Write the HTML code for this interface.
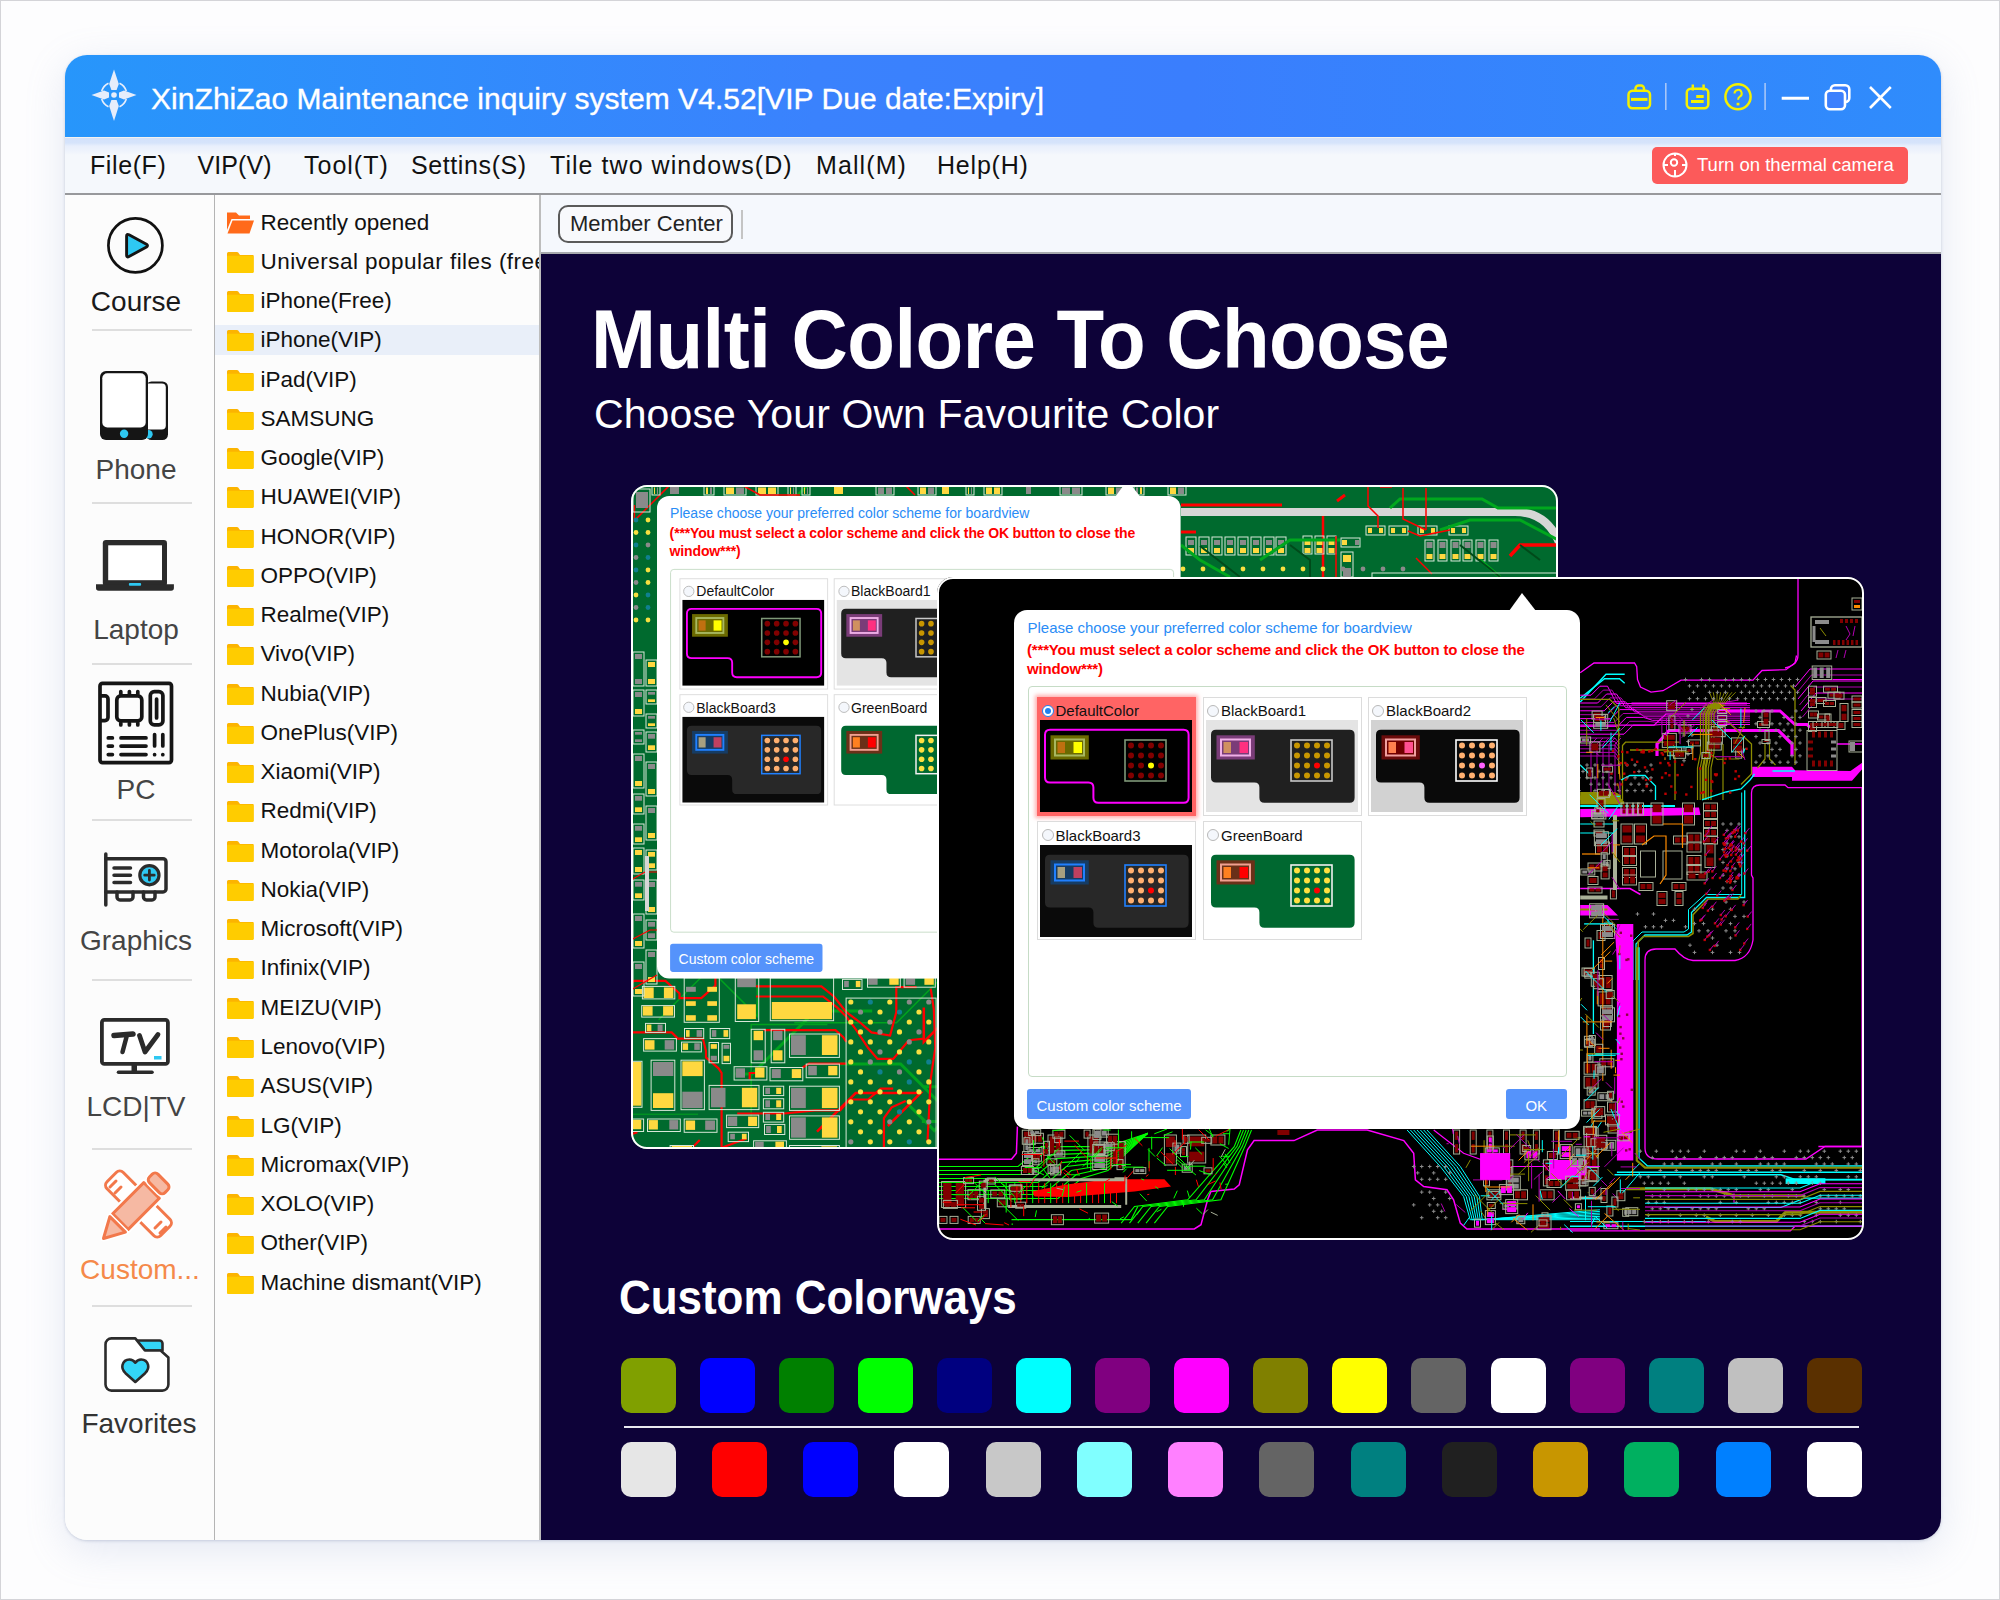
<!DOCTYPE html><html><head><meta charset="utf-8"><style>
*{margin:0;padding:0;box-sizing:border-box}
html,body{width:2000px;height:1600px;overflow:hidden;background:#fff;font-family:"Liberation Sans",sans-serif}
.a{position:absolute}
#frame{position:absolute;left:0;top:0;width:2000px;height:1600px;border:1px solid #d4d4d8;background:#fdfdfe}
#win{position:absolute;left:65px;top:55px;width:1876px;height:1485px;border-radius:22px;overflow:hidden;background:#fafafa;box-shadow:0 1px 3px rgba(120,135,170,0.35),0 10px 40px rgba(130,150,200,0.2)}
#in{position:absolute;left:-65px;top:-55px;width:2000px;height:1600px}
#title{left:65px;top:55px;width:1876px;height:82px;background:linear-gradient(90deg,#2796fb 0%,#3a82fd 40%,#3a7efd 60%,#2f8cfc 100%)}
.tt{left:151px;top:82px;letter-spacing:0.05px;-webkit-text-stroke:0.35px #fff;color:#fff;font-size:30px;white-space:nowrap;line-height:34px}
#menu{left:65px;top:137px;width:1876px;height:58px;background:linear-gradient(180deg,#f4f2f0 0px,#f4f2f0 1px,#d3e2fb 1.5px,#d6e4fb 6px,#e8effc 9px,#eef3fc 14px,#f5f8fc 18px,#f5f8fc 100%);border-bottom:2px solid #98999c}
.mi{top:150px;font-size:25px;line-height:30px;color:#111;white-space:nowrap}
#side{left:65px;top:195px;width:150px;height:1345px;background:#fcfcfc;border-right:1px solid #b4b4b4}
#tree{left:215px;top:195px;width:326px;height:1345px;background:#fcfcfc;border-right:2px solid #bdbdbd;overflow:hidden}
#tb{left:541px;top:195px;width:1400px;height:59px;background:#f5f8fd;border-bottom:2px solid #a8aaae}
#dark{left:541px;top:254px;width:1400px;height:1286px;background:#0d0238;overflow:hidden}
.lab{font-size:28px;line-height:30px;white-space:nowrap;text-align:center;width:148px;left:62px;color:#444}
.div{left:92px;width:100px;height:2px;background:#dedede}
.ti{left:262px;font-size:22.5px;line-height:26px;color:#111;white-space:nowrap}
.fd{left:227px;width:27px;height:21px}
.sw{width:55px;height:55px;border-radius:10px}
</style></head><body><div id="frame"></div>
<div id="win"><div id="in">
<div class="a" id="title"></div>
<svg class="a" style="left:87.5px;top:68.75px" width="52" height="52" viewBox="-26 -26 52 52">
<g fill="#e6edfb">
<path d="M0 -25.5 L4.8 -11 L2.6 -5 H-2.6 L-4.8 -11 Z"/>
<path d="M0 26 L4.8 11 L2.6 5 H-2.6 L-4.8 11 Z"/>
<path d="M-22.5 0 L-10 -4.5 L-5 -2.4 V2.4 L-10 4.5 Z"/>
<path d="M22.5 0 L10 -4.5 L5 -2.4 V2.4 L10 4.5 Z"/>
<circle cx="0" cy="0" r="2.8"/>
</g>
<g fill="none" stroke="#e6edfb" stroke-width="1.7">
<path d="M-12.3 -4 A13 13 0 0 1 -5.5 -11.8"/>
<path d="M5.5 -11.8 A13 13 0 0 1 12.3 -4"/>
<path d="M12.3 4 A13 13 0 0 1 5.5 11.8"/>
<path d="M-5.5 11.8 A13 13 0 0 1 -12.3 4"/>
</g></svg>
<div class="a tt">XinZhiZao Maintenance inquiry system V4.52[VIP Due date:Expiry]</div>
<svg class="a" style="left:1615px;top:75px" width="290" height="45" viewBox="1615 75 290 45">
<g fill="none" stroke="#f4f000" stroke-width="2.5" stroke-linejoin="round">
<rect x="1628.5" y="90.7" width="21.5" height="17.6" rx="4"/>
<path d="M1635.5 90.5 V88.5 a3 3 0 0 1 3 -3 H1641 a3 3 0 0 1 3 3 V90.5"/>
<rect x="1686.8" y="88.8" width="21.5" height="19.5" rx="4"/>
<path d="M1692.8 84.5 V90.5 M1703.6 84.5 V90.5"/>
<circle cx="1738" cy="96.75" r="12.6"/>
<path d="M1734.5 93.5 a3.6 3.6 0 1 1 5 3.3 c-1.2 0.6 -1.4 1.4 -1.4 3" stroke-width="2"/>
</g>
<rect x="1631" y="97.9" width="16.5" height="3" fill="#f4f000"/>
<rect x="1696.2" y="95" width="7.5" height="3" fill="#f4f000"/>
<rect x="1691" y="100" width="12.7" height="3" fill="#f4f000"/>
<rect x="1736.6" y="102.8" width="2.8" height="2.6" fill="#f4f000"/>
<rect x="1665" y="83" width="1.6" height="27" fill="#a6c6f8"/>
<rect x="1764.3" y="83" width="1.6" height="27" fill="#a6c6f8"/>
<g stroke="#fff" stroke-width="2.6">
<path d="M1781.7 98.3 H1809" stroke-width="3"/>
<rect x="1830.9" y="85.3" width="18.4" height="16.7" rx="4" fill="#3a7efc"/>
<rect x="1825.8" y="90.8" width="19.2" height="18.4" rx="4" fill="#3d80fd"/>
<path d="M1870 87 L1890.8 108 M1890.8 87 L1870 108"/>
</g>
</svg>
<div class="a" id="menu"></div>
<div class="a mi" style="left:90px;letter-spacing:0.6px">File(F)</div>
<div class="a mi" style="left:197.5px;letter-spacing:0.1px">VIP(V)</div>
<div class="a mi" style="left:304px;letter-spacing:1px">Tool(T)</div>
<div class="a mi" style="left:411px;letter-spacing:0.6px">Settins(S)</div>
<div class="a mi" style="left:550px;letter-spacing:1.05px">Tile two windows(D)</div>
<div class="a mi" style="left:816px;letter-spacing:1.1px">Mall(M)</div>
<div class="a mi" style="left:937px;letter-spacing:0.8px">Help(H)</div>
<div class="a" style="left:1652px;top:147px;width:256px;height:37px;background:#fc5a5a;border-radius:5px"></div>
<svg class="a" style="left:1660px;top:150px" width="30" height="30" viewBox="0 0 30 30"><g fill="none" stroke="#fff" stroke-width="2">
<circle cx="15" cy="15" r="11.5"/><circle cx="14" cy="12.5" r="3.2"/><path d="M3.5 15 H8 M22 15 H26.5 M15 20 V26.5 M15 3.5 V6"/></g></svg>
<div class="a" style="left:1697px;top:154px;font-size:18.5px;line-height:22px;color:#fff;white-space:nowrap">Turn on thermal camera</div>
<div class="a" id="side"></div>
<svg class="a" style="left:90px;top:205px" width="90" height="85" viewBox="90 205 90 85">
<circle cx="135.4" cy="245.4" r="27" fill="none" stroke="#111" stroke-width="2.7"/>
<path d="M126.6 236 Q126.6 233.5 129 234.8 L146.5 244.2 Q148.5 245.6 146.5 247 L129 256.5 Q126.6 257.8 126.6 255.2 Z" fill="#2ec8f2" stroke="#141414" stroke-width="2.9" stroke-linejoin="round"/></svg>
<div class="a lab" style="top:287px;color:#1a1a1a">Course</div>
<div class="a div" style="top:329px"></div>
<svg class="a" style="left:90px;top:360px" width="90" height="90" viewBox="90 360 90 90">
<rect x="146" y="381.4" width="22" height="58.6" rx="5.5" fill="#151515"/>
<rect x="140" y="383.6" width="25.8" height="46" rx="4" fill="#fff"/>
<circle cx="148.5" cy="434.2" r="4.2" fill="#2ec8f2"/>
<rect x="100" y="371" width="48" height="69" rx="6" fill="#151515"/>
<rect x="102.3" y="373.3" width="43.4" height="54.2" rx="5" fill="#fff"/>
<circle cx="124.1" cy="433.7" r="4.2" fill="#2ec8f2"/></svg>
<div class="a lab" style="top:455px">Phone</div>
<div class="a div" style="top:502px"></div>
<svg class="a" style="left:90px;top:530px" width="90" height="70" viewBox="90 530 90 70">
<rect x="102.8" y="540.1" width="64.2" height="46" rx="3.2" fill="#2b2b2b"/>
<path d="M96 584.2 H173.9 V588 a2.8 2.8 0 0 1 -2.8 2.8 H98.8 a2.8 2.8 0 0 1 -2.8 -2.8 Z" fill="#2b2b2b"/>
<rect x="108.2" y="545.3" width="53.8" height="34.9" fill="#fff"/>
<rect x="128.9" y="583.1" width="12.2" height="2.7" rx="1" fill="#2ec8f2"/></svg>
<div class="a lab" style="top:615px">Laptop</div>
<div class="a div" style="top:663px"></div>
<svg class="a" style="left:96px;top:679px" width="80" height="88" viewBox="0 0 80 88">
<g fill="none" stroke="#151515" stroke-width="3.7" stroke-linejoin="round">
<rect x="4" y="4.4" width="71.5" height="79.2" rx="2.5"/>
<rect x="20.8" y="16.9" width="25" height="25" rx="4"/>
<rect x="54.3" y="12.6" width="12.6" height="33.3" rx="4"/>
<path d="M4 16.9 H9 a3 3 0 0 1 3 3 V38.6 a3 3 0 0 1 -3 3 H4"/>
</g>
<g stroke="#151515" stroke-width="3.7" stroke-linecap="round">
<path d="M60.6 20 V39"/>
<path d="M24.8 12.5 V15 M33.4 12.5 V15 M41.8 12.5 V15 M24.8 44 V46 M33.4 44 V46 M41.8 44 V46"/>
<path d="M12.3 58.9 H16.4 M25 58.9 H50 M12.3 67.1 H16.4 M25 67.1 H50 M12.3 75.6 H16.4 M25 75.6 H50"/>
<path d="M58.6 55.5 V67 M66.8 55.5 V67 M58.6 75.6 V75.7 M66.8 75.6 V75.7"/>
</g></svg>
<div class="a lab" style="top:775px">PC</div>
<div class="a div" style="top:819px"></div>
<svg class="a" style="left:95px;top:840px" width="85" height="75" viewBox="95 840 85 75">
<g fill="none" stroke="#2b2b2b" stroke-width="3.5" stroke-linecap="round" stroke-linejoin="round">
<path d="M105.8 854 V905"/>
<path d="M105.8 858.7 H163 a3 3 0 0 1 3 3 V889 a3 3 0 0 1 -3 3 H105.8"/>
<path d="M117 892 V897 a3 3 0 0 0 3 3 H130 a3 3 0 0 0 3 -3 V892 M143.5 892 V897 a3 3 0 0 0 3 3 H152 a3 3 0 0 0 3 -3 V892"/>
<path d="M114 868.1 H130.5 M114 875.3 H130.5 M114 882.5 H130.5"/>
</g>
<circle cx="149.4" cy="875.2" r="9.6" fill="#2ec8f2" stroke="#2b2b2b" stroke-width="3.2"/>
<path d="M149.4 870.5 V880 M144.7 875.2 H154.2" stroke="#2b2b2b" stroke-width="2.8" stroke-linecap="round"/></svg>
<div class="a lab" style="top:926px">Graphics</div>
<div class="a div" style="top:979px"></div>
<svg class="a" style="left:90px;top:1005px" width="90" height="80" viewBox="90 1005 90 80">
<rect x="101.9" y="1019.9" width="66" height="44" rx="2.5" fill="#fff" stroke="#2b2b2b" stroke-width="3.8"/>
<path d="M133 1065 V1071 M135.5 1065 V1071" stroke="#2b2b2b" stroke-width="3"/>
<path d="M118.5 1072.3 H152" stroke="#2b2b2b" stroke-width="3.6" stroke-linecap="round"/>
<path d="M114 1035.5 L133 1034" stroke="#2b2b2b" stroke-width="5.5" stroke-linecap="round"/>
<path d="M126.5 1037 L122.5 1052" stroke="#2b2b2b" stroke-width="4.5" stroke-linecap="round"/>
<path d="M139.5 1035.5 L145 1052 L158 1034.5" fill="none" stroke="#2b2b2b" stroke-width="4.8" stroke-linecap="round" stroke-linejoin="round"/>
<rect x="154" y="1056" width="7.5" height="3.5" fill="#2ec8f2"/></svg>
<div class="a lab" style="top:1092px">LCD|TV</div>
<div class="a div" style="top:1148px"></div>
<svg class="a" style="left:100px;top:1166px" width="78" height="78" viewBox="0 0 78 78">
<g stroke="#f2784b" stroke-width="3" stroke-linejoin="round" stroke-linecap="round">
<rect x="-38" y="-11.5" width="76" height="23" rx="5" fill="#fff" transform="translate(38.5 38) rotate(45)"/>
<path d="M10 21 L16 15 M15 27 L21 21 M55 62 L61 56 M60 67 L66 61" fill="none"/>
<g transform="translate(36 40) rotate(-45)">
<rect x="-22" y="-11" width="44" height="22" fill="#f6b9a3" stroke="#fff" stroke-width="7"/>
<rect x="-22" y="-11" width="44" height="22" fill="#f6b9a3"/>
<path d="M-26 -11 L-46 0 L-26 11 Z" fill="#f6b9a3" stroke="#fff" stroke-width="6"/>
<path d="M-26 -11 L-46 0 L-26 11 Z" fill="#f6b9a3"/>
<rect x="26" y="-11" width="12" height="22" rx="4" fill="#f6b9a3" stroke="#fff" stroke-width="6"/>
<rect x="26" y="-11" width="12" height="22" rx="4" fill="#f6b9a3"/>
</g></g></svg>
<div class="a lab" style="top:1255px;left:66px;color:#f5894a">Custom...</div>
<div class="a div" style="top:1305px"></div>
<svg class="a" style="left:95px;top:1325px" width="85" height="75" viewBox="95 1325 85 75">
<g stroke="#2b2b2b" stroke-width="2.6" stroke-linejoin="round">
<path d="M136.5 1340.5 H159.5 a3 3 0 0 1 3 3 V1350.5 H145 Z" fill="#33d6f8"/>
<path d="M111.5 1338.4 H135.3 L144.9 1350.5 H160.6 L168.4 1357.5 V1384.6 a6 6 0 0 1 -6 6 H111.5 a6 6 0 0 1 -6 -6 V1344.4 a6 6 0 0 1 6 -6 Z" fill="#fff"/>
<path d="M135.3 1382 L125.5 1373.2 Q121.5 1369 122.5 1365 Q124 1359.5 129.5 1359.5 Q133 1359.5 135.3 1362.7 Q137.6 1359.5 141.1 1359.5 Q146.6 1359.5 148.1 1365 Q149.1 1369 145.1 1373.2 Z" fill="#33d6f8"/>
</g></svg>
<div class="a lab" style="top:1409px;left:65px;color:#333">Favorites</div>
<div class="a" id="tree"></div>
<div class="a" style="left:215px;top:325px;width:324px;height:30px;background:#e9eff9"></div>
<div class="a" style="left:214px;top:194px;width:325px;height:1346px;overflow:hidden">
<svg class="a" style="left:12px;top:17.0px" width="30" height="24" viewBox="0 0 30 24"><path d="M1 1.5 H10 L13 4.5 H24 V8 H5.5 L1 19 Z" fill="#ff6a1a"/><path d="M6.5 9.5 H28 L23.5 22.5 H1.5 Z" fill="#ff6a1a"/></svg>
<div class="a ti" style="left:46.5px;top:15.5px">Recently opened</div>
<svg class="a" style="left:13px;top:56.8px" width="28" height="22" viewBox="0 0 28 22"><path d="M0 2.5 a1.5 1.5 0 0 1 1.5 -1.5 H10 a1.5 1.5 0 0 1 1.2 0.6 L13 4 H26.5 V21 H1 a1 1 0 0 1 -1 -1 Z" fill="#fcb400"/><rect x="0" y="4.7" width="26.7" height="17.3" rx="1" fill="#ffcc00"/></svg>
<div class="a ti" style="left:46.5px;top:54.8px;letter-spacing:0.45px">Universal popular files (free)</div>
<svg class="a" style="left:13px;top:96.0px" width="28" height="22" viewBox="0 0 28 22"><path d="M0 2.5 a1.5 1.5 0 0 1 1.5 -1.5 H10 a1.5 1.5 0 0 1 1.2 0.6 L13 4 H26.5 V21 H1 a1 1 0 0 1 -1 -1 Z" fill="#fcb400"/><rect x="0" y="4.7" width="26.7" height="17.3" rx="1" fill="#ffcc00"/></svg>
<div class="a ti" style="left:46.5px;top:94.0px">iPhone(Free)</div>
<svg class="a" style="left:13px;top:135.3px" width="28" height="22" viewBox="0 0 28 22"><path d="M0 2.5 a1.5 1.5 0 0 1 1.5 -1.5 H10 a1.5 1.5 0 0 1 1.2 0.6 L13 4 H26.5 V21 H1 a1 1 0 0 1 -1 -1 Z" fill="#fcb400"/><rect x="0" y="4.7" width="26.7" height="17.3" rx="1" fill="#ffcc00"/></svg>
<div class="a ti" style="left:46.5px;top:133.3px">iPhone(VIP)</div>
<svg class="a" style="left:13px;top:174.5px" width="28" height="22" viewBox="0 0 28 22"><path d="M0 2.5 a1.5 1.5 0 0 1 1.5 -1.5 H10 a1.5 1.5 0 0 1 1.2 0.6 L13 4 H26.5 V21 H1 a1 1 0 0 1 -1 -1 Z" fill="#fcb400"/><rect x="0" y="4.7" width="26.7" height="17.3" rx="1" fill="#ffcc00"/></svg>
<div class="a ti" style="left:46.5px;top:172.5px">iPad(VIP)</div>
<svg class="a" style="left:13px;top:213.8px" width="28" height="22" viewBox="0 0 28 22"><path d="M0 2.5 a1.5 1.5 0 0 1 1.5 -1.5 H10 a1.5 1.5 0 0 1 1.2 0.6 L13 4 H26.5 V21 H1 a1 1 0 0 1 -1 -1 Z" fill="#fcb400"/><rect x="0" y="4.7" width="26.7" height="17.3" rx="1" fill="#ffcc00"/></svg>
<div class="a ti" style="left:46.5px;top:211.8px">SAMSUNG</div>
<svg class="a" style="left:13px;top:253.1px" width="28" height="22" viewBox="0 0 28 22"><path d="M0 2.5 a1.5 1.5 0 0 1 1.5 -1.5 H10 a1.5 1.5 0 0 1 1.2 0.6 L13 4 H26.5 V21 H1 a1 1 0 0 1 -1 -1 Z" fill="#fcb400"/><rect x="0" y="4.7" width="26.7" height="17.3" rx="1" fill="#ffcc00"/></svg>
<div class="a ti" style="left:46.5px;top:251.1px">Google(VIP)</div>
<svg class="a" style="left:13px;top:292.3px" width="28" height="22" viewBox="0 0 28 22"><path d="M0 2.5 a1.5 1.5 0 0 1 1.5 -1.5 H10 a1.5 1.5 0 0 1 1.2 0.6 L13 4 H26.5 V21 H1 a1 1 0 0 1 -1 -1 Z" fill="#fcb400"/><rect x="0" y="4.7" width="26.7" height="17.3" rx="1" fill="#ffcc00"/></svg>
<div class="a ti" style="left:46.5px;top:290.3px">HUAWEI(VIP)</div>
<svg class="a" style="left:13px;top:331.6px" width="28" height="22" viewBox="0 0 28 22"><path d="M0 2.5 a1.5 1.5 0 0 1 1.5 -1.5 H10 a1.5 1.5 0 0 1 1.2 0.6 L13 4 H26.5 V21 H1 a1 1 0 0 1 -1 -1 Z" fill="#fcb400"/><rect x="0" y="4.7" width="26.7" height="17.3" rx="1" fill="#ffcc00"/></svg>
<div class="a ti" style="left:46.5px;top:329.6px">HONOR(VIP)</div>
<svg class="a" style="left:13px;top:370.8px" width="28" height="22" viewBox="0 0 28 22"><path d="M0 2.5 a1.5 1.5 0 0 1 1.5 -1.5 H10 a1.5 1.5 0 0 1 1.2 0.6 L13 4 H26.5 V21 H1 a1 1 0 0 1 -1 -1 Z" fill="#fcb400"/><rect x="0" y="4.7" width="26.7" height="17.3" rx="1" fill="#ffcc00"/></svg>
<div class="a ti" style="left:46.5px;top:368.8px">OPPO(VIP)</div>
<svg class="a" style="left:13px;top:410.1px" width="28" height="22" viewBox="0 0 28 22"><path d="M0 2.5 a1.5 1.5 0 0 1 1.5 -1.5 H10 a1.5 1.5 0 0 1 1.2 0.6 L13 4 H26.5 V21 H1 a1 1 0 0 1 -1 -1 Z" fill="#fcb400"/><rect x="0" y="4.7" width="26.7" height="17.3" rx="1" fill="#ffcc00"/></svg>
<div class="a ti" style="left:46.5px;top:408.1px">Realme(VIP)</div>
<svg class="a" style="left:13px;top:449.4px" width="28" height="22" viewBox="0 0 28 22"><path d="M0 2.5 a1.5 1.5 0 0 1 1.5 -1.5 H10 a1.5 1.5 0 0 1 1.2 0.6 L13 4 H26.5 V21 H1 a1 1 0 0 1 -1 -1 Z" fill="#fcb400"/><rect x="0" y="4.7" width="26.7" height="17.3" rx="1" fill="#ffcc00"/></svg>
<div class="a ti" style="left:46.5px;top:447.4px">Vivo(VIP)</div>
<svg class="a" style="left:13px;top:488.6px" width="28" height="22" viewBox="0 0 28 22"><path d="M0 2.5 a1.5 1.5 0 0 1 1.5 -1.5 H10 a1.5 1.5 0 0 1 1.2 0.6 L13 4 H26.5 V21 H1 a1 1 0 0 1 -1 -1 Z" fill="#fcb400"/><rect x="0" y="4.7" width="26.7" height="17.3" rx="1" fill="#ffcc00"/></svg>
<div class="a ti" style="left:46.5px;top:486.6px">Nubia(VIP)</div>
<svg class="a" style="left:13px;top:527.9px" width="28" height="22" viewBox="0 0 28 22"><path d="M0 2.5 a1.5 1.5 0 0 1 1.5 -1.5 H10 a1.5 1.5 0 0 1 1.2 0.6 L13 4 H26.5 V21 H1 a1 1 0 0 1 -1 -1 Z" fill="#fcb400"/><rect x="0" y="4.7" width="26.7" height="17.3" rx="1" fill="#ffcc00"/></svg>
<div class="a ti" style="left:46.5px;top:525.9px">OnePlus(VIP)</div>
<svg class="a" style="left:13px;top:567.1px" width="28" height="22" viewBox="0 0 28 22"><path d="M0 2.5 a1.5 1.5 0 0 1 1.5 -1.5 H10 a1.5 1.5 0 0 1 1.2 0.6 L13 4 H26.5 V21 H1 a1 1 0 0 1 -1 -1 Z" fill="#fcb400"/><rect x="0" y="4.7" width="26.7" height="17.3" rx="1" fill="#ffcc00"/></svg>
<div class="a ti" style="left:46.5px;top:565.1px">Xiaomi(VIP)</div>
<svg class="a" style="left:13px;top:606.4px" width="28" height="22" viewBox="0 0 28 22"><path d="M0 2.5 a1.5 1.5 0 0 1 1.5 -1.5 H10 a1.5 1.5 0 0 1 1.2 0.6 L13 4 H26.5 V21 H1 a1 1 0 0 1 -1 -1 Z" fill="#fcb400"/><rect x="0" y="4.7" width="26.7" height="17.3" rx="1" fill="#ffcc00"/></svg>
<div class="a ti" style="left:46.5px;top:604.4px">Redmi(VIP)</div>
<svg class="a" style="left:13px;top:645.7px" width="28" height="22" viewBox="0 0 28 22"><path d="M0 2.5 a1.5 1.5 0 0 1 1.5 -1.5 H10 a1.5 1.5 0 0 1 1.2 0.6 L13 4 H26.5 V21 H1 a1 1 0 0 1 -1 -1 Z" fill="#fcb400"/><rect x="0" y="4.7" width="26.7" height="17.3" rx="1" fill="#ffcc00"/></svg>
<div class="a ti" style="left:46.5px;top:643.7px">Motorola(VIP)</div>
<svg class="a" style="left:13px;top:684.9px" width="28" height="22" viewBox="0 0 28 22"><path d="M0 2.5 a1.5 1.5 0 0 1 1.5 -1.5 H10 a1.5 1.5 0 0 1 1.2 0.6 L13 4 H26.5 V21 H1 a1 1 0 0 1 -1 -1 Z" fill="#fcb400"/><rect x="0" y="4.7" width="26.7" height="17.3" rx="1" fill="#ffcc00"/></svg>
<div class="a ti" style="left:46.5px;top:682.9px">Nokia(VIP)</div>
<svg class="a" style="left:13px;top:724.2px" width="28" height="22" viewBox="0 0 28 22"><path d="M0 2.5 a1.5 1.5 0 0 1 1.5 -1.5 H10 a1.5 1.5 0 0 1 1.2 0.6 L13 4 H26.5 V21 H1 a1 1 0 0 1 -1 -1 Z" fill="#fcb400"/><rect x="0" y="4.7" width="26.7" height="17.3" rx="1" fill="#ffcc00"/></svg>
<div class="a ti" style="left:46.5px;top:722.2px">Microsoft(VIP)</div>
<svg class="a" style="left:13px;top:763.4px" width="28" height="22" viewBox="0 0 28 22"><path d="M0 2.5 a1.5 1.5 0 0 1 1.5 -1.5 H10 a1.5 1.5 0 0 1 1.2 0.6 L13 4 H26.5 V21 H1 a1 1 0 0 1 -1 -1 Z" fill="#fcb400"/><rect x="0" y="4.7" width="26.7" height="17.3" rx="1" fill="#ffcc00"/></svg>
<div class="a ti" style="left:46.5px;top:761.4px">Infinix(VIP)</div>
<svg class="a" style="left:13px;top:802.7px" width="28" height="22" viewBox="0 0 28 22"><path d="M0 2.5 a1.5 1.5 0 0 1 1.5 -1.5 H10 a1.5 1.5 0 0 1 1.2 0.6 L13 4 H26.5 V21 H1 a1 1 0 0 1 -1 -1 Z" fill="#fcb400"/><rect x="0" y="4.7" width="26.7" height="17.3" rx="1" fill="#ffcc00"/></svg>
<div class="a ti" style="left:46.5px;top:800.7px">MEIZU(VIP)</div>
<svg class="a" style="left:13px;top:842.0px" width="28" height="22" viewBox="0 0 28 22"><path d="M0 2.5 a1.5 1.5 0 0 1 1.5 -1.5 H10 a1.5 1.5 0 0 1 1.2 0.6 L13 4 H26.5 V21 H1 a1 1 0 0 1 -1 -1 Z" fill="#fcb400"/><rect x="0" y="4.7" width="26.7" height="17.3" rx="1" fill="#ffcc00"/></svg>
<div class="a ti" style="left:46.5px;top:840.0px">Lenovo(VIP)</div>
<svg class="a" style="left:13px;top:881.2px" width="28" height="22" viewBox="0 0 28 22"><path d="M0 2.5 a1.5 1.5 0 0 1 1.5 -1.5 H10 a1.5 1.5 0 0 1 1.2 0.6 L13 4 H26.5 V21 H1 a1 1 0 0 1 -1 -1 Z" fill="#fcb400"/><rect x="0" y="4.7" width="26.7" height="17.3" rx="1" fill="#ffcc00"/></svg>
<div class="a ti" style="left:46.5px;top:879.2px">ASUS(VIP)</div>
<svg class="a" style="left:13px;top:920.5px" width="28" height="22" viewBox="0 0 28 22"><path d="M0 2.5 a1.5 1.5 0 0 1 1.5 -1.5 H10 a1.5 1.5 0 0 1 1.2 0.6 L13 4 H26.5 V21 H1 a1 1 0 0 1 -1 -1 Z" fill="#fcb400"/><rect x="0" y="4.7" width="26.7" height="17.3" rx="1" fill="#ffcc00"/></svg>
<div class="a ti" style="left:46.5px;top:918.5px">LG(VIP)</div>
<svg class="a" style="left:13px;top:959.7px" width="28" height="22" viewBox="0 0 28 22"><path d="M0 2.5 a1.5 1.5 0 0 1 1.5 -1.5 H10 a1.5 1.5 0 0 1 1.2 0.6 L13 4 H26.5 V21 H1 a1 1 0 0 1 -1 -1 Z" fill="#fcb400"/><rect x="0" y="4.7" width="26.7" height="17.3" rx="1" fill="#ffcc00"/></svg>
<div class="a ti" style="left:46.5px;top:957.7px">Micromax(VIP)</div>
<svg class="a" style="left:13px;top:999.0px" width="28" height="22" viewBox="0 0 28 22"><path d="M0 2.5 a1.5 1.5 0 0 1 1.5 -1.5 H10 a1.5 1.5 0 0 1 1.2 0.6 L13 4 H26.5 V21 H1 a1 1 0 0 1 -1 -1 Z" fill="#fcb400"/><rect x="0" y="4.7" width="26.7" height="17.3" rx="1" fill="#ffcc00"/></svg>
<div class="a ti" style="left:46.5px;top:997.0px">XOLO(VIP)</div>
<svg class="a" style="left:13px;top:1038.3px" width="28" height="22" viewBox="0 0 28 22"><path d="M0 2.5 a1.5 1.5 0 0 1 1.5 -1.5 H10 a1.5 1.5 0 0 1 1.2 0.6 L13 4 H26.5 V21 H1 a1 1 0 0 1 -1 -1 Z" fill="#fcb400"/><rect x="0" y="4.7" width="26.7" height="17.3" rx="1" fill="#ffcc00"/></svg>
<div class="a ti" style="left:46.5px;top:1036.3px">Other(VIP)</div>
<svg class="a" style="left:13px;top:1077.5px" width="28" height="22" viewBox="0 0 28 22"><path d="M0 2.5 a1.5 1.5 0 0 1 1.5 -1.5 H10 a1.5 1.5 0 0 1 1.2 0.6 L13 4 H26.5 V21 H1 a1 1 0 0 1 -1 -1 Z" fill="#fcb400"/><rect x="0" y="4.7" width="26.7" height="17.3" rx="1" fill="#ffcc00"/></svg>
<div class="a ti" style="left:46.5px;top:1075.5px">Machine dismant(VIP)</div>
</div>
<div class="a" id="tb"></div>
<div class="a" style="left:558px;top:205px;width:175px;height:38px;border:2px solid #5a5a5a;border-radius:10px;background:#f8f9fc"></div>
<div class="a" style="left:570px;top:211px;font-size:22px;line-height:26px;color:#222;white-space:nowrap">Member Center</div>
<div class="a" style="left:741px;top:210px;width:2px;height:29px;background:#c4c4c4"></div>
<div class="a" id="dark"></div>
<div class="a" style="left:591px;top:290.5px;font-size:78px;line-height:90px;font-weight:700;color:#fff;letter-spacing:-0.52px;transform:scaleY(1.075);transform-origin:0 0;white-space:nowrap">Multi Colore To Choose</div>
<div class="a" style="left:594px;top:390px;font-size:41px;letter-spacing:0.1px;line-height:48px;color:#fff;white-space:nowrap">Choose Your Own Favourite Color</div>
<svg class="a" style="left:631px;top:485px" width="927" height="664" viewBox="631 485 927 664"><defs><clipPath id="cb"><rect x="631" y="485" width="927" height="664" rx="16"/></clipPath></defs><g clip-path="url(#cb)"><rect x="631" y="485" width="927" height="664" fill="#006a2e"/><polyline points="851.6,846.4 925.7,846.4 953.9,818.2 910.5,861.6" fill="none" stroke="#00a21e" stroke-width="1"/><polyline points="1435.7,832.4 1424.6,832.4 1411.6,819.4 1337.2,745" fill="none" stroke="#00a21e" stroke-width="3"/><polyline points="1043.2,1106.2 1060,1123.1 1019.5,1082.5 1069.6,1032.3" fill="none" stroke="#00a21e" stroke-width="1.5"/><polyline points="1263.2,1101.8 1342.6,1101.8 1420.1,1101.8 1420.1,1022.7" fill="none" stroke="#00a21e" stroke-width="1.5"/><polyline points="746.4,805 667.1,884.3 667.1,844.4 667.1,897.5" fill="none" stroke="#00a21e" stroke-width="1.5"/><polyline points="1297,704.8 1342.4,659.4 1342.4,671.6 1372.8,671.6" fill="none" stroke="#00a21e" stroke-width="1.5"/><polyline points="921.9,1121.5 958.3,1121.5 900.6,1063.9 840.5,1063.9" fill="none" stroke="#00a21e" stroke-width="3"/><polyline points="911.9,710 991,710 971.7,690.7 897.5,690.7" fill="none" stroke="#00a21e" stroke-width="1"/><polyline points="1177.4,1119 1177.4,1091.4 1228.8,1039.9 1297.9,970.9" fill="none" stroke="#00a21e" stroke-width="1"/><polyline points="1531.5,939 1531.5,913.4 1531.5,970.9 1531.5,1047.3" fill="none" stroke="#00a21e" stroke-width="1.5"/><polyline points="1381.7,1122.9 1381.7,1067.4 1407.4,1093.1 1384.6,1093.1" fill="none" stroke="#00a21e" stroke-width="1.5"/><polyline points="1177.4,764.7 1111.9,764.7 1151.3,725.3 1151.3,657.1" fill="none" stroke="#00a21e" stroke-width="3"/><polyline points="1511.8,1100.8 1511.8,1058.8 1477.9,1058.8 1496.3,1058.8" fill="none" stroke="#00a21e" stroke-width="3"/><polyline points="1105.9,616.8 1156.3,667.2 1183,640.4 1165.1,640.4" fill="none" stroke="#00a21e" stroke-width="1"/><polyline points="957.2,616 885,616 885,605.5 885,578.1" fill="none" stroke="#00a21e" stroke-width="1"/><polyline points="1069.4,1000.6 1069.4,1064.9 1069.4,1108.7 1053.3,1092.6" fill="none" stroke="#00a21e" stroke-width="1"/><polyline points="956.6,914.6 925.4,883.3 925.4,823.1 925.4,810.1" fill="none" stroke="#00a21e" stroke-width="3"/><polyline points="1233.8,844.4 1167.7,778.4 1123,778.4 1165.2,778.4" fill="none" stroke="#00a21e" stroke-width="1"/><polyline points="1311.2,859.4 1311.2,799.2 1311.2,836.4 1294.2,836.4" fill="none" stroke="#00a21e" stroke-width="1.5"/><polyline points="798.3,536.4 798.3,494.6 834,458.8 834,432.4" fill="none" stroke="#00a21e" stroke-width="3"/><polyline points="1527.5,760.7 1464.6,697.8 1537.4,770.6 1611.5,696.5" fill="none" stroke="#00a21e" stroke-width="1"/><polyline points="757.3,984.4 757.3,1016.4 709.7,968.7 658.7,1019.7" fill="none" stroke="#00a21e" stroke-width="1.5"/><polyline points="1075.5,739.1 1075.5,712.4 1075.5,771.3 1126.1,821.9" fill="none" stroke="#00a21e" stroke-width="3"/><polyline points="698.1,1114.2 626.4,1114.2 566.1,1114.2 566.1,1178.5" fill="none" stroke="#00a21e" stroke-width="1"/><polyline points="1207.5,933.3 1207.5,961.1 1230.3,984 1298.7,915.6" fill="none" stroke="#00a21e" stroke-width="3"/><polyline points="735.3,1074.1 752.1,1074.1 815.1,1011.1 872.2,1011.1" fill="none" stroke="#00a21e" stroke-width="3"/><polyline points="957.5,961.8 896.5,1022.8 854.7,1022.8 794.3,1022.8" fill="none" stroke="#00a21e" stroke-width="1.5"/><polyline points="1078.2,1004.4 1063.4,989.6 1092.3,1018.5 1063.3,1018.5" fill="none" stroke="#00a21e" stroke-width="1.5"/><polyline points="1046.5,1022.3 1046.5,1091.6 1046.5,1108.5 982,1108.5" fill="none" stroke="#00a21e" stroke-width="3"/><polyline points="1017.2,978.6 998.2,978.6 951.3,978.6 1016,978.6" fill="none" stroke="#00a21e" stroke-width="1.5"/><polyline points="923.9,1086.7 978.2,1086.7 934.4,1130.6 908,1104.2" fill="none" stroke="#00a21e" stroke-width="3"/><polyline points="827.4,1024.6 751.2,1024.6 751.2,1090.1 751.2,1116.5" fill="none" stroke="#00a21e" stroke-width="1.5"/><polyline points="1130.5,1102.4 1159.9,1131.8 1159.9,1183.5 1145.1,1198.3" fill="none" stroke="#ff0000" stroke-width="1"/><polyline points="1294.7,976.2 1294.7,1006.8 1294.7,1072.7 1294.7,1108.9" fill="none" stroke="#ff0000" stroke-width="1.5"/><polyline points="923.8,1007.5 923.8,1042 976.1,989.7 1015.9,989.7" fill="none" stroke="#ff0000" stroke-width="2.5"/><polyline points="1464.8,962.9 1496.8,994.9 1533.6,1031.8 1533.6,1077.5" fill="none" stroke="#ff0000" stroke-width="1"/><polyline points="1376.5,656.8 1408.7,624.6 1408.7,666.6 1408.7,689.2" fill="none" stroke="#ff0000" stroke-width="2.5"/><polyline points="1005.3,596.7 1016.9,596.7 1063.4,550.2 1102.9,550.2" fill="none" stroke="#ff0000" stroke-width="1"/><polyline points="1004.7,696.1 1016.7,696.1 1041,696.1 1074.8,696.1" fill="none" stroke="#ff0000" stroke-width="1"/><polyline points="854.9,743.4 876.4,764.8 923.7,812.1 859,876.9" fill="none" stroke="#ff0000" stroke-width="1"/><polyline points="1379.5,678.1 1448.4,609.2 1505.7,666.6 1466.4,705.9" fill="none" stroke="#ff0000" stroke-width="1.5"/><polyline points="658.9,708.7 728.5,778.3 744.1,762.7 675.9,830.8" fill="none" stroke="#ff0000" stroke-width="2.5"/><polyline points="634.4,505.1 634.4,520.6 674.6,480.4 661.3,493.6" fill="none" stroke="#ff0000" stroke-width="1.5"/><polyline points="817,1131.6 855.7,1093 920.7,1093 887.8,1126" fill="none" stroke="#ff0000" stroke-width="2.5"/><polyline points="628,984 634.2,980.9 665.4,980.9 679.5,993.4 679.5,998.1 701.3,998.1 715.4,985.6 715.4,977.8" fill="none" stroke="#ff0000" stroke-width="2.2"/><polyline points="628,1032.4 640.5,1032.4 671.7,1032.4 677.9,1038.6 702.9,1038.6 706,1051.1 706,1057.4 718.5,1068.3 721.6,1073 721.6,1147.8" fill="none" stroke="#ff0000" stroke-width="2.2"/><polyline points="755.9,986.4 821.4,986.4 833.9,996.5 846.4,1012.1 858.9,1021.5 871.4,1032.4 890.1,1035.5 896.3,1012.1 896.3,987.2 916.6,987.2" fill="none" stroke="#ff0000" stroke-width="2.2"/><polyline points="755.9,996.5 823,996.5 837,1007.4 846.4,1016.8 855.8,1029.3 868.2,1048 877.6,1058.9 893.2,1058.9 908.8,1040.2 924.4,1038.6" fill="none" stroke="#ff0000" stroke-width="2.2"/><polyline points="763.7,1030.1 835.5,1030.1 843.3,1037.1 846.4,1041.8" fill="none" stroke="#ff0000" stroke-width="2.2"/><polyline points="802.7,1067.5 809,1063.6 846.4,1063.6" fill="none" stroke="#ff0000" stroke-width="2.2"/><polyline points="749.7,1079.2 749.7,1073 762.2,1073" fill="none" stroke="#ff0000" stroke-width="2.2"/><polyline points="883.9,1147.8 883.9,1118.2 891.7,1107.3 905.7,1101" fill="none" stroke="#ff0000" stroke-width="2.2"/><polyline points="628,1135.4 637.4,1132.2" fill="none" stroke="#ff0000" stroke-width="2.2"/><polyline points="693.5,1146.3 699.8,1140" fill="none" stroke="#ff0000" stroke-width="2.2"/><polyline points="721.6,1147.8 746.6,1138.5" fill="none" stroke="#ff0000" stroke-width="2.2"/><polyline points="737.2,1113.5 784,1113.5 815.2,1110.4 840.2,1110.4 849.5,1099.5 868.2,1099.5 880.7,1088.6 893.2,1088.6" fill="none" stroke="#ff0000" stroke-width="2.2"/><polyline points="930.7,988.7 933.8,1009 935.3,1048 930.7,1079.2 927.5,1141.6" fill="none" stroke="#ff0000" stroke-width="2.2"/><rect x="642.4" y="986.4" width="32.4" height="12.5" fill="none" stroke="#d8e8d8" stroke-width="1"/><rect x="643.6" y="987.5" width="10.1" height="10.6" fill="#ffd840"/><rect x="663.9" y="987.5" width="9.4" height="10.6" fill="#ffd840"/><rect x="641.7" y="1005.6" width="32.8" height="11.5" fill="none" stroke="#d8e8d8" stroke-width="1"/><rect x="642.8" y="1006.2" width="9.8" height="9.4" fill="#ffd840"/><rect x="663.1" y="1006.2" width="10.1" height="9.4" fill="#ffd840"/><rect x="684.2" y="977.8" width="35.1" height="44.5" fill="none" stroke="#d8e8d8" stroke-width="1"/><rect x="686" y="986.8" width="9.8" height="5" fill="#8a8a8a"/><rect x="707.3" y="986.8" width="9.7" height="5" fill="#ffd840"/><rect x="686" y="1001.2" width="9.8" height="4.7" fill="#ffd840"/><rect x="707.3" y="1001.2" width="9.7" height="4.7" fill="#ffd840"/><rect x="686" y="1015.2" width="9.8" height="5.5" fill="#ffd840"/><rect x="707.3" y="1015.2" width="9.7" height="5.5" fill="#ffd840"/><rect x="735.3" y="977.8" width="23.4" height="43.7" fill="none" stroke="#d8e8d8" stroke-width="1"/><rect x="737.2" y="977.8" width="18.7" height="9.4" fill="#8a8a8a"/><rect x="737.2" y="1004.3" width="18.7" height="14.8" fill="#ffd840"/><rect x="770.3" y="977.8" width="63.3" height="42.9" fill="none" stroke="#d8e8d8" stroke-width="1"/><rect x="771.8" y="1002" width="60.2" height="17.2" fill="#ffd840"/><rect x="842.5" y="979.4" width="19.5" height="10.1" fill="none" stroke="#d8e8d8" stroke-width="1"/><rect x="844.1" y="980.9" width="4.7" height="6.2" fill="#8a8a8a"/><rect x="855.8" y="980.9" width="4.7" height="6.2" fill="#ffd840"/><rect x="867.5" y="977.8" width="32.8" height="9.4" fill="none" stroke="#d8e8d8" stroke-width="1"/><rect x="868.2" y="977.8" width="9.4" height="7" fill="#8a8a8a"/><rect x="889.3" y="977.8" width="9.4" height="7" fill="#ffd840"/><rect x="904.1" y="977.8" width="31.2" height="9.4" fill="none" stroke="#d8e8d8" stroke-width="1"/><rect x="905.7" y="977.8" width="9.4" height="7" fill="#8a8a8a"/><rect x="924.4" y="977.8" width="9.4" height="7" fill="#ffd840"/><rect x="645.5" y="1023.4" width="20" height="9" fill="none" stroke="#d8e8d8" stroke-width="1"/><rect x="646.7" y="1024.6" width="4.7" height="6.6" fill="#ffd840"/><rect x="657.6" y="1024.6" width="5" height="6.6" fill="#8a8a8a"/><rect x="643.6" y="1038.6" width="32.8" height="12.5" fill="none" stroke="#d8e8d8" stroke-width="1"/><rect x="644.8" y="1040.2" width="9.7" height="9.4" fill="#ffd840"/><rect x="664.7" y="1040.2" width="9.4" height="9.4" fill="#8a8a8a"/><rect x="684.5" y="1028.5" width="19.2" height="10.1" fill="none" stroke="#d8e8d8" stroke-width="1"/><rect x="686" y="1030.1" width="3.6" height="6.7" fill="#ffd840"/><rect x="696.6" y="1030.1" width="5.5" height="6.7" fill="#8a8a8a"/><rect x="710.2" y="1028.5" width="19.5" height="10.1" fill="none" stroke="#d8e8d8" stroke-width="1"/><rect x="711.9" y="1030.1" width="4.4" height="6.7" fill="#8a8a8a"/><rect x="723.5" y="1030.1" width="4.7" height="6.7" fill="#ffd840"/><rect x="681.5" y="1042.1" width="19.8" height="9.8" fill="none" stroke="#d8e8d8" stroke-width="1"/><rect x="682.6" y="1043.3" width="5.5" height="6.6" fill="#ffd840"/><rect x="694.3" y="1043.3" width="5.5" height="6.6" fill="#8a8a8a"/><rect x="709.1" y="1042.5" width="9.4" height="20.3" fill="none" stroke="#d8e8d8" stroke-width="1"/><rect x="710.7" y="1044.1" width="6.2" height="4.7" fill="#ffd840"/><rect x="710.7" y="1055.8" width="6.2" height="4.7" fill="#8a8a8a"/><rect x="722.1" y="1043.3" width="8.4" height="20.3" fill="none" stroke="#d8e8d8" stroke-width="1"/><rect x="723.5" y="1044.9" width="5.9" height="3.9" fill="#8a8a8a"/><rect x="723.5" y="1055.8" width="5.9" height="5.5" fill="#ffd840"/><rect x="751.2" y="1029.3" width="14" height="33.5" fill="none" stroke="#d8e8d8" stroke-width="1"/><rect x="753.6" y="1030.8" width="9.4" height="9.4" fill="#ffd840"/><rect x="753.6" y="1050.3" width="9.4" height="10.1" fill="#8a8a8a"/><rect x="771.2" y="1029.3" width="13.6" height="33.5" fill="none" stroke="#d8e8d8" stroke-width="1"/><rect x="773.1" y="1030.8" width="9.4" height="9.4" fill="#8a8a8a"/><rect x="773.1" y="1050.3" width="9.4" height="10.1" fill="#ffd840"/><rect x="789.5" y="1034" width="49.9" height="23.4" fill="none" stroke="#d8e8d8" stroke-width="1"/><rect x="791" y="1035.2" width="14.8" height="19.8" fill="#8a8a8a"/><rect x="821.9" y="1035.2" width="15.6" height="19.8" fill="#ffd840"/><rect x="631.1" y="1061.3" width="10.9" height="46" fill="none" stroke="#d8e8d8" stroke-width="1"/><rect x="631.9" y="1062" width="9.4" height="43.7" fill="#ffd840"/><rect x="651.1" y="1060.2" width="23.7" height="50.2" fill="none" stroke="#d8e8d8" stroke-width="1"/><rect x="653" y="1062" width="20.3" height="14" fill="#8a8a8a"/><rect x="653" y="1093.2" width="20.3" height="14.8" fill="#ffd840"/><rect x="681" y="1060.2" width="23.4" height="49.5" fill="none" stroke="#d8e8d8" stroke-width="1"/><rect x="682.3" y="1061.3" width="20.3" height="14.8" fill="#ffd840"/><rect x="682.3" y="1091.7" width="20.3" height="16.4" fill="#8a8a8a"/><rect x="734.1" y="1066.7" width="32.8" height="13.3" fill="none" stroke="#d8e8d8" stroke-width="1"/><rect x="735.6" y="1068.3" width="9.4" height="9.4" fill="#8a8a8a"/><rect x="755.1" y="1067.5" width="9.4" height="10.1" fill="#ffd840"/><rect x="770" y="1067.5" width="32.8" height="13.3" fill="none" stroke="#d8e8d8" stroke-width="1"/><rect x="771.8" y="1069.1" width="9" height="8.9" fill="#8a8a8a"/><rect x="791.8" y="1069.1" width="9.4" height="8.9" fill="#ffd840"/><rect x="806.2" y="1064.1" width="33.2" height="13.6" fill="none" stroke="#d8e8d8" stroke-width="1"/><rect x="808.2" y="1065.9" width="8.6" height="9.4" fill="#8a8a8a"/><rect x="828.2" y="1065.9" width="9.2" height="9.4" fill="#ffd840"/><rect x="709.1" y="1085.4" width="49.9" height="24.2" fill="none" stroke="#d8e8d8" stroke-width="1"/><rect x="711" y="1087.8" width="14.5" height="19.5" fill="#8a8a8a"/><rect x="741.9" y="1087.8" width="15.3" height="19.5" fill="#ffd840"/><rect x="763.4" y="1086.2" width="20.3" height="9.4" fill="none" stroke="#d8e8d8" stroke-width="1"/><rect x="765.3" y="1087.8" width="4.7" height="6.2" fill="#8a8a8a"/><rect x="776.2" y="1087.8" width="5" height="6.2" fill="#ffd840"/><rect x="763.4" y="1098.7" width="20.3" height="10.1" fill="none" stroke="#d8e8d8" stroke-width="1"/><rect x="765.3" y="1100.3" width="4.7" height="7" fill="#8a8a8a"/><rect x="776.2" y="1100.3" width="5" height="7" fill="#ffd840"/><rect x="789.5" y="1086.2" width="49.9" height="24.2" fill="none" stroke="#d8e8d8" stroke-width="1"/><rect x="791" y="1087.8" width="14.8" height="20.3" fill="#8a8a8a"/><rect x="821.9" y="1087.8" width="15.6" height="20.3" fill="#ffd840"/><rect x="631.1" y="1119" width="12.5" height="12.5" fill="none" stroke="#d8e8d8" stroke-width="1"/><rect x="632.7" y="1119.8" width="8.6" height="9.4" fill="#ffd840"/><rect x="647.5" y="1119" width="32.8" height="12.5" fill="none" stroke="#d8e8d8" stroke-width="1"/><rect x="648.7" y="1120.1" width="9.2" height="9.4" fill="#ffd840"/><rect x="669.3" y="1120.1" width="8.9" height="9.4" fill="#8a8a8a"/><rect x="684.2" y="1119" width="32.8" height="13.3" fill="none" stroke="#d8e8d8" stroke-width="1"/><rect x="685.7" y="1120.5" width="9.4" height="9.4" fill="#ffd840"/><rect x="705.2" y="1120.5" width="9.8" height="9.4" fill="#8a8a8a"/><rect x="726.6" y="1115.1" width="32.1" height="12.5" fill="none" stroke="#d8e8d8" stroke-width="1"/><rect x="727.8" y="1116.6" width="9.4" height="9.4" fill="#8a8a8a"/><rect x="748.1" y="1116.6" width="9" height="9.4" fill="#ffd840"/><rect x="763.4" y="1112.3" width="20.3" height="9.8" fill="none" stroke="#d8e8d8" stroke-width="1"/><rect x="765.3" y="1113.8" width="4.7" height="6.2" fill="#8a8a8a"/><rect x="776.2" y="1113.8" width="5" height="6.2" fill="#ffd840"/><rect x="764.5" y="1124.4" width="20.3" height="10.1" fill="none" stroke="#d8e8d8" stroke-width="1"/><rect x="766.1" y="1126" width="4.7" height="7" fill="#8a8a8a"/><rect x="777" y="1126" width="4.7" height="7" fill="#ffd840"/><rect x="728.2" y="1132.2" width="20.3" height="9.4" fill="none" stroke="#d8e8d8" stroke-width="1"/><rect x="730.2" y="1133.8" width="4.7" height="5.5" fill="#8a8a8a"/><rect x="741.9" y="1133.8" width="4.7" height="5.5" fill="#ffd840"/><rect x="789.5" y="1115.9" width="49.9" height="23.4" fill="none" stroke="#d8e8d8" stroke-width="1"/><rect x="791" y="1117.4" width="14.8" height="20.3" fill="#8a8a8a"/><rect x="821.9" y="1117.4" width="15.6" height="20.3" fill="#ffd840"/><rect x="753.6" y="1140.8" width="32.8" height="7" fill="none" stroke="#d8e8d8" stroke-width="1"/><rect x="755.1" y="1141.6" width="8.6" height="6.2" fill="#8a8a8a"/><rect x="775.4" y="1141.6" width="8.6" height="6.2" fill="#ffd840"/><rect x="670.1" y="1145.5" width="23.4" height="2.3" fill="none" stroke="#d8e8d8" stroke-width="1"/><rect x="671.7" y="1146" width="20.3" height="1.9" fill="#ffd840"/><rect x="789.5" y="1145.5" width="49.9" height="2.3" fill="none" stroke="#d8e8d8" stroke-width="1"/><rect x="821.4" y="1146.3" width="15.6" height="1.6" fill="#ffd840"/><rect x="846.1" y="998.1" width="90" height="149.8" fill="none" stroke="#d8e8d8" stroke-width="1"/><circle cx="850.8" cy="1002" r="2.6" fill="#f8e040"/><circle cx="870.3" cy="1002" r="2.6" fill="#108090"/><circle cx="889.8" cy="1002" r="2.6" fill="#f8e040"/><circle cx="909.3" cy="1002" r="2.6" fill="#8a8a8a"/><circle cx="928.8" cy="1002" r="2.6" fill="#8a8a8a"/><circle cx="860.5" cy="1012" r="2.6" fill="#8a8a8a"/><circle cx="880" cy="1012" r="2.6" fill="#f8e040"/><circle cx="899.5" cy="1012" r="2.6" fill="#108090"/><circle cx="919" cy="1012" r="2.6" fill="#f8e040"/><circle cx="850.8" cy="1022" r="2.6" fill="#f8e040"/><circle cx="870.3" cy="1022" r="2.6" fill="#f8e040"/><circle cx="889.8" cy="1022" r="2.6" fill="#8a8a8a"/><circle cx="909.3" cy="1022" r="2.6" fill="#f8e040"/><circle cx="928.8" cy="1022" r="2.6" fill="#f8e040"/><circle cx="860.5" cy="1031.9" r="2.6" fill="#f8e040"/><circle cx="880" cy="1031.9" r="2.6" fill="#8a8a8a"/><circle cx="899.5" cy="1031.9" r="2.6" fill="#f8e040"/><circle cx="919" cy="1031.9" r="2.6" fill="#8a8a8a"/><circle cx="850.8" cy="1041.9" r="2.6" fill="#f8e040"/><circle cx="870.3" cy="1041.9" r="2.6" fill="#f8e040"/><circle cx="889.8" cy="1041.9" r="2.6" fill="#f8e040"/><circle cx="909.3" cy="1041.9" r="2.6" fill="#8a8a8a"/><circle cx="928.8" cy="1041.9" r="2.6" fill="#f8e040"/><circle cx="860.5" cy="1051.9" r="2.6" fill="#f8e040"/><circle cx="880" cy="1051.9" r="2.6" fill="#8a8a8a"/><circle cx="899.5" cy="1051.9" r="2.6" fill="#f8e040"/><circle cx="919" cy="1051.9" r="2.6" fill="#f8e040"/><circle cx="850.8" cy="1061.9" r="2.6" fill="#f8e040"/><circle cx="870.3" cy="1061.9" r="2.6" fill="#8a8a8a"/><circle cx="889.8" cy="1061.9" r="2.6" fill="#f8e040"/><circle cx="909.3" cy="1061.9" r="2.6" fill="#108090"/><circle cx="928.8" cy="1061.9" r="2.6" fill="#108090"/><circle cx="860.5" cy="1071.9" r="2.6" fill="#f8e040"/><circle cx="880" cy="1071.9" r="2.6" fill="#108090"/><circle cx="899.5" cy="1071.9" r="2.6" fill="#8a8a8a"/><circle cx="919" cy="1071.9" r="2.6" fill="#f8e040"/><circle cx="850.8" cy="1081.9" r="2.6" fill="#f8e040"/><circle cx="870.3" cy="1081.9" r="2.6" fill="#f8e040"/><circle cx="889.8" cy="1081.9" r="2.6" fill="#f8e040"/><circle cx="909.3" cy="1081.9" r="2.6" fill="#108090"/><circle cx="928.8" cy="1081.9" r="2.6" fill="#f8e040"/><circle cx="860.5" cy="1091.8" r="2.6" fill="#f8e040"/><circle cx="880" cy="1091.8" r="2.6" fill="#f8e040"/><circle cx="899.5" cy="1091.8" r="2.6" fill="#f8e040"/><circle cx="919" cy="1091.8" r="2.6" fill="#f8e040"/><circle cx="850.8" cy="1101.8" r="2.6" fill="#f8e040"/><circle cx="870.3" cy="1101.8" r="2.6" fill="#f8e040"/><circle cx="889.8" cy="1101.8" r="2.6" fill="#f8e040"/><circle cx="909.3" cy="1101.8" r="2.6" fill="#f8e040"/><circle cx="928.8" cy="1101.8" r="2.6" fill="#f8e040"/><circle cx="860.5" cy="1111.8" r="2.6" fill="#f8e040"/><circle cx="880" cy="1111.8" r="2.6" fill="#f8e040"/><circle cx="899.5" cy="1111.8" r="2.6" fill="#108090"/><circle cx="919" cy="1111.8" r="2.6" fill="#f8e040"/><circle cx="850.8" cy="1121.8" r="2.6" fill="#f8e040"/><circle cx="870.3" cy="1121.8" r="2.6" fill="#f8e040"/><circle cx="889.8" cy="1121.8" r="2.6" fill="#8a8a8a"/><circle cx="909.3" cy="1121.8" r="2.6" fill="#f8e040"/><circle cx="928.8" cy="1121.8" r="2.6" fill="#8a8a8a"/><circle cx="860.5" cy="1131.8" r="2.6" fill="#f8e040"/><circle cx="880" cy="1131.8" r="2.6" fill="#f8e040"/><circle cx="899.5" cy="1131.8" r="2.6" fill="#f8e040"/><circle cx="919" cy="1131.8" r="2.6" fill="#f8e040"/><circle cx="850.8" cy="1141.8" r="2.6" fill="#8a8a8a"/><circle cx="870.3" cy="1141.8" r="2.6" fill="#f8e040"/><circle cx="889.8" cy="1141.8" r="2.6" fill="#f8e040"/><circle cx="909.3" cy="1141.8" r="2.6" fill="#108090"/><circle cx="928.8" cy="1141.8" r="2.6" fill="#f8e040"/><circle cx="636" cy="520" r="2.4" fill="#108090"/><circle cx="648" cy="520" r="2.4" fill="#f8e040"/><circle cx="636" cy="532.5" r="2.4" fill="#f8e040"/><circle cx="648" cy="532.5" r="2.4" fill="#f8e040"/><circle cx="636" cy="545" r="2.4" fill="#108090"/><circle cx="648" cy="545" r="2.4" fill="#8a8a8a"/><circle cx="636" cy="557.5" r="2.4" fill="#8a8a8a"/><circle cx="648" cy="557.5" r="2.4" fill="#108090"/><circle cx="636" cy="570" r="2.4" fill="#108090"/><circle cx="648" cy="570" r="2.4" fill="#f8e040"/><circle cx="636" cy="582.5" r="2.4" fill="#8a8a8a"/><circle cx="648" cy="582.5" r="2.4" fill="#f8e040"/><circle cx="636" cy="595" r="2.4" fill="#f8e040"/><circle cx="648" cy="595" r="2.4" fill="#108090"/><circle cx="636" cy="607.5" r="2.4" fill="#8a8a8a"/><circle cx="648" cy="607.5" r="2.4" fill="#108090"/><circle cx="636" cy="620" r="2.4" fill="#f8e040"/><circle cx="648" cy="620" r="2.4" fill="#f8e040"/><rect x="633" y="652" width="11" height="34" fill="none" stroke="#d8e8d8" stroke-width="1"/><rect x="635" y="654" width="7" height="5" fill="#8a8a8a"/><rect x="635" y="679" width="7" height="5" fill="#8a8a8a"/><rect x="633" y="690" width="11" height="26" fill="none" stroke="#d8e8d8" stroke-width="1"/><rect x="635" y="692" width="7" height="5" fill="#8a8a8a"/><rect x="635" y="709" width="7" height="5" fill="#ffd840"/><rect x="633" y="730" width="11" height="14" fill="none" stroke="#d8e8d8" stroke-width="1"/><rect x="635" y="732" width="7" height="2.7" fill="#8a8a8a"/><rect x="635" y="739.3" width="7" height="2.7" fill="#8a8a8a"/><rect x="633" y="754" width="11" height="34" fill="none" stroke="#d8e8d8" stroke-width="1"/><rect x="635" y="756" width="7" height="5" fill="#8a8a8a"/><rect x="635" y="781" width="7" height="5" fill="#ffd840"/><rect x="633" y="794" width="11" height="20" fill="none" stroke="#d8e8d8" stroke-width="1"/><rect x="635" y="796" width="7" height="4.7" fill="#8a8a8a"/><rect x="635" y="807.3" width="7" height="4.7" fill="#ffd840"/><rect x="633" y="824" width="11" height="20" fill="none" stroke="#d8e8d8" stroke-width="1"/><rect x="635" y="826" width="7" height="4.7" fill="#8a8a8a"/><rect x="635" y="837.3" width="7" height="4.7" fill="#ffd840"/><rect x="633" y="848" width="11" height="26" fill="none" stroke="#d8e8d8" stroke-width="1"/><rect x="635" y="850" width="7" height="5" fill="#ffd840"/><rect x="635" y="867" width="7" height="5" fill="#ffd840"/><rect x="633" y="880" width="11" height="20" fill="none" stroke="#d8e8d8" stroke-width="1"/><rect x="635" y="882" width="7" height="4.7" fill="#8a8a8a"/><rect x="635" y="893.3" width="7" height="4.7" fill="#ffd840"/><rect x="633" y="914" width="11" height="34" fill="none" stroke="#d8e8d8" stroke-width="1"/><rect x="635" y="916" width="7" height="5" fill="#8a8a8a"/><rect x="635" y="941" width="7" height="5" fill="#ffd840"/><rect x="633" y="962" width="11" height="34" fill="none" stroke="#d8e8d8" stroke-width="1"/><rect x="635" y="964" width="7" height="5" fill="#8a8a8a"/><rect x="635" y="989" width="7" height="5" fill="#ffd840"/><rect x="646" y="660" width="11" height="26" fill="none" stroke="#d8e8d8" stroke-width="1"/><rect x="648" y="662" width="7" height="5" fill="#ffd840"/><rect x="648" y="679" width="7" height="5" fill="#ffd840"/><rect x="646" y="690" width="11" height="14" fill="none" stroke="#d8e8d8" stroke-width="1"/><rect x="648" y="692" width="7" height="2.7" fill="#8a8a8a"/><rect x="648" y="699.3" width="7" height="2.7" fill="#ffd840"/><rect x="646" y="714" width="11" height="14" fill="none" stroke="#d8e8d8" stroke-width="1"/><rect x="648" y="716" width="7" height="2.7" fill="#8a8a8a"/><rect x="648" y="723.3" width="7" height="2.7" fill="#ffd840"/><rect x="646" y="732" width="11" height="20" fill="none" stroke="#d8e8d8" stroke-width="1"/><rect x="648" y="734" width="7" height="4.7" fill="#8a8a8a"/><rect x="648" y="745.3" width="7" height="4.7" fill="#ffd840"/><rect x="646" y="762" width="11" height="34" fill="none" stroke="#d8e8d8" stroke-width="1"/><rect x="648" y="764" width="7" height="5" fill="#8a8a8a"/><rect x="648" y="789" width="7" height="5" fill="#ffd840"/><rect x="646" y="806" width="11" height="34" fill="none" stroke="#d8e8d8" stroke-width="1"/><rect x="648" y="808" width="7" height="5" fill="#8a8a8a"/><rect x="648" y="833" width="7" height="5" fill="#ffd840"/><rect x="646" y="850" width="11" height="20" fill="none" stroke="#d8e8d8" stroke-width="1"/><rect x="648" y="852" width="7" height="4.7" fill="#ffd840"/><rect x="648" y="863.3" width="7" height="4.7" fill="#ffd840"/><rect x="646" y="880" width="11" height="34" fill="none" stroke="#d8e8d8" stroke-width="1"/><rect x="648" y="882" width="7" height="5" fill="#8a8a8a"/><rect x="648" y="907" width="7" height="5" fill="#ffd840"/><rect x="646" y="920" width="11" height="20" fill="none" stroke="#d8e8d8" stroke-width="1"/><rect x="648" y="922" width="7" height="4.7" fill="#8a8a8a"/><rect x="648" y="933.3" width="7" height="4.7" fill="#8a8a8a"/><rect x="646" y="950" width="11" height="34" fill="none" stroke="#d8e8d8" stroke-width="1"/><rect x="648" y="952" width="7" height="5" fill="#8a8a8a"/><rect x="648" y="977" width="7" height="5" fill="#ffd840"/><polyline points="631,880 645,872 657,872" fill="none" stroke="#ff0000" stroke-width="1.2"/><polyline points="631,940 650,930 657,930" fill="none" stroke="#ff0000" stroke-width="1.2"/><polyline points="631,990 657,975" fill="none" stroke="#ff0000" stroke-width="1.2"/><rect x="645" y="856" width="4" height="55" fill="#d6d6d6"/><rect x="633" y="489" width="17" height="23" fill="none" stroke="#d8e8d8" stroke-width="1"/><rect x="636" y="492" width="12" height="16" fill="#8a8a8a"/><path d="M1181 512 H1515 Q1548 512 1560 545" fill="none" stroke="#d6d6d6" stroke-width="8"/><polyline points="1181,505 1282,505" fill="none" stroke="#ff0000" stroke-width="3"/><polyline points="1337,501 1345,495" fill="none" stroke="#ff0000" stroke-width="3"/><polyline points="1510,556 1520,545 1560,545" fill="none" stroke="#ff0000" stroke-width="3.5"/><polyline points="1323,516 1323,577" fill="none" stroke="#ff0000" stroke-width="2.5"/><polyline points="1181,532 1196,532" fill="none" stroke="#ff0000" stroke-width="3"/><rect x="1186" y="537" width="10" height="18" fill="none" stroke="#d8e8d8" stroke-width="1"/><rect x="1188" y="540" width="6" height="5" fill="#8a8a8a"/><rect x="1188" y="548" width="6" height="5" fill="#ffd840"/><rect x="1199" y="537" width="10" height="18" fill="none" stroke="#d8e8d8" stroke-width="1"/><rect x="1201" y="540" width="6" height="5" fill="#8a8a8a"/><rect x="1201" y="548" width="6" height="5" fill="#ffd840"/><rect x="1212" y="537" width="10" height="18" fill="none" stroke="#d8e8d8" stroke-width="1"/><rect x="1214" y="540" width="6" height="5" fill="#8a8a8a"/><rect x="1214" y="548" width="6" height="5" fill="#ffd840"/><rect x="1225" y="537" width="10" height="18" fill="none" stroke="#d8e8d8" stroke-width="1"/><rect x="1227" y="540" width="6" height="5" fill="#8a8a8a"/><rect x="1227" y="548" width="6" height="5" fill="#ffd840"/><rect x="1238" y="537" width="10" height="18" fill="none" stroke="#d8e8d8" stroke-width="1"/><rect x="1240" y="540" width="6" height="5" fill="#8a8a8a"/><rect x="1240" y="548" width="6" height="5" fill="#ffd840"/><rect x="1251" y="537" width="10" height="18" fill="none" stroke="#d8e8d8" stroke-width="1"/><rect x="1253" y="540" width="6" height="5" fill="#8a8a8a"/><rect x="1253" y="548" width="6" height="5" fill="#ffd840"/><rect x="1264" y="537" width="10" height="18" fill="none" stroke="#d8e8d8" stroke-width="1"/><rect x="1266" y="540" width="6" height="5" fill="#8a8a8a"/><rect x="1266" y="548" width="6" height="5" fill="#ffd840"/><rect x="1276" y="537" width="10" height="18" fill="none" stroke="#d8e8d8" stroke-width="1"/><rect x="1278" y="540" width="6" height="5" fill="#8a8a8a"/><rect x="1278" y="548" width="6" height="5" fill="#ffd840"/><rect x="1303" y="536" width="9" height="18" fill="none" stroke="#d8e8d8" stroke-width="1"/><rect x="1304.5" y="539" width="6" height="6" fill="#ffd840"/><rect x="1304.5" y="548" width="6" height="5" fill="#ffd840"/><rect x="1315" y="536" width="9" height="18" fill="none" stroke="#d8e8d8" stroke-width="1"/><rect x="1316.5" y="539" width="6" height="6" fill="#ffd840"/><rect x="1316.5" y="548" width="6" height="5" fill="#ffd840"/><rect x="1327" y="536" width="9" height="18" fill="none" stroke="#d8e8d8" stroke-width="1"/><rect x="1328.5" y="539" width="6" height="6" fill="#ffd840"/><rect x="1328.5" y="548" width="6" height="5" fill="#ffd840"/><rect x="1341" y="538" width="19" height="9" fill="none" stroke="#d8e8d8" stroke-width="1"/><rect x="1342" y="540" width="5" height="5" fill="#ffd840"/><rect x="1355" y="540" width="4" height="5" fill="#8a8a8a"/><rect x="1341" y="552" width="12" height="25" fill="none" stroke="#d8e8d8" stroke-width="1"/><rect x="1343" y="555" width="8" height="7" fill="#ffd840"/><rect x="1343" y="568" width="8" height="9" fill="#8a8a8a"/><rect x="1366" y="526" width="19" height="9" fill="none" stroke="#d8e8d8" stroke-width="1"/><rect x="1368" y="528" width="4" height="5" fill="#ffd840"/><rect x="1379" y="528" width="4" height="5" fill="#ffd840"/><rect x="1389" y="526" width="19" height="9" fill="none" stroke="#d8e8d8" stroke-width="1"/><rect x="1391" y="528" width="4" height="5" fill="#ffd840"/><rect x="1402" y="528" width="4" height="5" fill="#ffd840"/><rect x="1418" y="526" width="19" height="9" fill="none" stroke="#d8e8d8" stroke-width="1"/><rect x="1420" y="528" width="4" height="5" fill="#ffd840"/><rect x="1431" y="528" width="4" height="5" fill="#ffd840"/><rect x="1449" y="526" width="19" height="9" fill="none" stroke="#d8e8d8" stroke-width="1"/><rect x="1451" y="528" width="4" height="5" fill="#ffd840"/><rect x="1462" y="528" width="4" height="5" fill="#ffd840"/><rect x="1425" y="540" width="9" height="21" fill="none" stroke="#d8e8d8" stroke-width="1"/><rect x="1426.5" y="542" width="6" height="6" fill="#8a8a8a"/><rect x="1426.5" y="554" width="6" height="5" fill="#ffd840"/><rect x="1438" y="540" width="9" height="21" fill="none" stroke="#d8e8d8" stroke-width="1"/><rect x="1439.5" y="542" width="6" height="6" fill="#8a8a8a"/><rect x="1439.5" y="554" width="6" height="5" fill="#ffd840"/><rect x="1451" y="540" width="9" height="21" fill="none" stroke="#d8e8d8" stroke-width="1"/><rect x="1452.5" y="542" width="6" height="6" fill="#8a8a8a"/><rect x="1452.5" y="554" width="6" height="5" fill="#ffd840"/><rect x="1463" y="540" width="9" height="21" fill="none" stroke="#d8e8d8" stroke-width="1"/><rect x="1464.5" y="542" width="6" height="6" fill="#8a8a8a"/><rect x="1464.5" y="554" width="6" height="5" fill="#ffd840"/><rect x="1476" y="540" width="9" height="21" fill="none" stroke="#d8e8d8" stroke-width="1"/><rect x="1477.5" y="542" width="6" height="6" fill="#8a8a8a"/><rect x="1477.5" y="554" width="6" height="5" fill="#ffd840"/><rect x="1489" y="540" width="9" height="21" fill="none" stroke="#d8e8d8" stroke-width="1"/><rect x="1490.5" y="542" width="6" height="6" fill="#8a8a8a"/><rect x="1490.5" y="554" width="6" height="5" fill="#ffd840"/><polyline points="1390,508 1400,499 1482,499 1498,508 1558,508" fill="none" stroke="#00a81e" stroke-width="3"/><polyline points="1440,530 1470,520 1520,520 1558,540" fill="none" stroke="#00a81e" stroke-width="3"/><polyline points="1260,560 1290,540 1340,540" fill="none" stroke="#00a81e" stroke-width="3"/><polyline points="1181,545 1200,560 1230,577" fill="none" stroke="#00a81e" stroke-width="3"/><polyline points="1480,560 1500,577" fill="none" stroke="#00a81e" stroke-width="3"/><polyline points="1368,486 1368,506 1378,516 1378,528" fill="none" stroke="#ff0000" stroke-width="1.5"/><polyline points="1403,488 1403,519 1426,530" fill="none" stroke="#ff0000" stroke-width="1.5"/><polyline points="1426,488 1426,530" fill="none" stroke="#ff0000" stroke-width="1.5"/><polyline points="1380,487 1392,487" fill="none" stroke="#ff0000" stroke-width="1.5"/><polyline points="1416,558 1432,574" fill="none" stroke="#ff0000" stroke-width="1.5"/><polyline points="1408,531 1420,536 1450,530" fill="none" stroke="#ff0000" stroke-width="1.5"/><polyline points="1336,536 1336,577" fill="none" stroke="#ff0000" stroke-width="1.5"/><polyline points="1290,545 1310,560 1310,577" fill="none" stroke="#004a1a" stroke-width="2"/><polyline points="1200,546 1240,577" fill="none" stroke="#004a1a" stroke-width="2"/><polyline points="1460,545 1500,577" fill="none" stroke="#004a1a" stroke-width="2"/><polyline points="1520,545 1540,560" fill="none" stroke="#004a1a" stroke-width="2"/><rect x="1372" y="573" width="186" height="10" fill="none" stroke="#d8e8d8" stroke-width="1"/><rect x="652" y="486" width="8" height="9" fill="none" stroke="#d8e8d8" stroke-width="1"/><rect x="654" y="487.5" width="1" height="6.5" fill="#ffd840"/><rect x="657" y="487.5" width="1" height="6.5" fill="#8a8a8a"/><rect x="670" y="486" width="9.0" height="8" fill="#8a8a8a"/><rect x="704" y="486" width="10" height="9" fill="none" stroke="#d8e8d8" stroke-width="1"/><rect x="706" y="487.5" width="2" height="6.5" fill="#ffd840"/><rect x="710" y="487.5" width="2" height="6.5" fill="#8a8a8a"/><rect x="724" y="486" width="22" height="9" fill="none" stroke="#d8e8d8" stroke-width="1"/><rect x="726" y="487.5" width="8" height="6.5" fill="#ffd840"/><rect x="736" y="487.5" width="8" height="6.5" fill="#8a8a8a"/><rect x="756" y="486" width="22" height="9" fill="none" stroke="#d8e8d8" stroke-width="1"/><rect x="758" y="487.5" width="8" height="6.5" fill="#ffd840"/><rect x="768" y="487.5" width="8" height="6.5" fill="#ffd840"/><rect x="788" y="486" width="8" height="9" fill="none" stroke="#d8e8d8" stroke-width="1"/><rect x="790" y="487.5" width="1" height="6.5" fill="#ffd840"/><rect x="793" y="487.5" width="1" height="6.5" fill="#8a8a8a"/><rect x="802" y="486" width="8" height="9" fill="none" stroke="#d8e8d8" stroke-width="1"/><rect x="804" y="487.5" width="1" height="6.5" fill="#ffd840"/><rect x="807" y="487.5" width="1" height="6.5" fill="#8a8a8a"/><rect x="834" y="486" width="9.0" height="8" fill="#ffd840"/><rect x="876" y="486" width="18" height="9" fill="none" stroke="#d8e8d8" stroke-width="1"/><rect x="878" y="487.5" width="6" height="6.5" fill="#8a8a8a"/><rect x="886" y="487.5" width="6" height="6.5" fill="#8a8a8a"/><rect x="918" y="486" width="18" height="9" fill="none" stroke="#d8e8d8" stroke-width="1"/><rect x="920" y="487.5" width="6" height="6.5" fill="#ffd840"/><rect x="928" y="487.5" width="6" height="6.5" fill="#8a8a8a"/><rect x="942" y="486" width="7.0" height="8" fill="#ffd840"/><rect x="966" y="486" width="8" height="9" fill="none" stroke="#d8e8d8" stroke-width="1"/><rect x="968" y="487.5" width="1" height="6.5" fill="#ffd840"/><rect x="971" y="487.5" width="1" height="6.5" fill="#8a8a8a"/><rect x="984" y="486" width="18" height="9" fill="none" stroke="#d8e8d8" stroke-width="1"/><rect x="986" y="487.5" width="6" height="6.5" fill="#ffd840"/><rect x="994" y="487.5" width="6" height="6.5" fill="#ffd840"/><rect x="1026" y="486" width="5.0" height="8" fill="#8a8a8a"/><rect x="1060" y="486" width="22" height="9" fill="none" stroke="#d8e8d8" stroke-width="1"/><rect x="1062" y="487.5" width="8" height="6.5" fill="#8a8a8a"/><rect x="1072" y="487.5" width="8" height="6.5" fill="#8a8a8a"/><rect x="1106" y="486" width="18" height="9" fill="none" stroke="#d8e8d8" stroke-width="1"/><rect x="1108" y="487.5" width="6" height="6.5" fill="#ffd840"/><rect x="1116" y="487.5" width="6" height="6.5" fill="#8a8a8a"/><rect x="1134" y="486" width="10" height="9" fill="none" stroke="#d8e8d8" stroke-width="1"/><rect x="1136" y="487.5" width="2" height="6.5" fill="#8a8a8a"/><rect x="1140" y="487.5" width="2" height="6.5" fill="#ffd840"/><rect x="1168" y="486" width="18" height="9" fill="none" stroke="#d8e8d8" stroke-width="1"/><rect x="1170" y="487.5" width="6" height="6.5" fill="#ffd840"/><rect x="1178" y="487.5" width="6" height="6.5" fill="#8a8a8a"/><polyline points="742,485 760,495 800,495" fill="none" stroke="#ff0000" stroke-width="1.5"/><polyline points="905,485 915,495" fill="none" stroke="#ff0000" stroke-width="1.5"/><circle cx="1183" cy="569" r="2.4" fill="#f8e040"/><circle cx="1203" cy="569" r="2.4" fill="#f8e040"/><circle cx="1223" cy="569" r="2.4" fill="#f8e040"/><circle cx="1243" cy="569" r="2.4" fill="#f8e040"/><circle cx="1263" cy="569" r="2.4" fill="#f8e040"/><circle cx="1283" cy="569" r="2.4" fill="#f8e040"/><circle cx="1303" cy="569" r="2.4" fill="#f8e040"/><circle cx="1323" cy="569" r="2.4" fill="#f8e040"/><circle cx="1343" cy="569" r="2.4" fill="#8a8a8a"/><circle cx="1363" cy="569" r="2.4" fill="#8a8a8a"/><circle cx="1383" cy="569" r="2.4" fill="#8a8a8a"/><circle cx="1403" cy="569" r="2.4" fill="#8a8a8a"/></g><rect x="632" y="486" width="925" height="662" rx="15" fill="none" stroke="#fff" stroke-width="2"/></svg>
<div class="a" style="left:631px;top:485px;width:927px;height:664px;overflow:hidden;border-radius:16px"><div class="a" style="left:26px;top:10.600000000000023px;width:560px;height:516px;transform:scale(0.935);transform-origin:0 0"><div class="a" style="left:0;top:0;width:560px;height:516px;background:#fff;border-radius:13px"></div><svg class="a" style="left:490px;top:-17px" width="28" height="19" viewBox="0 0 28 19"><path d="M0 18 L13 0 L27 18 Z" fill="#fff"/></svg><div class="a" style="left:14px;top:8.5px;font-size:15px;line-height:18px;color:#2a8cf6;white-space:nowrap">Please choose your preferred color scheme for boardview</div><div class="a" style="left:13.5px;top:30.5px;font-size:15px;line-height:18px;color:#ff0000;font-weight:700;letter-spacing:-0.17px;white-space:nowrap">(***You must select a color scheme and click the OK button to close the</div><div class="a" style="left:13.5px;top:49.5px;font-size:15px;line-height:18px;color:#ff0000;font-weight:700;letter-spacing:-0.17px;white-space:nowrap">window***)</div><div class="a" style="left:14px;top:78px;width:539px;height:389px;border:1px solid #c6dcc6;border-radius:4px"></div><div class="a" style="left:23.5px;top:87.80000000000001px;width:159px;height:119px;background:#fff;border:1px solid #dcdcdc"></div><div class="a" style="left:28.0px;top:95.80000000000001px;width:12px;height:12px;border-radius:50%;background:#f4f7fc;border:1px solid #b8b8b8"></div><div class="a" style="left:42.0px;top:93.30000000000001px;font-size:15px;line-height:18px;color:#111;white-space:nowrap">DefaultColor</div><svg class="a" style="left:26.5px;top:111.30000000000001px" width="152" height="92" viewBox="0 0 152 92"><rect width="152" height="92" fill="#000"/><path d="M10 9.7 H143.6 Q148.6 9.7 148.6 14.7 V77.8 Q148.6 82.8 143.6 82.8 H58.4 Q53.4 82.8 53.4 77.8 V67.4 Q53.4 62.4 48.4 62.4 H10 Q5 62.4 5 57.4 V14.7 Q5 9.7 10 9.7 Z" fill="none" stroke="#ff00ff" stroke-width="2"/><rect x="10.5" y="15.3" width="38.3" height="24.2" fill="#6b6a00"/><rect x="15" y="19.5" width="29" height="16" fill="#6b6a00" stroke="#a8b860" stroke-width="2"/><rect x="17.5" y="22" width="7.5" height="11" fill="#c07010"/><rect x="33.5" y="22" width="8.5" height="11" fill="#ffff00"/><rect x="85" y="20" width="41" height="41" fill="none" stroke="#7f9878" stroke-width="1.6"/><circle cx="91" cy="25.5" r="3" fill="#800000"/><circle cx="101" cy="25.5" r="3" fill="#800000"/><circle cx="111" cy="25.5" r="3" fill="#800000"/><circle cx="121" cy="25.5" r="3" fill="#800000"/><circle cx="91" cy="35.5" r="3" fill="#800000"/><circle cx="101" cy="35.5" r="3" fill="#800000"/><circle cx="111" cy="35.5" r="3" fill="#800000"/><circle cx="121" cy="35.5" r="3" fill="#800000"/><circle cx="91" cy="45.5" r="3" fill="#800000"/><circle cx="101" cy="45.5" r="3" fill="#800000"/><circle cx="111" cy="45.5" r="3" fill="#ffff00"/><circle cx="121" cy="45.5" r="3" fill="#800000"/><circle cx="91" cy="55.5" r="3" fill="#800000"/><circle cx="101" cy="55.5" r="3" fill="#800000"/><circle cx="111" cy="55.5" r="3" fill="#800000"/><circle cx="121" cy="55.5" r="3" fill="#800000"/></svg><div class="a" style="left:189px;top:87.80000000000001px;width:159px;height:119px;background:#fff;border:1px solid #dcdcdc"></div><div class="a" style="left:193.5px;top:95.80000000000001px;width:12px;height:12px;border-radius:50%;background:#f4f7fc;border:1px solid #b8b8b8"></div><div class="a" style="left:207.5px;top:93.30000000000001px;font-size:15px;line-height:18px;color:#111;white-space:nowrap">BlackBoard1</div><svg class="a" style="left:192px;top:111.30000000000001px" width="152" height="92" viewBox="0 0 152 92"><rect width="152" height="92" fill="#e4e4e4"/><path d="M10 9.7 H143.6 Q148.6 9.7 148.6 14.7 V77.8 Q148.6 82.8 143.6 82.8 H58.4 Q53.4 82.8 53.4 77.8 V67.4 Q53.4 62.4 48.4 62.4 H10 Q5 62.4 5 57.4 V14.7 Q5 9.7 10 9.7 Z" fill="#202020"/><rect x="10.5" y="15.3" width="38.3" height="24.2" fill="#7a3c78"/><rect x="15" y="19.5" width="29" height="16" fill="#7a3c78" stroke="#f0b0e8" stroke-width="2"/><rect x="17.5" y="22" width="7.5" height="11" fill="#d09060"/><rect x="33.5" y="22" width="8.5" height="11" fill="#ff3080"/><rect x="85" y="20" width="41" height="41" fill="none" stroke="#c8c8c8" stroke-width="1.6"/><circle cx="91" cy="25.5" r="3" fill="#c89600"/><circle cx="101" cy="25.5" r="3" fill="#c89600"/><circle cx="111" cy="25.5" r="3" fill="#c89600"/><circle cx="121" cy="25.5" r="3" fill="#c89600"/><circle cx="91" cy="35.5" r="3" fill="#c89600"/><circle cx="101" cy="35.5" r="3" fill="#c89600"/><circle cx="111" cy="35.5" r="3" fill="#c89600"/><circle cx="121" cy="35.5" r="3" fill="#c89600"/><circle cx="91" cy="45.5" r="3" fill="#c89600"/><circle cx="101" cy="45.5" r="3" fill="#c89600"/><circle cx="111" cy="45.5" r="3" fill="#ff0000"/><circle cx="121" cy="45.5" r="3" fill="#c89600"/><circle cx="91" cy="55.5" r="3" fill="#c89600"/><circle cx="101" cy="55.5" r="3" fill="#c89600"/><circle cx="111" cy="55.5" r="3" fill="#c89600"/><circle cx="121" cy="55.5" r="3" fill="#c89600"/></svg><div class="a" style="left:23.5px;top:212.4px;width:159px;height:119px;background:#fff;border:1px solid #dcdcdc"></div><div class="a" style="left:28.0px;top:220.4px;width:12px;height:12px;border-radius:50%;background:#f4f7fc;border:1px solid #b8b8b8"></div><div class="a" style="left:42.0px;top:217.9px;font-size:15px;line-height:18px;color:#111;white-space:nowrap">BlackBoard3</div><svg class="a" style="left:26.5px;top:235.9px" width="152" height="92" viewBox="0 0 152 92"><rect width="152" height="92" fill="#0a0a0a"/><path d="M10 9.7 H143.6 Q148.6 9.7 148.6 14.7 V77.8 Q148.6 82.8 143.6 82.8 H58.4 Q53.4 82.8 53.4 77.8 V67.4 Q53.4 62.4 48.4 62.4 H10 Q5 62.4 5 57.4 V14.7 Q5 9.7 10 9.7 Z" fill="#282828"/><rect x="10.5" y="15.3" width="38.3" height="24.2" fill="#163c64"/><rect x="15" y="19.5" width="29" height="16" fill="#163c64" stroke="#2080ff" stroke-width="2"/><rect x="17.5" y="22" width="7.5" height="11" fill="#a8a080"/><rect x="33.5" y="22" width="8.5" height="11" fill="#c04060"/><rect x="85" y="20" width="41" height="41" fill="none" stroke="#2080ff" stroke-width="1.6"/><circle cx="91" cy="25.5" r="3" fill="#ffb070"/><circle cx="101" cy="25.5" r="3" fill="#ffb070"/><circle cx="111" cy="25.5" r="3" fill="#ffb070"/><circle cx="121" cy="25.5" r="3" fill="#ffb070"/><circle cx="91" cy="35.5" r="3" fill="#ffb070"/><circle cx="101" cy="35.5" r="3" fill="#ffb070"/><circle cx="111" cy="35.5" r="3" fill="#ffb070"/><circle cx="121" cy="35.5" r="3" fill="#ffb070"/><circle cx="91" cy="45.5" r="3" fill="#ffb070"/><circle cx="101" cy="45.5" r="3" fill="#ffb070"/><circle cx="111" cy="45.5" r="3" fill="#ff0000"/><circle cx="121" cy="45.5" r="3" fill="#ffb070"/><circle cx="91" cy="55.5" r="3" fill="#ffb070"/><circle cx="101" cy="55.5" r="3" fill="#ffb070"/><circle cx="111" cy="55.5" r="3" fill="#ffb070"/><circle cx="121" cy="55.5" r="3" fill="#ffb070"/></svg><div class="a" style="left:189px;top:212.4px;width:159px;height:119px;background:#fff;border:1px solid #dcdcdc"></div><div class="a" style="left:193.5px;top:220.4px;width:12px;height:12px;border-radius:50%;background:#f4f7fc;border:1px solid #b8b8b8"></div><div class="a" style="left:207.5px;top:217.9px;font-size:15px;line-height:18px;color:#111;white-space:nowrap">GreenBoard</div><svg class="a" style="left:192px;top:235.9px" width="152" height="92" viewBox="0 0 152 92"><rect width="152" height="92" fill="#ffffff"/><path d="M10 9.7 H143.6 Q148.6 9.7 148.6 14.7 V77.8 Q148.6 82.8 143.6 82.8 H58.4 Q53.4 82.8 53.4 77.8 V67.4 Q53.4 62.4 48.4 62.4 H10 Q5 62.4 5 57.4 V14.7 Q5 9.7 10 9.7 Z" fill="#006830"/><rect x="10.5" y="15.3" width="38.3" height="24.2" fill="#6a3018"/><rect x="15" y="19.5" width="29" height="16" fill="#6a3018" stroke="#f0a090" stroke-width="2"/><rect x="17.5" y="22" width="7.5" height="11" fill="#ff8020"/><rect x="33.5" y="22" width="8.5" height="11" fill="#ff0000"/><rect x="85" y="20" width="41" height="41" fill="none" stroke="#f0f0f0" stroke-width="1.6"/><circle cx="91" cy="25.5" r="3" fill="#ffe040"/><circle cx="101" cy="25.5" r="3" fill="#ffe040"/><circle cx="111" cy="25.5" r="3" fill="#ffe040"/><circle cx="121" cy="25.5" r="3" fill="#ffe040"/><circle cx="91" cy="35.5" r="3" fill="#ffe040"/><circle cx="101" cy="35.5" r="3" fill="#ffe040"/><circle cx="111" cy="35.5" r="3" fill="#ffe040"/><circle cx="121" cy="35.5" r="3" fill="#ffe040"/><circle cx="91" cy="45.5" r="3" fill="#ffe040"/><circle cx="101" cy="45.5" r="3" fill="#ffe040"/><circle cx="111" cy="45.5" r="3" fill="#ff0000"/><circle cx="121" cy="45.5" r="3" fill="#ffe040"/><circle cx="91" cy="55.5" r="3" fill="#ffe040"/><circle cx="101" cy="55.5" r="3" fill="#ffe040"/><circle cx="111" cy="55.5" r="3" fill="#ffe040"/><circle cx="121" cy="55.5" r="3" fill="#ffe040"/></svg><div class="a" style="left:13.5px;top:478.6px;width:163.5px;height:30px;background:#5593fb;border-radius:3px"></div><div class="a" style="left:23px;top:487px;font-size:15px;line-height:18px;color:#fff;white-space:nowrap">Custom color scheme</div></div></div>
<svg class="a" style="left:937px;top:577px" width="927" height="663" viewBox="937 577 927 663"><defs><clipPath id="cf"><rect x="937" y="577" width="927" height="663" rx="16"/></clipPath></defs><g clip-path="url(#cf)"><rect x="937" y="577" width="927" height="663" fill="#000"/><polyline points="1580.2,672.7 1594,663 1634.5,663 1636.7,666.7 1637.5,679.5 1640.5,687 1651,692.2 1663,690.7 1681,680.2 1753,680.2 1762,670.5 1786,669.7 1795,663 1796.5,655.5" fill="none" stroke="#ff00ff" stroke-width="1.3"/><path d="M1798 577 V655 Q1798 665 1785 668" fill="none" stroke="#ff00ff" stroke-width="1.3"/><polyline points="1580.2,702 1606,674.2 1624.7,674.2" fill="none" stroke="#00ffff" stroke-width="1.4"/><polyline points="1580.2,698.2 1604.5,678.7 1619.5,678.7 1624.7,683.2" fill="none" stroke="#00ffff" stroke-width="1.4"/><polyline points="1580.2,695.2 1591,695.2 1600,686.2 1607.5,686.2 1616.5,703.5 1750,703.5" fill="none" stroke="#ff00ff" stroke-width="1"/><polyline points="1580.2,699.1 1594.3,699.1 1603.3,690.1 1612,690.1 1621,705.6 1750,705.6" fill="none" stroke="#b000b0" stroke-width="1"/><polyline points="1580.2,703 1597.6,703 1606.6,694 1616.5,694 1625.5,707.7 1750,707.7" fill="none" stroke="#ff00ff" stroke-width="1"/><polyline points="1580.2,706.9 1600.9,706.9 1609.9,697.9 1621,697.9 1630,709.8 1750,709.8" fill="none" stroke="#b000b0" stroke-width="1"/><polyline points="1580.2,710.8 1604.2,710.8 1613.2,701.8 1625.5,701.8 1634.5,711.9 1750,711.9" fill="none" stroke="#ff00ff" stroke-width="1"/><polyline points="1580.2,714.7 1607.5,714.7 1616.5,705.7 1630,705.7 1639,714 1750,714" fill="none" stroke="#b000b0" stroke-width="1"/><polyline points="1580.2,718.6 1610.8,718.6 1619.8,709.6 1634.5,709.6 1643.5,716.1 1750,716.1" fill="none" stroke="#ff00ff" stroke-width="1"/><polyline points="1580.2,722.5 1614.1,722.5 1623.1,713.5 1639,713.5 1648,718.2 1750,718.2" fill="none" stroke="#b000b0" stroke-width="1"/><polyline points="1580.2,726.4 1617.4,726.4 1626.4,717.4 1643.5,717.4 1652.5,720.3 1750,720.3" fill="none" stroke="#ff00ff" stroke-width="1"/><polyline points="1580.2,730.3 1620.7,730.3 1629.7,721.3 1648,721.3 1657,722.4 1750,722.4" fill="none" stroke="#b000b0" stroke-width="1"/><polyline points="1580.2,734.2 1624,734.2 1633,725.2 1652.5,725.2 1661.5,724.5 1750,724.5" fill="none" stroke="#ff00ff" stroke-width="1"/><polyline points="1580.2,738 1615,738 1619.5,744" fill="none" stroke="#b000b0" stroke-width="1"/><polyline points="1580.2,741.6 1615,741.6 1619.5,747.6" fill="none" stroke="#b000b0" stroke-width="1"/><polyline points="1580.2,745.2 1615,745.2 1619.5,751.2" fill="none" stroke="#b000b0" stroke-width="1"/><polyline points="1580.2,748.8 1615,748.8 1619.5,754.8" fill="none" stroke="#b000b0" stroke-width="1"/><polyline points="1580.2,752.4 1615,752.4 1619.5,758.4" fill="none" stroke="#b000b0" stroke-width="1"/><polyline points="1580.2,756 1615,756 1619.5,762" fill="none" stroke="#b000b0" stroke-width="1"/><polyline points="1591,799.9 1591,744 1597,738" fill="none" stroke="#b000b0" stroke-width="1"/><polyline points="1597,799.9 1597,744 1603,738" fill="none" stroke="#b000b0" stroke-width="1"/><polyline points="1603,799.9 1603,744 1609,738" fill="none" stroke="#b000b0" stroke-width="1"/><polyline points="1609,799.9 1609,744 1615,738" fill="none" stroke="#b000b0" stroke-width="1"/><polyline points="1615,799.9 1615,744 1621,738" fill="none" stroke="#b000b0" stroke-width="1"/><polyline points="1657,756 1657,744 1669,730.5 1778.5,730.5 1792,744 1792,756" fill="none" stroke="#ff00ff" stroke-width="3.2"/><polyline points="1718.5,711 1780,711 1795,724.5 1807,724.5 1810,727.5" fill="none" stroke="#ff00ff" stroke-width="3"/><polyline points="1631.5,703.5 1747,703.5" fill="none" stroke="#ff00ff" stroke-width="2.2"/><polyline points="1580.2,725.2 1654,725.2 1666,714 1714,714" fill="none" stroke="#ff00ff" stroke-width="1.2"/><polygon points="1752.2,766.8 1792,766.8 1795,770.2 1850.5,771 1863.2,762 1863.2,768 1852,780.7 1792,780.7 1792,777 1752.2,777" fill="#ff00ff"/><polygon points="1580.2,792 1615,792 1621,795 1621,799.9 1580.2,799.9" fill="#8c8c00"/><polyline points="1580.2,699.3 1609.7,699.3 1618.7,708 1618.7,774" fill="none" stroke="#8c8c00" stroke-width="1.3"/><polyline points="1622.5,799.9 1622.5,745.5 1625.5,742.2 1679.5,742.2" fill="none" stroke="#8c8c00" stroke-width="1.3"/><polyline points="1630,750 1667.5,750 1675,757.5 1675,799.9" fill="none" stroke="#8c8c00" stroke-width="1.3"/><polyline points="1697.5,799.9 1697.5,768 1700.5,753 1700.5,714 1706.5,703.5" fill="none" stroke="#8c8c00" stroke-width="1.2"/><polyline points="1700.2,799.9 1700.2,768 1703.2,753 1703.2,714 1709.2,703.5" fill="none" stroke="#8c8c00" stroke-width="1.2"/><polyline points="1702.9,799.9 1702.9,768 1705.9,753 1705.9,714 1711.9,703.5" fill="none" stroke="#8c8c00" stroke-width="2.2"/><polyline points="1705.6,799.9 1705.6,768 1708.6,753 1708.6,714 1714.6,703.5" fill="none" stroke="#8c8c00" stroke-width="2.2"/><polyline points="1708.3,799.9 1708.3,768 1711.3,753 1711.3,714 1717.3,703.5" fill="none" stroke="#8c8c00" stroke-width="1.2"/><polyline points="1711,799.9 1711,768 1714,753 1714,714 1720,703.5" fill="none" stroke="#8c8c00" stroke-width="1.2"/><polygon points="1705,708 1714,702.7 1726,705 1718.5,709.5" fill="#8c8c00"/><polyline points="1714,703.5 1709.5,692.2" fill="none" stroke="#8c8c00" stroke-width="0.9"/><polyline points="1715.5,703.5 1713.2,692.2" fill="none" stroke="#8c8c00" stroke-width="0.9"/><polyline points="1717,703.5 1717,692.2" fill="none" stroke="#8c8c00" stroke-width="0.9"/><polyline points="1718.5,703.5 1720.7,692.2" fill="none" stroke="#8c8c00" stroke-width="0.9"/><polyline points="1720,703.5 1724.5,692.2" fill="none" stroke="#8c8c00" stroke-width="0.9"/><polyline points="1721.5,703.5 1728.2,692.2" fill="none" stroke="#8c8c00" stroke-width="0.9"/><polyline points="1723,703.5 1732,692.2" fill="none" stroke="#8c8c00" stroke-width="0.9"/><polyline points="1724.5,703.5 1735.7,692.2" fill="none" stroke="#8c8c00" stroke-width="0.9"/><polyline points="1726,720 1751.5,744 1751.5,774 1741,784.5" fill="none" stroke="#8c8c00" stroke-width="1.3"/><polyline points="1795,765 1795,690 1790.5,685.5" fill="none" stroke="#8c8c00" stroke-width="1.3"/><polyline points="1723,744 1723,799.9" fill="none" stroke="#8c8c00" stroke-width="1.2"/><polyline points="1765,744 1765,759 1757.5,768" fill="none" stroke="#8c8c00" stroke-width="1.2"/><polyline points="1769.5,744 1769.5,759 1775.5,765" fill="none" stroke="#8c8c00" stroke-width="1.2"/><polyline points="1795,687 1810,669 1862.5,669" fill="none" stroke="#ff00ff" stroke-width="1"/><polyline points="1796.5,693 1811.5,675 1862.5,675" fill="none" stroke="#b000b0" stroke-width="1"/><polyline points="1798,699 1813,681 1862.5,681" fill="none" stroke="#ff00ff" stroke-width="1"/><polyline points="1799.5,705 1814.5,687 1862.5,687" fill="none" stroke="#b000b0" stroke-width="1"/><polyline points="1801,711 1816,693 1862.5,693" fill="none" stroke="#ff00ff" stroke-width="1"/><polyline points="1802.5,717 1817.5,699 1862.5,699" fill="none" stroke="#b000b0" stroke-width="1"/><polyline points="1862.5,744 1837,744" fill="none" stroke="#ff00ff" stroke-width="1.5"/><polyline points="1862.5,679.5 1832.5,679.5" fill="none" stroke="#ff00ff" stroke-width="1.2"/><polyline points="1580.2,765 1591,775.5" fill="none" stroke="#00ffff" stroke-width="1.2"/><polyline points="1621,780 1630,775.5 1645,775.5 1655.5,786 1655.5,799.9" fill="none" stroke="#00ffff" stroke-width="1.3"/><polyline points="1702,799.9 1726,792 1741,789 1750,780 1754.5,774" fill="none" stroke="#00ffff" stroke-width="1.3"/><polyline points="1772.5,771 1795,771" fill="none" stroke="#00ffff" stroke-width="1.5"/><path d="M1683.7 679.5h3.6M1685.5 677.7v3.6" stroke="#8c8c8c" stroke-width="1"/><path d="M1699.7 679.5h3.6M1701.5 677.7v3.6" stroke="#8c8c8c" stroke-width="1"/><path d="M1707.7 679.5h3.6M1709.5 677.7v3.6" stroke="#8c8c8c" stroke-width="1"/><path d="M1723.7 679.5h3.6M1725.5 677.7v3.6" stroke="#8c8c8c" stroke-width="1"/><path d="M1731.7 679.5h3.6M1733.5 677.7v3.6" stroke="#8c8c8c" stroke-width="1"/><path d="M1739.7 679.5h3.6M1741.5 677.7v3.6" stroke="#8c8c8c" stroke-width="1"/><path d="M1747.7 679.5h3.6M1749.5 677.7v3.6" stroke="#8c8c8c" stroke-width="1"/><path d="M1755.7 679.5h3.6M1757.5 677.7v3.6" stroke="#8c8c8c" stroke-width="1"/><path d="M1763.7 679.5h3.6M1765.5 677.7v3.6" stroke="#8c8c8c" stroke-width="1"/><path d="M1771.7 679.5h3.6M1773.5 677.7v3.6" stroke="#8c8c8c" stroke-width="1"/><path d="M1779.7 679.5h3.6M1781.5 677.7v3.6" stroke="#8c8c8c" stroke-width="1"/><path d="M1787.7 679.5h3.6M1789.5 677.7v3.6" stroke="#8c8c8c" stroke-width="1"/><path d="M1795.7 679.5h3.6M1797.5 677.7v3.6" stroke="#8c8c8c" stroke-width="1"/><path d="M1687.7 685.9h3.6M1689.5 684.1v3.6" stroke="#8c8c8c" stroke-width="1"/><path d="M1695.7 685.9h3.6M1697.5 684.1v3.6" stroke="#8c8c8c" stroke-width="1"/><path d="M1703.7 685.9h3.6M1705.5 684.1v3.6" stroke="#8c8c8c" stroke-width="1"/><path d="M1711.7 685.9h3.6M1713.5 684.1v3.6" stroke="#8c8c8c" stroke-width="1"/><path d="M1719.7 685.9h3.6M1721.5 684.1v3.6" stroke="#8c8c8c" stroke-width="1"/><path d="M1727.7 685.9h3.6M1729.5 684.1v3.6" stroke="#8c8c8c" stroke-width="1"/><path d="M1735.7 685.9h3.6M1737.5 684.1v3.6" stroke="#8c8c8c" stroke-width="1"/><path d="M1743.7 685.9h3.6M1745.5 684.1v3.6" stroke="#8c8c8c" stroke-width="1"/><path d="M1751.7 685.9h3.6M1753.5 684.1v3.6" stroke="#8c8c8c" stroke-width="1"/><path d="M1759.7 685.9h3.6M1761.5 684.1v3.6" stroke="#8c8c8c" stroke-width="1"/><path d="M1767.7 685.9h3.6M1769.5 684.1v3.6" stroke="#8c8c8c" stroke-width="1"/><path d="M1775.7 685.9h3.6M1777.5 684.1v3.6" stroke="#8c8c8c" stroke-width="1"/><path d="M1783.7 685.9h3.6M1785.5 684.1v3.6" stroke="#8c8c8c" stroke-width="1"/><path d="M1791.7 685.9h3.6M1793.5 684.1v3.6" stroke="#8c8c8c" stroke-width="1"/><path d="M1691.7 692.3h3.6M1693.5 690.5v3.6" stroke="#8c8c8c" stroke-width="1"/><path d="M1707.7 692.3h3.6M1709.5 690.5v3.6" stroke="#8c8c8c" stroke-width="1"/><path d="M1715.7 692.3h3.6M1717.5 690.5v3.6" stroke="#8c8c8c" stroke-width="1"/><path d="M1723.7 692.3h3.6M1725.5 690.5v3.6" stroke="#8c8c8c" stroke-width="1"/><path d="M1739.7 692.3h3.6M1741.5 690.5v3.6" stroke="#8c8c8c" stroke-width="1"/><path d="M1747.7 692.3h3.6M1749.5 690.5v3.6" stroke="#8c8c8c" stroke-width="1"/><path d="M1755.7 692.3h3.6M1757.5 690.5v3.6" stroke="#8c8c8c" stroke-width="1"/><path d="M1763.7 692.3h3.6M1765.5 690.5v3.6" stroke="#8c8c8c" stroke-width="1"/><path d="M1771.7 692.3h3.6M1773.5 690.5v3.6" stroke="#8c8c8c" stroke-width="1"/><path d="M1779.7 692.3h3.6M1781.5 690.5v3.6" stroke="#8c8c8c" stroke-width="1"/><path d="M1787.7 692.3h3.6M1789.5 690.5v3.6" stroke="#8c8c8c" stroke-width="1"/><path d="M1795.7 692.3h3.6M1797.5 690.5v3.6" stroke="#8c8c8c" stroke-width="1"/><path d="M1687.7 698.7h3.6M1689.5 696.9v3.6" stroke="#8c8c8c" stroke-width="1"/><path d="M1695.7 698.7h3.6M1697.5 696.9v3.6" stroke="#8c8c8c" stroke-width="1"/><path d="M1703.7 698.7h3.6M1705.5 696.9v3.6" stroke="#8c8c8c" stroke-width="1"/><path d="M1711.7 698.7h3.6M1713.5 696.9v3.6" stroke="#8c8c8c" stroke-width="1"/><path d="M1719.7 698.7h3.6M1721.5 696.9v3.6" stroke="#8c8c8c" stroke-width="1"/><path d="M1727.7 698.7h3.6M1729.5 696.9v3.6" stroke="#8c8c8c" stroke-width="1"/><path d="M1735.7 698.7h3.6M1737.5 696.9v3.6" stroke="#8c8c8c" stroke-width="1"/><path d="M1743.7 698.7h3.6M1745.5 696.9v3.6" stroke="#8c8c8c" stroke-width="1"/><path d="M1751.7 698.7h3.6M1753.5 696.9v3.6" stroke="#8c8c8c" stroke-width="1"/><path d="M1759.7 698.7h3.6M1761.5 696.9v3.6" stroke="#8c8c8c" stroke-width="1"/><path d="M1767.7 698.7h3.6M1769.5 696.9v3.6" stroke="#8c8c8c" stroke-width="1"/><path d="M1775.7 698.7h3.6M1777.5 696.9v3.6" stroke="#8c8c8c" stroke-width="1"/><path d="M1783.7 698.7h3.6M1785.5 696.9v3.6" stroke="#8c8c8c" stroke-width="1"/><path d="M1791.7 698.7h3.6M1793.5 696.9v3.6" stroke="#8c8c8c" stroke-width="1"/><path d="M1754.2 711h3.6M1756 709.2v3.6" stroke="#8c8c8c" stroke-width="1"/><path d="M1762.2 711h3.6M1764 709.2v3.6" stroke="#8c8c8c" stroke-width="1"/><path d="M1770.2 711h3.6M1772 709.2v3.6" stroke="#8c8c8c" stroke-width="1"/><path d="M1794.2 711h3.6M1796 709.2v3.6" stroke="#8c8c8c" stroke-width="1"/><path d="M1758.2 717.4h3.6M1760 715.6v3.6" stroke="#8c8c8c" stroke-width="1"/><path d="M1782.2 717.4h3.6M1784 715.6v3.6" stroke="#8c8c8c" stroke-width="1"/><path d="M1790.2 717.4h3.6M1792 715.6v3.6" stroke="#8c8c8c" stroke-width="1"/><path d="M1798.2 717.4h3.6M1800 715.6v3.6" stroke="#8c8c8c" stroke-width="1"/><path d="M1754.2 723.8h3.6M1756 722v3.6" stroke="#8c8c8c" stroke-width="1"/><path d="M1762.2 723.8h3.6M1764 722v3.6" stroke="#8c8c8c" stroke-width="1"/><path d="M1770.2 723.8h3.6M1772 722v3.6" stroke="#8c8c8c" stroke-width="1"/><path d="M1778.2 723.8h3.6M1780 722v3.6" stroke="#8c8c8c" stroke-width="1"/><path d="M1786.2 723.8h3.6M1788 722v3.6" stroke="#8c8c8c" stroke-width="1"/><path d="M1794.2 723.8h3.6M1796 722v3.6" stroke="#8c8c8c" stroke-width="1"/><path d="M1758.2 730.2h3.6M1760 728.4v3.6" stroke="#8c8c8c" stroke-width="1"/><path d="M1766.2 730.2h3.6M1768 728.4v3.6" stroke="#8c8c8c" stroke-width="1"/><path d="M1774.2 730.2h3.6M1776 728.4v3.6" stroke="#8c8c8c" stroke-width="1"/><path d="M1782.2 730.2h3.6M1784 728.4v3.6" stroke="#8c8c8c" stroke-width="1"/><path d="M1790.2 730.2h3.6M1792 728.4v3.6" stroke="#8c8c8c" stroke-width="1"/><path d="M1798.2 730.2h3.6M1800 728.4v3.6" stroke="#8c8c8c" stroke-width="1"/><path d="M1754.2 736.6h3.6M1756 734.8v3.6" stroke="#8c8c8c" stroke-width="1"/><path d="M1778.2 736.6h3.6M1780 734.8v3.6" stroke="#8c8c8c" stroke-width="1"/><path d="M1786.2 736.6h3.6M1788 734.8v3.6" stroke="#8c8c8c" stroke-width="1"/><path d="M1794.2 736.6h3.6M1796 734.8v3.6" stroke="#8c8c8c" stroke-width="1"/><path d="M1758.2 743h3.6M1760 741.2v3.6" stroke="#8c8c8c" stroke-width="1"/><path d="M1766.2 743h3.6M1768 741.2v3.6" stroke="#8c8c8c" stroke-width="1"/><path d="M1774.2 743h3.6M1776 741.2v3.6" stroke="#8c8c8c" stroke-width="1"/><path d="M1790.2 743h3.6M1792 741.2v3.6" stroke="#8c8c8c" stroke-width="1"/><path d="M1798.2 743h3.6M1800 741.2v3.6" stroke="#8c8c8c" stroke-width="1"/><path d="M1770.2 749.4h3.6M1772 747.6v3.6" stroke="#8c8c8c" stroke-width="1"/><path d="M1778.2 749.4h3.6M1780 747.6v3.6" stroke="#8c8c8c" stroke-width="1"/><path d="M1794.2 749.4h3.6M1796 747.6v3.6" stroke="#8c8c8c" stroke-width="1"/><path d="M1758.2 755.8h3.6M1760 754v3.6" stroke="#8c8c8c" stroke-width="1"/><path d="M1766.2 755.8h3.6M1768 754v3.6" stroke="#8c8c8c" stroke-width="1"/><path d="M1774.2 755.8h3.6M1776 754v3.6" stroke="#8c8c8c" stroke-width="1"/><path d="M1790.2 755.8h3.6M1792 754v3.6" stroke="#8c8c8c" stroke-width="1"/><path d="M1798.2 755.8h3.6M1800 754v3.6" stroke="#8c8c8c" stroke-width="1"/><path d="M1754.2 762.2h3.6M1756 760.4v3.6" stroke="#8c8c8c" stroke-width="1"/><path d="M1762.2 762.2h3.6M1764 760.4v3.6" stroke="#8c8c8c" stroke-width="1"/><path d="M1770.2 762.2h3.6M1772 760.4v3.6" stroke="#8c8c8c" stroke-width="1"/><path d="M1778.2 762.2h3.6M1780 760.4v3.6" stroke="#8c8c8c" stroke-width="1"/><path d="M1786.2 762.2h3.6M1788 760.4v3.6" stroke="#8c8c8c" stroke-width="1"/><path d="M1794.2 762.2h3.6M1796 760.4v3.6" stroke="#8c8c8c" stroke-width="1"/><path d="M1577.2 765h3.6M1579 763.2v3.6" stroke="#8c8c8c" stroke-width="1"/><path d="M1585.2 765h3.6M1587 763.2v3.6" stroke="#8c8c8c" stroke-width="1"/><path d="M1593.2 765h3.6M1595 763.2v3.6" stroke="#8c8c8c" stroke-width="1"/><path d="M1601.2 765h3.6M1603 763.2v3.6" stroke="#8c8c8c" stroke-width="1"/><path d="M1609.2 765h3.6M1611 763.2v3.6" stroke="#8c8c8c" stroke-width="1"/><path d="M1617.2 765h3.6M1619 763.2v3.6" stroke="#8c8c8c" stroke-width="1"/><path d="M1625.2 765h3.6M1627 763.2v3.6" stroke="#8c8c8c" stroke-width="1"/><path d="M1633.2 765h3.6M1635 763.2v3.6" stroke="#8c8c8c" stroke-width="1"/><path d="M1649.2 765h3.6M1651 763.2v3.6" stroke="#8c8c8c" stroke-width="1"/><path d="M1581.2 771.4h3.6M1583 769.6v3.6" stroke="#8c8c8c" stroke-width="1"/><path d="M1589.2 771.4h3.6M1591 769.6v3.6" stroke="#8c8c8c" stroke-width="1"/><path d="M1597.2 771.4h3.6M1599 769.6v3.6" stroke="#8c8c8c" stroke-width="1"/><path d="M1605.2 771.4h3.6M1607 769.6v3.6" stroke="#8c8c8c" stroke-width="1"/><path d="M1637.2 771.4h3.6M1639 769.6v3.6" stroke="#8c8c8c" stroke-width="1"/><path d="M1645.2 771.4h3.6M1647 769.6v3.6" stroke="#8c8c8c" stroke-width="1"/><path d="M1577.2 777.8h3.6M1579 776v3.6" stroke="#8c8c8c" stroke-width="1"/><path d="M1585.2 777.8h3.6M1587 776v3.6" stroke="#8c8c8c" stroke-width="1"/><path d="M1593.2 777.8h3.6M1595 776v3.6" stroke="#8c8c8c" stroke-width="1"/><path d="M1601.2 777.8h3.6M1603 776v3.6" stroke="#8c8c8c" stroke-width="1"/><path d="M1609.2 777.8h3.6M1611 776v3.6" stroke="#8c8c8c" stroke-width="1"/><path d="M1625.2 777.8h3.6M1627 776v3.6" stroke="#8c8c8c" stroke-width="1"/><path d="M1633.2 777.8h3.6M1635 776v3.6" stroke="#8c8c8c" stroke-width="1"/><path d="M1641.2 777.8h3.6M1643 776v3.6" stroke="#8c8c8c" stroke-width="1"/><path d="M1649.2 777.8h3.6M1651 776v3.6" stroke="#8c8c8c" stroke-width="1"/><path d="M1589.2 784.2h3.6M1591 782.4v3.6" stroke="#8c8c8c" stroke-width="1"/><path d="M1597.2 784.2h3.6M1599 782.4v3.6" stroke="#8c8c8c" stroke-width="1"/><path d="M1605.2 784.2h3.6M1607 782.4v3.6" stroke="#8c8c8c" stroke-width="1"/><path d="M1613.2 784.2h3.6M1615 782.4v3.6" stroke="#8c8c8c" stroke-width="1"/><path d="M1629.2 784.2h3.6M1631 782.4v3.6" stroke="#8c8c8c" stroke-width="1"/><path d="M1637.2 784.2h3.6M1639 782.4v3.6" stroke="#8c8c8c" stroke-width="1"/><path d="M1645.2 784.2h3.6M1647 782.4v3.6" stroke="#8c8c8c" stroke-width="1"/><path d="M1577.2 790.6h3.6M1579 788.8v3.6" stroke="#8c8c8c" stroke-width="1"/><path d="M1593.2 790.6h3.6M1595 788.8v3.6" stroke="#8c8c8c" stroke-width="1"/><path d="M1601.2 790.6h3.6M1603 788.8v3.6" stroke="#8c8c8c" stroke-width="1"/><path d="M1617.2 790.6h3.6M1619 788.8v3.6" stroke="#8c8c8c" stroke-width="1"/><path d="M1625.2 790.6h3.6M1627 788.8v3.6" stroke="#8c8c8c" stroke-width="1"/><path d="M1633.2 790.6h3.6M1635 788.8v3.6" stroke="#8c8c8c" stroke-width="1"/><path d="M1641.2 790.6h3.6M1643 788.8v3.6" stroke="#8c8c8c" stroke-width="1"/><path d="M1649.2 790.6h3.6M1651 788.8v3.6" stroke="#8c8c8c" stroke-width="1"/><path d="M1690.2 709.5h3.6M1692 707.7v3.6" stroke="#8c8c8c" stroke-width="1"/><path d="M1686.2 715.9h3.6M1688 714.1v3.6" stroke="#8c8c8c" stroke-width="1"/><path d="M1682.2 722.3h3.6M1684 720.5v3.6" stroke="#8c8c8c" stroke-width="1"/><path d="M1686.2 728.7h3.6M1688 726.9v3.6" stroke="#8c8c8c" stroke-width="1"/><path d="M1682.2 735.1h3.6M1684 733.3v3.6" stroke="#8c8c8c" stroke-width="1"/><path d="M1690.2 735.1h3.6M1692 733.3v3.6" stroke="#8c8c8c" stroke-width="1"/><path d="M1686.2 741.5h3.6M1688 739.7v3.6" stroke="#8c8c8c" stroke-width="1"/><path d="M1682.2 747.9h3.6M1684 746.1v3.6" stroke="#8c8c8c" stroke-width="1"/><path d="M1690.2 747.9h3.6M1692 746.1v3.6" stroke="#8c8c8c" stroke-width="1"/><path d="M1686.2 754.3h3.6M1688 752.5v3.6" stroke="#8c8c8c" stroke-width="1"/><path d="M1682.2 760.7h3.6M1684 758.9v3.6" stroke="#8c8c8c" stroke-width="1"/><rect x="1704.8" y="778.6" width="2.4" height="2.4" fill="#c00000"/><rect x="1674.3" y="791.3" width="2.4" height="2.4" fill="#c00000"/><rect x="1624.4" y="778.4" width="2.4" height="2.4" fill="#c00000"/><rect x="1648.8" y="778.7" width="2.4" height="2.4" fill="#c00000"/><rect x="1710.6" y="754.9" width="2.4" height="2.4" fill="#c00000"/><rect x="1636.1" y="748.5" width="2.4" height="2.4" fill="#c00000"/><rect x="1640.3" y="750.9" width="2.4" height="2.4" fill="#c00000"/><rect x="1664.3" y="792.6" width="2.4" height="2.4" fill="#c00000"/><rect x="1659.2" y="761.8" width="2.4" height="2.4" fill="#c00000"/><rect x="1673.8" y="760.5" width="2.4" height="2.4" fill="#c00000"/><rect x="1711.1" y="780.7" width="2.4" height="2.4" fill="#c00000"/><rect x="1630.8" y="758.5" width="2.4" height="2.4" fill="#c00000"/><rect x="1702.6" y="791" width="2.4" height="2.4" fill="#c00000"/><rect x="1698.9" y="767.3" width="2.4" height="2.4" fill="#c00000"/><rect x="1745.3" y="747.6" width="2.4" height="2.4" fill="#c00000"/><rect x="1616.4" y="783.5" width="2.4" height="2.4" fill="#c00000"/><rect x="1665.6" y="749.4" width="2.4" height="2.4" fill="#c00000"/><rect x="1685.1" y="793.3" width="2.4" height="2.4" fill="#c00000"/><rect x="1681" y="763.6" width="2.4" height="2.4" fill="#c00000"/><rect x="1621" y="750.6" width="2.4" height="2.4" fill="#c00000"/><rect x="1734.5" y="770.1" width="2.4" height="2.4" fill="#c00000"/><rect x="1739.7" y="749.8" width="2.4" height="2.4" fill="#c00000"/><rect x="1642.1" y="749.6" width="2.4" height="2.4" fill="#c00000"/><rect x="1663.8" y="750.1" width="2.4" height="2.4" fill="#c00000"/><rect x="1643.8" y="766.2" width="2.4" height="2.4" fill="#c00000"/><rect x="1650.9" y="749.7" width="2.4" height="2.4" fill="#c00000"/><rect x="1613.1" y="792.5" width="2.4" height="2.4" fill="#c00000"/><rect x="1633.1" y="770.9" width="2.4" height="2.4" fill="#c00000"/><rect x="1664.5" y="772" width="2.4" height="2.4" fill="#c00000"/><rect x="1619.7" y="761.9" width="2.4" height="2.4" fill="#c00000"/><rect x="1623" y="772.5" width="2.4" height="2.4" fill="#c00000"/><rect x="1737.7" y="775.1" width="2.4" height="2.4" fill="#c00000"/><rect x="1728.6" y="757.3" width="2.4" height="2.4" fill="#c00000"/><rect x="1610.3" y="772.4" width="2.4" height="2.4" fill="#c00000"/><rect x="1676.4" y="773.9" width="2.4" height="2.4" fill="#c00000"/><rect x="1660.9" y="776.4" width="2.4" height="2.4" fill="#c00000"/><rect x="1710.1" y="789.7" width="2.4" height="2.4" fill="#c00000"/><rect x="1651.2" y="768.2" width="2.4" height="2.4" fill="#c00000"/><rect x="1724.3" y="757.7" width="2.4" height="2.4" fill="#c00000"/><rect x="1624.1" y="761.8" width="2.4" height="2.4" fill="#c00000"/><rect x="1620.2" y="783.2" width="2.4" height="2.4" fill="#c00000"/><rect x="1723.3" y="761.8" width="2.4" height="2.4" fill="#c00000"/><rect x="1626.1" y="751.1" width="2.4" height="2.4" fill="#c00000"/><rect x="1642.3" y="751.2" width="2.4" height="2.4" fill="#c00000"/><rect x="1668.2" y="774.1" width="2.4" height="2.4" fill="#c00000"/><rect x="1642.4" y="750.2" width="2.4" height="2.4" fill="#c00000"/><rect x="1706.6" y="749.5" width="2.4" height="2.4" fill="#c00000"/><rect x="1636" y="760.6" width="2.4" height="2.4" fill="#c00000"/><rect x="1660.5" y="751.9" width="2.4" height="2.4" fill="#c00000"/><rect x="1667.1" y="761.9" width="2.4" height="2.4" fill="#c00000"/><rect x="1713.9" y="773.2" width="2.4" height="2.4" fill="#c00000"/><rect x="1734.1" y="777.7" width="2.4" height="2.4" fill="#c00000"/><rect x="1714.9" y="774" width="2.4" height="2.4" fill="#c00000"/><rect x="1670.1" y="785.3" width="2.4" height="2.4" fill="#c00000"/><rect x="1700.2" y="791.7" width="2.4" height="2.4" fill="#c00000"/><rect x="1710.4" y="779.9" width="2.4" height="2.4" fill="#c00000"/><rect x="1645.5" y="785.1" width="2.4" height="2.4" fill="#c00000"/><rect x="1661.7" y="753.4" width="2.4" height="2.4" fill="#c00000"/><rect x="1617.1" y="755.2" width="2.4" height="2.4" fill="#c00000"/><rect x="1644.8" y="778.7" width="2.4" height="2.4" fill="#c00000"/><rect x="1648.1" y="750.2" width="2.4" height="2.4" fill="#c00000"/><rect x="1715.5" y="773.2" width="2.4" height="2.4" fill="#c00000"/><rect x="1611.7" y="749.6" width="2.4" height="2.4" fill="#c00000"/><rect x="1626.1" y="763.9" width="2.4" height="2.4" fill="#c00000"/><rect x="1729" y="791.4" width="2.4" height="2.4" fill="#c00000"/><rect x="1694.1" y="758" width="2.4" height="2.4" fill="#c00000"/><rect x="1668.3" y="764.1" width="2.4" height="2.4" fill="#c00000"/><rect x="1654.4" y="747.9" width="2.4" height="2.4" fill="#c00000"/><rect x="1690.2" y="785.7" width="2.4" height="2.4" fill="#c00000"/><rect x="1710.3" y="751.7" width="2.4" height="2.4" fill="#c00000"/><rect x="1812.2" y="666" width="19.5" height="13.5" fill="none" stroke="#a8b098" stroke-width="1"/><rect x="1813.2" y="667.5" width="4" height="10.5" fill="#8c8c8c"/><rect x="1819.7" y="667.5" width="4" height="10.5" fill="#8c8c8c"/><rect x="1826.2" y="667.5" width="4" height="10.5" fill="#8c8c8c"/><rect x="1808.5" y="686.2" width="8" height="10" fill="none" stroke="#a8b098" stroke-width="1"/><rect x="1810" y="687.7" width="5" height="3.5" fill="#800000"/><rect x="1810" y="691.2" width="5" height="3.5" fill="#800000"/><rect x="1823.5" y="686.2" width="14" height="6" fill="none" stroke="#a8b098" stroke-width="1"/><rect x="1825" y="687.7" width="4.9" height="3" fill="#800000"/><rect x="1831.1" y="687.7" width="4.9" height="3" fill="#800000"/><rect x="1828" y="692.2" width="12" height="6" fill="none" stroke="#a8b098" stroke-width="1"/><rect x="1829.5" y="693.7" width="4.2" height="3" fill="#800000"/><rect x="1834.3" y="693.7" width="4.2" height="3" fill="#800000"/><rect x="1834" y="692.2" width="10" height="7" fill="none" stroke="#a8b098" stroke-width="1"/><rect x="1835.5" y="693.7" width="3.5" height="4" fill="#800000"/><rect x="1839" y="693.7" width="3.5" height="4" fill="#800000"/><rect x="1808.5" y="697.5" width="8" height="10" fill="none" stroke="#a8b098" stroke-width="1"/><rect x="1810" y="699" width="5" height="3.5" fill="#800000"/><rect x="1810" y="702.5" width="5" height="3.5" fill="#800000"/><rect x="1816" y="697.5" width="10" height="6" fill="none" stroke="#a8b098" stroke-width="1"/><rect x="1817.5" y="699" width="3.5" height="3" fill="#800000"/><rect x="1821" y="699" width="3.5" height="3" fill="#800000"/><rect x="1823.5" y="700.5" width="12" height="6" fill="none" stroke="#a8b098" stroke-width="1"/><rect x="1825" y="702" width="4.2" height="3" fill="#800000"/><rect x="1829.8" y="702" width="4.2" height="3" fill="#800000"/><rect x="1808.5" y="711" width="10" height="7" fill="none" stroke="#a8b098" stroke-width="1"/><rect x="1810" y="712.5" width="3.5" height="4" fill="#800000"/><rect x="1813.5" y="712.5" width="3.5" height="4" fill="#800000"/><rect x="1817.5" y="714" width="12" height="6" fill="none" stroke="#a8b098" stroke-width="1"/><rect x="1819" y="715.5" width="4.2" height="3" fill="#800000"/><rect x="1823.8" y="715.5" width="4.2" height="3" fill="#800000"/><rect x="1825" y="714" width="6" height="10" fill="none" stroke="#a8b098" stroke-width="1"/><rect x="1826.5" y="715.5" width="3" height="3.5" fill="#800000"/><rect x="1826.5" y="719" width="3" height="3.5" fill="#800000"/><rect x="1840" y="703.5" width="8" height="18" fill="none" stroke="#a8b098" stroke-width="1"/><rect x="1841.5" y="705" width="5" height="6.3" fill="#800000"/><rect x="1841.5" y="713.7" width="5" height="6.3" fill="#800000"/><rect x="1808.5" y="721.5" width="8" height="10" fill="none" stroke="#a8b098" stroke-width="1"/><rect x="1810" y="723" width="5" height="3.5" fill="#800000"/><rect x="1810" y="726.5" width="5" height="3.5" fill="#800000"/><rect x="1813" y="721.5" width="12" height="6" fill="none" stroke="#a8b098" stroke-width="1"/><rect x="1814.5" y="723" width="4.2" height="3" fill="#800000"/><rect x="1819.3" y="723" width="4.2" height="3" fill="#800000"/><rect x="1822" y="721.5" width="12" height="6" fill="none" stroke="#a8b098" stroke-width="1"/><rect x="1823.5" y="723" width="4.2" height="3" fill="#800000"/><rect x="1828.3" y="723" width="4.2" height="3" fill="#800000"/><rect x="1828" y="721.5" width="10" height="6" fill="none" stroke="#a8b098" stroke-width="1"/><rect x="1829.5" y="723" width="3.5" height="3" fill="#800000"/><rect x="1833" y="723" width="3.5" height="3" fill="#800000"/><rect x="1837" y="721.5" width="8" height="8" fill="none" stroke="#a8b098" stroke-width="1"/><rect x="1838.5" y="723" width="5" height="2.8" fill="#800000"/><rect x="1838.5" y="725.2" width="5" height="2.8" fill="#800000"/><rect x="1852" y="696" width="10" height="6" fill="none" stroke="#a8b098" stroke-width="1"/><rect x="1853.5" y="697.5" width="3.5" height="3" fill="#800000"/><rect x="1857" y="697.5" width="3.5" height="3" fill="#800000"/><rect x="1852" y="702" width="10" height="6" fill="none" stroke="#a8b098" stroke-width="1"/><rect x="1853.5" y="703.5" width="3.5" height="3" fill="#800000"/><rect x="1857" y="703.5" width="3.5" height="3" fill="#800000"/><rect x="1852" y="709.5" width="10" height="6" fill="none" stroke="#a8b098" stroke-width="1"/><rect x="1853.5" y="711" width="3.5" height="3" fill="#800000"/><rect x="1857" y="711" width="3.5" height="3" fill="#800000"/><rect x="1852" y="715.5" width="10" height="6" fill="none" stroke="#a8b098" stroke-width="1"/><rect x="1853.5" y="717" width="3.5" height="3" fill="#800000"/><rect x="1857" y="717" width="3.5" height="3" fill="#800000"/><rect x="1852" y="721.5" width="10" height="6" fill="none" stroke="#a8b098" stroke-width="1"/><rect x="1853.5" y="723" width="3.5" height="3" fill="#800000"/><rect x="1857" y="723" width="3.5" height="3" fill="#800000"/><rect x="1807" y="730.5" width="30" height="40" fill="none" stroke="#a8b098" stroke-width="1"/><rect x="1812" y="731.5" width="3" height="6" fill="#800000"/><rect x="1812" y="760.5" width="3" height="6" fill="#800000"/><rect x="1818" y="731.5" width="3" height="6" fill="#800000"/><rect x="1818" y="760.5" width="3" height="6" fill="#800000"/><rect x="1824" y="731.5" width="3" height="6" fill="#800000"/><rect x="1824" y="760.5" width="3" height="6" fill="#800000"/><rect x="1830" y="731.5" width="3" height="6" fill="#800000"/><rect x="1830" y="760.5" width="3" height="6" fill="#800000"/><rect x="1808" y="740.5" width="5" height="3" fill="#800000"/><rect x="1831" y="740.5" width="5" height="3" fill="#8c8c8c"/><rect x="1808" y="747.5" width="5" height="3" fill="#800000"/><rect x="1831" y="747.5" width="5" height="3" fill="#8c8c8c"/><rect x="1808" y="754.5" width="5" height="3" fill="#800000"/><rect x="1831" y="754.5" width="5" height="3" fill="#8c8c8c"/><rect x="1849" y="741" width="14" height="11" fill="none" stroke="#a8b098" stroke-width="1"/><rect x="1850" y="742" width="5" height="9" fill="#8c8c8c"/><rect x="1717.7" y="709.5" width="9" height="4" fill="none" stroke="#a8b098" stroke-width="1"/><rect x="1719.2" y="711" width="3.1" height="1" fill="#800000"/><rect x="1722.1" y="711" width="3.1" height="1" fill="#800000"/><rect x="1717.7" y="715.5" width="9" height="4" fill="none" stroke="#a8b098" stroke-width="1"/><rect x="1719.2" y="717" width="3.1" height="1" fill="#800000"/><rect x="1722.1" y="717" width="3.1" height="1" fill="#800000"/><rect x="1717.7" y="721.5" width="9" height="4" fill="none" stroke="#a8b098" stroke-width="1"/><rect x="1719.2" y="723" width="3.1" height="1" fill="#800000"/><rect x="1722.1" y="723" width="3.1" height="1" fill="#800000"/><rect x="1717.7" y="727.5" width="5" height="9" fill="none" stroke="#a8b098" stroke-width="1"/><rect x="1719.2" y="729" width="2" height="3.1" fill="#800000"/><rect x="1719.2" y="731.8" width="2" height="3.1" fill="#800000"/><rect x="1757.5" y="721.5" width="12" height="6" fill="none" stroke="#a8b098" stroke-width="1"/><rect x="1759" y="723" width="4.2" height="3" fill="#800000"/><rect x="1763.8" y="723" width="4.2" height="3" fill="#800000"/><rect x="1762" y="711" width="8" height="14" fill="none" stroke="#a8b098" stroke-width="1"/><rect x="1763.5" y="712.5" width="5" height="4.9" fill="#800000"/><rect x="1763.5" y="718.6" width="5" height="4.9" fill="#800000"/><rect x="1765" y="730.5" width="4" height="10" fill="none" stroke="#a8b098" stroke-width="1"/><rect x="1766.5" y="732" width="1" height="3.5" fill="#800000"/><rect x="1766.5" y="735.5" width="1" height="3.5" fill="#800000"/><rect x="1762" y="739.5" width="8" height="4" fill="none" stroke="#a8b098" stroke-width="1"/><rect x="1763.5" y="741" width="2.8" height="1" fill="#800000"/><rect x="1765.7" y="741" width="2.8" height="1" fill="#800000"/><path d="M1862 787.7 H1788 L1785 785 H1760 Q1751.5 785 1751.5 793 V875 L1753 878 V940 Q1750 958 1735 960.5 H1693 Q1684 960 1675 949 H1656 Q1645 949 1645 960 V1148 Q1645 1159 1658 1159 H1806 L1825 1146.5 H1862 Z" fill="#000" stroke="#ff00ff" stroke-width="1.3"/><polyline points="1744.7,790.2 1744.7,897.5 1706.5,897.5 1691.5,912.5 1691.5,932 1687,935 1645,935 1636,944 1636,980" fill="none" stroke="#00ffff" stroke-width="1.3"/><polyline points="1741.7,792.5 1741.7,894.5 1705,894.5 1688.5,909.5 1688.5,929 1684,932 1642,932 1633,941 1633,980" fill="none" stroke="#00ffff" stroke-width="1"/><polyline points="1741,895.2 1738,899 1708,899 1693,914.7 1693,933.5 1688.5,936.5 1643.5,936.5 1638.2,941.7 1638.2,980" fill="none" stroke="#8c8c00" stroke-width="1.6"/><polygon points="1580.2,795.5 1618,795.5 1624,801.5 1624,804.5 1580.2,804.5" fill="#8c8c00"/><polygon points="1580.2,809 1699,807.5 1700.5,815 1580.2,817.2" fill="#ff00ff"/><polyline points="1580.2,806 1675,806" fill="none" stroke="#00ffff" stroke-width="2"/><polyline points="1580.2,824 1615,824" fill="none" stroke="#00ffff" stroke-width="1.2"/><polyline points="1580.2,833 1615,833" fill="none" stroke="#00ffff" stroke-width="1.2"/><polygon points="1580.2,905 1607.5,905 1618,915.5 1580.2,915.5" fill="#ff00ff"/><polyline points="1580.2,909.5 1607.5,909.5" fill="none" stroke="#8c8c00" stroke-width="2"/><polygon points="1615,930.5 1630,930.5 1630,980 1618,980" fill="#ff00ff"/><polyline points="1580.2,888.5 1630,888.5 1640.5,894.5" fill="none" stroke="#ff00ff" stroke-width="1.5"/><polyline points="1580.2,897.5 1607.5,897.5" fill="none" stroke="#a8b098" stroke-width="4"/><polyline points="1615,815 1615,890" fill="none" stroke="#a8b098" stroke-width="4"/><polyline points="1600,912.5 1630,942.5 1630,980" fill="none" stroke="#00ffff" stroke-width="1"/><polyline points="1603,912.5 1633,942.5" fill="none" stroke="#8c8c00" stroke-width="1"/><rect x="1621" y="803" width="6" height="12" fill="none" stroke="#a8b098" stroke-width="1"/><rect x="1622.5" y="804.5" width="3" height="4.2" fill="#800000"/><rect x="1622.5" y="809.3" width="3" height="4.2" fill="#800000"/><rect x="1627" y="803" width="6" height="12" fill="none" stroke="#a8b098" stroke-width="1"/><rect x="1628.5" y="804.5" width="3" height="4.2" fill="#800000"/><rect x="1628.5" y="809.3" width="3" height="4.2" fill="#800000"/><rect x="1633" y="803" width="6" height="12" fill="none" stroke="#a8b098" stroke-width="1"/><rect x="1634.5" y="804.5" width="3" height="4.2" fill="#800000"/><rect x="1634.5" y="809.3" width="3" height="4.2" fill="#800000"/><rect x="1637.5" y="803" width="6" height="12" fill="none" stroke="#a8b098" stroke-width="1"/><rect x="1639" y="804.5" width="3" height="4.2" fill="#800000"/><rect x="1639" y="809.3" width="3" height="4.2" fill="#800000"/><rect x="1651" y="803" width="12" height="22" fill="none" stroke="#a8b098" stroke-width="1"/><rect x="1652.5" y="804.5" width="9" height="7.7" fill="#800000"/><rect x="1652.5" y="815.8" width="9" height="7.7" fill="#800000"/><rect x="1682.5" y="803" width="12" height="22" fill="none" stroke="#a8b098" stroke-width="1"/><rect x="1684" y="804.5" width="9" height="7.7" fill="#800000"/><rect x="1684" y="815.8" width="9" height="7.7" fill="#800000"/><rect x="1703.5" y="803" width="14" height="8" fill="none" stroke="#a8b098" stroke-width="1"/><rect x="1705" y="804.5" width="4.9" height="5" fill="#800000"/><rect x="1711.1" y="804.5" width="4.9" height="5" fill="#800000"/><rect x="1703.5" y="810.5" width="14" height="8" fill="none" stroke="#a8b098" stroke-width="1"/><rect x="1705" y="812" width="4.9" height="5" fill="#800000"/><rect x="1711.1" y="812" width="4.9" height="5" fill="#800000"/><rect x="1703.5" y="819.5" width="14" height="8" fill="none" stroke="#a8b098" stroke-width="1"/><rect x="1705" y="821" width="4.9" height="5" fill="#800000"/><rect x="1711.1" y="821" width="4.9" height="5" fill="#800000"/><rect x="1703.5" y="828.5" width="14" height="8" fill="none" stroke="#a8b098" stroke-width="1"/><rect x="1705" y="830" width="4.9" height="5" fill="#800000"/><rect x="1711.1" y="830" width="4.9" height="5" fill="#800000"/><rect x="1703.5" y="836" width="14" height="8" fill="none" stroke="#a8b098" stroke-width="1"/><rect x="1705" y="837.5" width="4.9" height="5" fill="#800000"/><rect x="1711.1" y="837.5" width="4.9" height="5" fill="#800000"/><rect x="1621" y="824" width="12" height="20" fill="none" stroke="#a8b098" stroke-width="1"/><rect x="1622.5" y="825.5" width="9" height="7" fill="#800000"/><rect x="1622.5" y="835.5" width="9" height="7" fill="#800000"/><rect x="1634.5" y="824" width="12" height="20" fill="none" stroke="#a8b098" stroke-width="1"/><rect x="1636" y="825.5" width="9" height="7" fill="#800000"/><rect x="1636" y="835.5" width="9" height="7" fill="#800000"/><rect x="1622.5" y="846.5" width="14" height="10" fill="none" stroke="#a8b098" stroke-width="1"/><rect x="1624" y="848" width="4.9" height="7" fill="#800000"/><rect x="1630.1" y="848" width="4.9" height="7" fill="#800000"/><rect x="1622.5" y="855.5" width="14" height="10" fill="none" stroke="#a8b098" stroke-width="1"/><rect x="1624" y="857" width="4.9" height="7" fill="#800000"/><rect x="1630.1" y="857" width="4.9" height="7" fill="#800000"/><rect x="1622.5" y="867.5" width="14" height="10" fill="none" stroke="#a8b098" stroke-width="1"/><rect x="1624" y="869" width="4.9" height="7" fill="#800000"/><rect x="1630.1" y="869" width="4.9" height="7" fill="#800000"/><rect x="1622.5" y="875" width="14" height="10" fill="none" stroke="#a8b098" stroke-width="1"/><rect x="1624" y="876.5" width="4.9" height="7" fill="#800000"/><rect x="1630.1" y="876.5" width="4.9" height="7" fill="#800000"/><rect x="1673.5" y="836" width="14" height="8" fill="none" stroke="#a8b098" stroke-width="1"/><rect x="1675" y="837.5" width="4.9" height="5" fill="#800000"/><rect x="1681.1" y="837.5" width="4.9" height="5" fill="#800000"/><rect x="1687" y="833" width="14" height="10" fill="none" stroke="#a8b098" stroke-width="1"/><rect x="1688.5" y="834.5" width="4.9" height="7" fill="#800000"/><rect x="1694.6" y="834.5" width="4.9" height="7" fill="#800000"/><rect x="1687" y="842" width="14" height="10" fill="none" stroke="#a8b098" stroke-width="1"/><rect x="1688.5" y="843.5" width="4.9" height="7" fill="#800000"/><rect x="1694.6" y="843.5" width="4.9" height="7" fill="#800000"/><rect x="1687" y="855.5" width="14" height="10" fill="none" stroke="#a8b098" stroke-width="1"/><rect x="1688.5" y="857" width="4.9" height="7" fill="#800000"/><rect x="1694.6" y="857" width="4.9" height="7" fill="#800000"/><rect x="1687" y="864.5" width="14" height="10" fill="none" stroke="#a8b098" stroke-width="1"/><rect x="1688.5" y="866" width="4.9" height="7" fill="#800000"/><rect x="1694.6" y="866" width="4.9" height="7" fill="#800000"/><rect x="1705" y="843.5" width="10" height="24" fill="none" stroke="#a8b098" stroke-width="1"/><rect x="1706.5" y="845" width="7" height="8.4" fill="#800000"/><rect x="1706.5" y="857.6" width="7" height="8.4" fill="#800000"/><rect x="1672" y="882.5" width="14" height="8" fill="none" stroke="#a8b098" stroke-width="1"/><rect x="1673.5" y="884" width="4.9" height="5" fill="#800000"/><rect x="1679.6" y="884" width="4.9" height="5" fill="#800000"/><rect x="1687" y="872" width="20" height="8" fill="none" stroke="#a8b098" stroke-width="1"/><rect x="1688.5" y="873.5" width="7" height="5" fill="#800000"/><rect x="1698.5" y="873.5" width="7" height="5" fill="#800000"/><rect x="1639" y="882.5" width="14" height="8" fill="none" stroke="#a8b098" stroke-width="1"/><rect x="1640.5" y="884" width="4.9" height="5" fill="#800000"/><rect x="1646.6" y="884" width="4.9" height="5" fill="#800000"/><rect x="1657" y="891.5" width="10" height="14" fill="none" stroke="#a8b098" stroke-width="1"/><rect x="1658.5" y="893" width="7" height="4.9" fill="#800000"/><rect x="1658.5" y="899.1" width="7" height="4.9" fill="#800000"/><rect x="1675" y="891.5" width="8" height="14" fill="none" stroke="#a8b098" stroke-width="1"/><rect x="1676.5" y="893" width="5" height="4.9" fill="#800000"/><rect x="1676.5" y="899.1" width="5" height="4.9" fill="#800000"/><rect x="1594" y="821" width="10" height="6" fill="none" stroke="#a8b098" stroke-width="1"/><rect x="1595.5" y="822.5" width="3.5" height="3" fill="#800000"/><rect x="1599" y="822.5" width="3.5" height="3" fill="#800000"/><rect x="1594" y="830" width="10" height="6" fill="none" stroke="#a8b098" stroke-width="1"/><rect x="1595.5" y="831.5" width="3.5" height="3" fill="#800000"/><rect x="1599" y="831.5" width="3.5" height="3" fill="#800000"/><rect x="1595.5" y="842" width="14" height="12" fill="none" stroke="#a8b098" stroke-width="1"/><rect x="1597" y="843.5" width="4.9" height="9" fill="#800000"/><rect x="1603.1" y="843.5" width="4.9" height="9" fill="#800000"/><rect x="1588" y="863" width="14" height="8" fill="none" stroke="#a8b098" stroke-width="1"/><rect x="1589.5" y="864.5" width="4.9" height="5" fill="#800000"/><rect x="1595.6" y="864.5" width="4.9" height="5" fill="#800000"/><rect x="1588" y="876.5" width="10" height="8" fill="none" stroke="#a8b098" stroke-width="1"/><rect x="1589.5" y="878" width="3.5" height="5" fill="#800000"/><rect x="1593" y="878" width="3.5" height="5" fill="#800000"/><rect x="1588" y="887" width="14" height="6" fill="none" stroke="#a8b098" stroke-width="1"/><rect x="1589.5" y="888.5" width="4.9" height="3" fill="#800000"/><rect x="1595.6" y="888.5" width="4.9" height="3" fill="#800000"/><rect x="1604.5" y="923" width="8" height="12" fill="none" stroke="#a8b098" stroke-width="1"/><rect x="1606" y="924.5" width="5" height="4.2" fill="#800000"/><rect x="1606" y="929.3" width="5" height="4.2" fill="#800000"/><rect x="1597" y="930.5" width="8" height="10" fill="none" stroke="#a8b098" stroke-width="1"/><rect x="1598.5" y="932" width="5" height="3.5" fill="#800000"/><rect x="1598.5" y="935.5" width="5" height="3.5" fill="#800000"/><rect x="1585" y="938" width="6" height="10" fill="none" stroke="#a8b098" stroke-width="1"/><rect x="1586.5" y="939.5" width="3" height="3.5" fill="#800000"/><rect x="1586.5" y="943" width="3" height="3.5" fill="#800000"/><rect x="1598.5" y="957.5" width="6" height="12" fill="none" stroke="#a8b098" stroke-width="1"/><rect x="1600" y="959" width="3" height="4.2" fill="#800000"/><rect x="1600" y="963.8" width="3" height="4.2" fill="#800000"/><rect x="1582" y="968" width="12" height="8" fill="none" stroke="#a8b098" stroke-width="1"/><rect x="1583.5" y="969.5" width="4.2" height="5" fill="#800000"/><rect x="1588.3" y="969.5" width="4.2" height="5" fill="#800000"/><rect x="1640.5" y="851" width="15" height="26" fill="none" stroke="#a8b098" stroke-width="1"/><rect x="1663" y="851" width="19" height="28" fill="none" stroke="#a8b098" stroke-width="1"/><polyline points="1663,824 1682.5,824 1682.5,848" fill="none" stroke="#ff8c00" stroke-width="1.2"/><polyline points="1642,845 1654,836 1666,836 1666,875 1660,884" fill="none" stroke="#ff8c00" stroke-width="1.2"/><polyline points="1582,854 1600,854" fill="none" stroke="#ff8c00" stroke-width="1.2"/><path d="M1721.2 824h3.6M1723 822.2v3.6" stroke="#8c8c8c" stroke-width="1"/><path d="M1729.2 824h3.6M1731 822.2v3.6" stroke="#8c8c8c" stroke-width="1"/><path d="M1737.2 824h3.6M1739 822.2v3.6" stroke="#8c8c8c" stroke-width="1"/><path d="M1725.2 830.4h3.6M1727 828.6v3.6" stroke="#8c8c8c" stroke-width="1"/><path d="M1733.2 830.4h3.6M1735 828.6v3.6" stroke="#8c8c8c" stroke-width="1"/><path d="M1729.2 836.8h3.6M1731 835v3.6" stroke="#8c8c8c" stroke-width="1"/><path d="M1737.2 836.8h3.6M1739 835v3.6" stroke="#8c8c8c" stroke-width="1"/><path d="M1725.2 843.2h3.6M1727 841.4v3.6" stroke="#8c8c8c" stroke-width="1"/><path d="M1721.2 849.6h3.6M1723 847.8v3.6" stroke="#8c8c8c" stroke-width="1"/><path d="M1729.2 849.6h3.6M1731 847.8v3.6" stroke="#8c8c8c" stroke-width="1"/><path d="M1737.2 849.6h3.6M1739 847.8v3.6" stroke="#8c8c8c" stroke-width="1"/><path d="M1725.2 856h3.6M1727 854.2v3.6" stroke="#8c8c8c" stroke-width="1"/><path d="M1721.2 862.4h3.6M1723 860.6v3.6" stroke="#8c8c8c" stroke-width="1"/><path d="M1737.2 862.4h3.6M1739 860.6v3.6" stroke="#8c8c8c" stroke-width="1"/><path d="M1725.2 868.8h3.6M1727 867v3.6" stroke="#8c8c8c" stroke-width="1"/><path d="M1733.2 868.8h3.6M1735 867v3.6" stroke="#8c8c8c" stroke-width="1"/><path d="M1721.2 875.2h3.6M1723 873.4v3.6" stroke="#8c8c8c" stroke-width="1"/><path d="M1737.2 875.2h3.6M1739 873.4v3.6" stroke="#8c8c8c" stroke-width="1"/><path d="M1725.2 881.6h3.6M1727 879.8v3.6" stroke="#8c8c8c" stroke-width="1"/><path d="M1733.2 881.6h3.6M1735 879.8v3.6" stroke="#8c8c8c" stroke-width="1"/><path d="M1721.2 888h3.6M1723 886.2v3.6" stroke="#8c8c8c" stroke-width="1"/><path d="M1729.2 888h3.6M1731 886.2v3.6" stroke="#8c8c8c" stroke-width="1"/><path d="M1724.2 902h3.6M1726 900.2v3.6" stroke="#8c8c8c" stroke-width="1"/><path d="M1742.2 902h3.6M1744 900.2v3.6" stroke="#8c8c8c" stroke-width="1"/><path d="M1692.7 909.2h3.6M1694.5 907.4v3.6" stroke="#8c8c8c" stroke-width="1"/><path d="M1710.7 909.2h3.6M1712.5 907.4v3.6" stroke="#8c8c8c" stroke-width="1"/><path d="M1728.7 909.2h3.6M1730.5 907.4v3.6" stroke="#8c8c8c" stroke-width="1"/><path d="M1733.2 916.4h3.6M1735 914.6v3.6" stroke="#8c8c8c" stroke-width="1"/><path d="M1742.2 916.4h3.6M1744 914.6v3.6" stroke="#8c8c8c" stroke-width="1"/><path d="M1692.7 923.6h3.6M1694.5 921.8v3.6" stroke="#8c8c8c" stroke-width="1"/><path d="M1701.7 923.6h3.6M1703.5 921.8v3.6" stroke="#8c8c8c" stroke-width="1"/><path d="M1728.7 923.6h3.6M1730.5 921.8v3.6" stroke="#8c8c8c" stroke-width="1"/><path d="M1697.2 930.8h3.6M1699 929v3.6" stroke="#8c8c8c" stroke-width="1"/><path d="M1706.2 930.8h3.6M1708 929v3.6" stroke="#8c8c8c" stroke-width="1"/><path d="M1724.2 930.8h3.6M1726 929v3.6" stroke="#8c8c8c" stroke-width="1"/><path d="M1733.2 930.8h3.6M1735 929v3.6" stroke="#8c8c8c" stroke-width="1"/><path d="M1710.7 938h3.6M1712.5 936.2v3.6" stroke="#8c8c8c" stroke-width="1"/><path d="M1728.7 938h3.6M1730.5 936.2v3.6" stroke="#8c8c8c" stroke-width="1"/><path d="M1688.2 945.2h3.6M1690 943.4v3.6" stroke="#8c8c8c" stroke-width="1"/><path d="M1715.2 945.2h3.6M1717 943.4v3.6" stroke="#8c8c8c" stroke-width="1"/><path d="M1692.7 952.4h3.6M1694.5 950.6v3.6" stroke="#8c8c8c" stroke-width="1"/><path d="M1710.7 952.4h3.6M1712.5 950.6v3.6" stroke="#8c8c8c" stroke-width="1"/><path d="M1728.7 952.4h3.6M1730.5 950.6v3.6" stroke="#8c8c8c" stroke-width="1"/><path d="M1737.7 952.4h3.6M1739.5 950.6v3.6" stroke="#8c8c8c" stroke-width="1"/><path d="M1635.7 914h3.6M1637.5 912.2v3.6" stroke="#8c8c8c" stroke-width="1"/><path d="M1651.7 914h3.6M1653.5 912.2v3.6" stroke="#8c8c8c" stroke-width="1"/><path d="M1663.7 920.4h3.6M1665.5 918.6v3.6" stroke="#8c8c8c" stroke-width="1"/><path d="M1671.7 920.4h3.6M1673.5 918.6v3.6" stroke="#8c8c8c" stroke-width="1"/><path d="M1643.7 926.8h3.6M1645.5 925v3.6" stroke="#8c8c8c" stroke-width="1"/><path d="M1651.7 926.8h3.6M1653.5 925v3.6" stroke="#8c8c8c" stroke-width="1"/><path d="M1659.7 926.8h3.6M1661.5 925v3.6" stroke="#8c8c8c" stroke-width="1"/><path d="M1683.7 926.8h3.6M1685.5 925v3.6" stroke="#8c8c8c" stroke-width="1"/><polyline points="1728.3,836.1 1731.3,832.1" fill="none" stroke="#b000b0" stroke-width="1"/><rect x="1727.3" y="835.1" width="2.4" height="2.4" fill="#c00000"/><polyline points="1731.6,848.6 1734.6,844.6" fill="none" stroke="#b000b0" stroke-width="1"/><rect x="1730.6" y="847.6" width="2.4" height="2.4" fill="#c00000"/><polyline points="1736.3,878.2 1739.3,874.2" fill="none" stroke="#b000b0" stroke-width="1"/><rect x="1735.3" y="877.2" width="2.4" height="2.4" fill="#c00000"/><polyline points="1729.9,845.3 1732.9,841.3" fill="none" stroke="#b000b0" stroke-width="1"/><rect x="1728.9" y="844.3" width="2.4" height="2.4" fill="#c00000"/><polyline points="1732,866.6 1735,862.6" fill="none" stroke="#b000b0" stroke-width="1"/><rect x="1731" y="865.6" width="2.4" height="2.4" fill="#c00000"/><polyline points="1737.2,860.2 1740.2,856.2" fill="none" stroke="#b000b0" stroke-width="1"/><rect x="1736.2" y="859.2" width="2.4" height="2.4" fill="#c00000"/><polyline points="1728.3,847.7 1731.3,843.7" fill="none" stroke="#b000b0" stroke-width="1"/><rect x="1727.3" y="846.7" width="2.4" height="2.4" fill="#c00000"/><polyline points="1738.3,857.3 1741.3,853.3" fill="none" stroke="#b000b0" stroke-width="1"/><rect x="1737.3" y="856.3" width="2.4" height="2.4" fill="#c00000"/><polyline points="1723.9,852.1 1726.9,848.1" fill="none" stroke="#b000b0" stroke-width="1"/><rect x="1722.9" y="851.1" width="2.4" height="2.4" fill="#c00000"/><polyline points="1727.3,865 1730.3,861" fill="none" stroke="#b000b0" stroke-width="1"/><rect x="1726.3" y="864" width="2.4" height="2.4" fill="#c00000"/><polyline points="1724.3,844.2 1727.3,840.2" fill="none" stroke="#b000b0" stroke-width="1"/><rect x="1723.3" y="843.2" width="2.4" height="2.4" fill="#c00000"/><polyline points="1724.7,855.1 1727.7,851.1" fill="none" stroke="#b000b0" stroke-width="1"/><rect x="1723.7" y="854.1" width="2.4" height="2.4" fill="#c00000"/><polyline points="1740.7,858.4 1743.7,854.4" fill="none" stroke="#b000b0" stroke-width="1"/><rect x="1739.7" y="857.4" width="2.4" height="2.4" fill="#c00000"/><polyline points="1729.9,879 1732.9,875" fill="none" stroke="#b000b0" stroke-width="1"/><rect x="1728.9" y="878" width="2.4" height="2.4" fill="#c00000"/><polyline points="1724.6,848.7 1727.6,844.7" fill="none" stroke="#b000b0" stroke-width="1"/><rect x="1723.6" y="847.7" width="2.4" height="2.4" fill="#c00000"/><polyline points="1737.6,830.3 1740.6,826.3" fill="none" stroke="#b000b0" stroke-width="1"/><rect x="1736.6" y="829.3" width="2.4" height="2.4" fill="#c00000"/><polyline points="1736.8,848.9 1739.8,844.9" fill="none" stroke="#b000b0" stroke-width="1"/><rect x="1735.8" y="847.9" width="2.4" height="2.4" fill="#c00000"/><polyline points="1723.3,843.2 1726.3,839.2" fill="none" stroke="#b000b0" stroke-width="1"/><rect x="1722.3" y="842.2" width="2.4" height="2.4" fill="#c00000"/><polyline points="1731.2,850.1 1734.2,846.1" fill="none" stroke="#b000b0" stroke-width="1"/><rect x="1730.2" y="849.1" width="2.4" height="2.4" fill="#c00000"/><polyline points="1732.3,832.8 1735.3,828.8" fill="none" stroke="#b000b0" stroke-width="1"/><rect x="1731.3" y="831.8" width="2.4" height="2.4" fill="#c00000"/><polyline points="1726.9,881.1 1729.9,877.1" fill="none" stroke="#b000b0" stroke-width="1"/><rect x="1725.9" y="880.1" width="2.4" height="2.4" fill="#c00000"/><polyline points="1731,854.8 1734,850.8" fill="none" stroke="#b000b0" stroke-width="1"/><rect x="1730" y="853.8" width="2.4" height="2.4" fill="#c00000"/><polyline points="1724.5,844.7 1727.5,840.7" fill="none" stroke="#b000b0" stroke-width="1"/><rect x="1723.5" y="843.7" width="2.4" height="2.4" fill="#c00000"/><polyline points="1740.2,866.1 1743.2,862.1" fill="none" stroke="#b000b0" stroke-width="1"/><rect x="1739.2" y="865.1" width="2.4" height="2.4" fill="#c00000"/><polyline points="1732.1,832.8 1735.1,828.8" fill="none" stroke="#b000b0" stroke-width="1"/><rect x="1731.1" y="831.8" width="2.4" height="2.4" fill="#c00000"/><polyline points="1730.1,870.9 1733.1,866.9" fill="none" stroke="#b000b0" stroke-width="1"/><rect x="1729.1" y="869.9" width="2.4" height="2.4" fill="#c00000"/><polyline points="1730.8,861.2 1733.8,857.2" fill="none" stroke="#b000b0" stroke-width="1"/><rect x="1729.8" y="860.2" width="2.4" height="2.4" fill="#c00000"/><polyline points="1739.2,863.9 1742.2,859.9" fill="none" stroke="#b000b0" stroke-width="1"/><rect x="1738.2" y="862.9" width="2.4" height="2.4" fill="#c00000"/><polyline points="1734.4,831.9 1737.4,827.9" fill="none" stroke="#b000b0" stroke-width="1"/><rect x="1733.4" y="830.9" width="2.4" height="2.4" fill="#c00000"/><polyline points="1723.4,870.4 1726.4,866.4" fill="none" stroke="#b000b0" stroke-width="1"/><rect x="1722.4" y="869.4" width="2.4" height="2.4" fill="#c00000"/><polyline points="1730.4,875.9 1733.4,871.9" fill="none" stroke="#b000b0" stroke-width="1"/><rect x="1729.4" y="874.9" width="2.4" height="2.4" fill="#c00000"/><polyline points="1737.9,878 1740.9,874" fill="none" stroke="#b000b0" stroke-width="1"/><rect x="1736.9" y="877" width="2.4" height="2.4" fill="#c00000"/><polyline points="1729.8,882.4 1732.8,878.4" fill="none" stroke="#b000b0" stroke-width="1"/><rect x="1728.8" y="881.4" width="2.4" height="2.4" fill="#c00000"/><polyline points="1736.6,876.8 1739.6,872.8" fill="none" stroke="#b000b0" stroke-width="1"/><rect x="1735.6" y="875.8" width="2.4" height="2.4" fill="#c00000"/><polyline points="1725.7,871 1728.7,867" fill="none" stroke="#b000b0" stroke-width="1"/><rect x="1724.7" y="870" width="2.4" height="2.4" fill="#c00000"/><polyline points="1730.6,881 1733.6,877" fill="none" stroke="#b000b0" stroke-width="1"/><rect x="1729.6" y="880" width="2.4" height="2.4" fill="#c00000"/><polyline points="1740.9,841.4 1743.9,837.4" fill="none" stroke="#b000b0" stroke-width="1"/><rect x="1739.9" y="840.4" width="2.4" height="2.4" fill="#c00000"/><polyline points="1730.6,844.2 1733.6,840.2" fill="none" stroke="#b000b0" stroke-width="1"/><rect x="1729.6" y="843.2" width="2.4" height="2.4" fill="#c00000"/><polyline points="1731.4,845 1734.4,841" fill="none" stroke="#b000b0" stroke-width="1"/><rect x="1730.4" y="844" width="2.4" height="2.4" fill="#c00000"/><polyline points="1735,836.5 1738,832.5" fill="none" stroke="#b000b0" stroke-width="1"/><rect x="1734" y="835.5" width="2.4" height="2.4" fill="#c00000"/><polygon points="1616.9,923.9 1633.3,923.9 1633.3,1160.6 1616.9,1160.6" fill="#ff00ff"/><rect x="1619.2" y="1032.5" width="2.4" height="2.4" fill="#8c0040"/><rect x="1617.9" y="1014.9" width="2.4" height="2.4" fill="#8c0040"/><rect x="1629.5" y="1130.7" width="2.4" height="2.4" fill="#8c0040"/><rect x="1619.6" y="931.6" width="2.4" height="2.4" fill="#8c0040"/><rect x="1628.5" y="1148.1" width="2.4" height="2.4" fill="#8c0040"/><rect x="1625.3" y="958.7" width="2.4" height="2.4" fill="#8c0040"/><rect x="1620.2" y="1138.7" width="2.4" height="2.4" fill="#8c0040"/><rect x="1630" y="934.5" width="2.4" height="2.4" fill="#8c0040"/><rect x="1619.4" y="1025.9" width="2.4" height="2.4" fill="#8c0040"/><rect x="1620.6" y="1100.5" width="2.4" height="2.4" fill="#8c0040"/><rect x="1622.1" y="1105.4" width="2.4" height="2.4" fill="#8c0040"/><rect x="1619" y="1046.4" width="2.4" height="2.4" fill="#8c0040"/><rect x="1630.6" y="1088.6" width="2.4" height="2.4" fill="#8c0040"/><rect x="1618.1" y="952.9" width="2.4" height="2.4" fill="#8c0040"/><rect x="1625.9" y="1013.5" width="2.4" height="2.4" fill="#8c0040"/><rect x="1622" y="1037.1" width="2.4" height="2.4" fill="#8c0040"/><rect x="1625" y="1149.2" width="2.4" height="2.4" fill="#8c0040"/><rect x="1620.2" y="1058" width="2.4" height="2.4" fill="#8c0040"/><rect x="1620.5" y="1052.6" width="2.4" height="2.4" fill="#8c0040"/><rect x="1627.1" y="958.1" width="2.4" height="2.4" fill="#8c0040"/><polyline points="1636.8,947.3 1636.8,1160.6 1645,1167.6 1862.9,1167.6" fill="none" stroke="#8c8c00" stroke-width="2.2"/><polyline points="1639.1,947.3 1639.1,1158.3 1647.3,1165.8 1862.9,1165.8" fill="none" stroke="#00ffff" stroke-width="1.2"/><polyline points="1616.9,1172.3 1862.9,1172.3" fill="none" stroke="#00ffff" stroke-width="1.5"/><polyline points="1614.5,1174.7 1780.9,1174.7 1795,1179.4 1862.9,1179.4" fill="none" stroke="#00ffff" stroke-width="1.5"/><polygon points="1785.6,1178.2 1825.4,1178.2 1825.4,1184 1785.6,1184" fill="#00ffff"/><polyline points="1626.2,1188.7 1710.6,1188.7 1734,1195.8 1804.4,1195.8" fill="none" stroke="#8c8c00" stroke-width="3"/><polyline points="1705.9,1216.8 1715.3,1221.5 1776.2,1221.5 1785.6,1212.2 1862.9,1212.2" fill="none" stroke="#8c8c00" stroke-width="3"/><polyline points="1570,1226.2 1862.9,1226.2" fill="none" stroke="#00ffff" stroke-width="1.5"/><polyline points="1570,1221.5 1705.9,1221.5" fill="none" stroke="#00ffff" stroke-width="1.2"/><polyline points="1663.7,1207.5 1780.9,1207.5 1804.4,1198.1 1862.9,1198.1" fill="none" stroke="#00ffff" stroke-width="1.2"/><polyline points="1570,1230.9 1790.3,1230.9 1795,1226.2 1862.9,1226.2" fill="none" stroke="#ff00ff" stroke-width="1.3"/><polyline points="1818.4,1146.5 1827.8,1146.5 1862.9,1146.5" fill="none" stroke="#ff00ff" stroke-width="1.3"/><polyline points="1734,1193.4 1734,1202.8" fill="none" stroke="#ff00ff" stroke-width="1"/><path d="M1638.5 1151.2h3.6M1640.3 1149.4v3.6" stroke="#8c8c8c" stroke-width="1"/><path d="M1654.5 1151.2h3.6M1656.3 1149.4v3.6" stroke="#8c8c8c" stroke-width="1"/><path d="M1670.5 1151.2h3.6M1672.3 1149.4v3.6" stroke="#8c8c8c" stroke-width="1"/><path d="M1678.5 1151.2h3.6M1680.3 1149.4v3.6" stroke="#8c8c8c" stroke-width="1"/><path d="M1686.5 1151.2h3.6M1688.3 1149.4v3.6" stroke="#8c8c8c" stroke-width="1"/><path d="M1702.5 1151.2h3.6M1704.3 1149.4v3.6" stroke="#8c8c8c" stroke-width="1"/><path d="M1734.5 1151.2h3.6M1736.3 1149.4v3.6" stroke="#8c8c8c" stroke-width="1"/><path d="M1742.5 1151.2h3.6M1744.3 1149.4v3.6" stroke="#8c8c8c" stroke-width="1"/><path d="M1758.5 1151.2h3.6M1760.3 1149.4v3.6" stroke="#8c8c8c" stroke-width="1"/><path d="M1782.5 1151.2h3.6M1784.3 1149.4v3.6" stroke="#8c8c8c" stroke-width="1"/><path d="M1798.5 1151.2h3.6M1800.3 1149.4v3.6" stroke="#8c8c8c" stroke-width="1"/><path d="M1806.5 1151.2h3.6M1808.3 1149.4v3.6" stroke="#8c8c8c" stroke-width="1"/><path d="M1822.5 1151.2h3.6M1824.3 1149.4v3.6" stroke="#8c8c8c" stroke-width="1"/><path d="M1838.5 1151.2h3.6M1840.3 1149.4v3.6" stroke="#8c8c8c" stroke-width="1"/><path d="M1846.5 1151.2h3.6M1848.3 1149.4v3.6" stroke="#8c8c8c" stroke-width="1"/><path d="M1854.5 1151.2h3.6M1856.3 1149.4v3.6" stroke="#8c8c8c" stroke-width="1"/><path d="M1650.5 1157.6h3.6M1652.3 1155.8v3.6" stroke="#8c8c8c" stroke-width="1"/><path d="M1674.5 1157.6h3.6M1676.3 1155.8v3.6" stroke="#8c8c8c" stroke-width="1"/><path d="M1682.5 1157.6h3.6M1684.3 1155.8v3.6" stroke="#8c8c8c" stroke-width="1"/><path d="M1698.5 1157.6h3.6M1700.3 1155.8v3.6" stroke="#8c8c8c" stroke-width="1"/><path d="M1714.5 1157.6h3.6M1716.3 1155.8v3.6" stroke="#8c8c8c" stroke-width="1"/><path d="M1722.5 1157.6h3.6M1724.3 1155.8v3.6" stroke="#8c8c8c" stroke-width="1"/><path d="M1730.5 1157.6h3.6M1732.3 1155.8v3.6" stroke="#8c8c8c" stroke-width="1"/><path d="M1754.5 1157.6h3.6M1756.3 1155.8v3.6" stroke="#8c8c8c" stroke-width="1"/><path d="M1762.5 1157.6h3.6M1764.3 1155.8v3.6" stroke="#8c8c8c" stroke-width="1"/><path d="M1770.5 1157.6h3.6M1772.3 1155.8v3.6" stroke="#8c8c8c" stroke-width="1"/><path d="M1794.5 1157.6h3.6M1796.3 1155.8v3.6" stroke="#8c8c8c" stroke-width="1"/><path d="M1802.5 1157.6h3.6M1804.3 1155.8v3.6" stroke="#8c8c8c" stroke-width="1"/><path d="M1810.5 1157.6h3.6M1812.3 1155.8v3.6" stroke="#8c8c8c" stroke-width="1"/><path d="M1818.5 1157.6h3.6M1820.3 1155.8v3.6" stroke="#8c8c8c" stroke-width="1"/><path d="M1826.5 1157.6h3.6M1828.3 1155.8v3.6" stroke="#8c8c8c" stroke-width="1"/><path d="M1842.5 1157.6h3.6M1844.3 1155.8v3.6" stroke="#8c8c8c" stroke-width="1"/><path d="M1850.5 1157.6h3.6M1852.3 1155.8v3.6" stroke="#8c8c8c" stroke-width="1"/><path d="M1662.5 1164h3.6M1664.3 1162.2v3.6" stroke="#8c8c8c" stroke-width="1"/><path d="M1670.5 1164h3.6M1672.3 1162.2v3.6" stroke="#8c8c8c" stroke-width="1"/><path d="M1678.5 1164h3.6M1680.3 1162.2v3.6" stroke="#8c8c8c" stroke-width="1"/><path d="M1710.5 1164h3.6M1712.3 1162.2v3.6" stroke="#8c8c8c" stroke-width="1"/><path d="M1718.5 1164h3.6M1720.3 1162.2v3.6" stroke="#8c8c8c" stroke-width="1"/><path d="M1734.5 1164h3.6M1736.3 1162.2v3.6" stroke="#8c8c8c" stroke-width="1"/><path d="M1758.5 1164h3.6M1760.3 1162.2v3.6" stroke="#8c8c8c" stroke-width="1"/><path d="M1766.5 1164h3.6M1768.3 1162.2v3.6" stroke="#8c8c8c" stroke-width="1"/><path d="M1774.5 1164h3.6M1776.3 1162.2v3.6" stroke="#8c8c8c" stroke-width="1"/><path d="M1782.5 1164h3.6M1784.3 1162.2v3.6" stroke="#8c8c8c" stroke-width="1"/><path d="M1814.5 1164h3.6M1816.3 1162.2v3.6" stroke="#8c8c8c" stroke-width="1"/><path d="M1822.5 1164h3.6M1824.3 1162.2v3.6" stroke="#8c8c8c" stroke-width="1"/><path d="M1830.5 1164h3.6M1832.3 1162.2v3.6" stroke="#8c8c8c" stroke-width="1"/><path d="M1846.5 1164h3.6M1848.3 1162.2v3.6" stroke="#8c8c8c" stroke-width="1"/><path d="M1854.5 1164h3.6M1856.3 1162.2v3.6" stroke="#8c8c8c" stroke-width="1"/><path d="M1658.5 1170.4h3.6M1660.3 1168.6v3.6" stroke="#8c8c8c" stroke-width="1"/><path d="M1674.5 1170.4h3.6M1676.3 1168.6v3.6" stroke="#8c8c8c" stroke-width="1"/><path d="M1690.5 1170.4h3.6M1692.3 1168.6v3.6" stroke="#8c8c8c" stroke-width="1"/><path d="M1698.5 1170.4h3.6M1700.3 1168.6v3.6" stroke="#8c8c8c" stroke-width="1"/><path d="M1706.5 1170.4h3.6M1708.3 1168.6v3.6" stroke="#8c8c8c" stroke-width="1"/><path d="M1714.5 1170.4h3.6M1716.3 1168.6v3.6" stroke="#8c8c8c" stroke-width="1"/><path d="M1738.5 1170.4h3.6M1740.3 1168.6v3.6" stroke="#8c8c8c" stroke-width="1"/><path d="M1746.5 1170.4h3.6M1748.3 1168.6v3.6" stroke="#8c8c8c" stroke-width="1"/><path d="M1754.5 1170.4h3.6M1756.3 1168.6v3.6" stroke="#8c8c8c" stroke-width="1"/><path d="M1770.5 1170.4h3.6M1772.3 1168.6v3.6" stroke="#8c8c8c" stroke-width="1"/><path d="M1778.5 1170.4h3.6M1780.3 1168.6v3.6" stroke="#8c8c8c" stroke-width="1"/><path d="M1802.5 1170.4h3.6M1804.3 1168.6v3.6" stroke="#8c8c8c" stroke-width="1"/><path d="M1818.5 1170.4h3.6M1820.3 1168.6v3.6" stroke="#8c8c8c" stroke-width="1"/><path d="M1834.5 1170.4h3.6M1836.3 1168.6v3.6" stroke="#8c8c8c" stroke-width="1"/><path d="M1858.5 1170.4h3.6M1860.3 1168.6v3.6" stroke="#8c8c8c" stroke-width="1"/><path d="M1638.5 1176.8h3.6M1640.3 1175v3.6" stroke="#8c8c8c" stroke-width="1"/><path d="M1646.5 1176.8h3.6M1648.3 1175v3.6" stroke="#8c8c8c" stroke-width="1"/><path d="M1662.5 1176.8h3.6M1664.3 1175v3.6" stroke="#8c8c8c" stroke-width="1"/><path d="M1678.5 1176.8h3.6M1680.3 1175v3.6" stroke="#8c8c8c" stroke-width="1"/><path d="M1702.5 1176.8h3.6M1704.3 1175v3.6" stroke="#8c8c8c" stroke-width="1"/><path d="M1710.5 1176.8h3.6M1712.3 1175v3.6" stroke="#8c8c8c" stroke-width="1"/><path d="M1742.5 1176.8h3.6M1744.3 1175v3.6" stroke="#8c8c8c" stroke-width="1"/><path d="M1774.5 1176.8h3.6M1776.3 1175v3.6" stroke="#8c8c8c" stroke-width="1"/><path d="M1782.5 1176.8h3.6M1784.3 1175v3.6" stroke="#8c8c8c" stroke-width="1"/><path d="M1798.5 1176.8h3.6M1800.3 1175v3.6" stroke="#8c8c8c" stroke-width="1"/><path d="M1806.5 1176.8h3.6M1808.3 1175v3.6" stroke="#8c8c8c" stroke-width="1"/><path d="M1814.5 1176.8h3.6M1816.3 1175v3.6" stroke="#8c8c8c" stroke-width="1"/><path d="M1846.5 1176.8h3.6M1848.3 1175v3.6" stroke="#8c8c8c" stroke-width="1"/><path d="M1854.5 1176.8h3.6M1856.3 1175v3.6" stroke="#8c8c8c" stroke-width="1"/><path d="M1642.5 1183.2h3.6M1644.3 1181.4v3.6" stroke="#8c8c8c" stroke-width="1"/><path d="M1650.5 1183.2h3.6M1652.3 1181.4v3.6" stroke="#8c8c8c" stroke-width="1"/><path d="M1658.5 1183.2h3.6M1660.3 1181.4v3.6" stroke="#8c8c8c" stroke-width="1"/><path d="M1666.5 1183.2h3.6M1668.3 1181.4v3.6" stroke="#8c8c8c" stroke-width="1"/><path d="M1682.5 1183.2h3.6M1684.3 1181.4v3.6" stroke="#8c8c8c" stroke-width="1"/><path d="M1754.5 1183.2h3.6M1756.3 1181.4v3.6" stroke="#8c8c8c" stroke-width="1"/><path d="M1762.5 1183.2h3.6M1764.3 1181.4v3.6" stroke="#8c8c8c" stroke-width="1"/><path d="M1770.5 1183.2h3.6M1772.3 1181.4v3.6" stroke="#8c8c8c" stroke-width="1"/><path d="M1778.5 1183.2h3.6M1780.3 1181.4v3.6" stroke="#8c8c8c" stroke-width="1"/><path d="M1786.5 1183.2h3.6M1788.3 1181.4v3.6" stroke="#8c8c8c" stroke-width="1"/><path d="M1794.5 1183.2h3.6M1796.3 1181.4v3.6" stroke="#8c8c8c" stroke-width="1"/><path d="M1810.5 1183.2h3.6M1812.3 1181.4v3.6" stroke="#8c8c8c" stroke-width="1"/><path d="M1818.5 1183.2h3.6M1820.3 1181.4v3.6" stroke="#8c8c8c" stroke-width="1"/><path d="M1662.5 1189.6h3.6M1664.3 1187.8v3.6" stroke="#8c8c8c" stroke-width="1"/><path d="M1686.5 1189.6h3.6M1688.3 1187.8v3.6" stroke="#8c8c8c" stroke-width="1"/><path d="M1694.5 1189.6h3.6M1696.3 1187.8v3.6" stroke="#8c8c8c" stroke-width="1"/><path d="M1702.5 1189.6h3.6M1704.3 1187.8v3.6" stroke="#8c8c8c" stroke-width="1"/><path d="M1710.5 1189.6h3.6M1712.3 1187.8v3.6" stroke="#8c8c8c" stroke-width="1"/><path d="M1718.5 1189.6h3.6M1720.3 1187.8v3.6" stroke="#8c8c8c" stroke-width="1"/><path d="M1726.5 1189.6h3.6M1728.3 1187.8v3.6" stroke="#8c8c8c" stroke-width="1"/><path d="M1734.5 1189.6h3.6M1736.3 1187.8v3.6" stroke="#8c8c8c" stroke-width="1"/><path d="M1758.5 1189.6h3.6M1760.3 1187.8v3.6" stroke="#8c8c8c" stroke-width="1"/><path d="M1766.5 1189.6h3.6M1768.3 1187.8v3.6" stroke="#8c8c8c" stroke-width="1"/><path d="M1790.5 1189.6h3.6M1792.3 1187.8v3.6" stroke="#8c8c8c" stroke-width="1"/><path d="M1822.5 1189.6h3.6M1824.3 1187.8v3.6" stroke="#8c8c8c" stroke-width="1"/><path d="M1838.5 1189.6h3.6M1840.3 1187.8v3.6" stroke="#8c8c8c" stroke-width="1"/><path d="M1846.5 1189.6h3.6M1848.3 1187.8v3.6" stroke="#8c8c8c" stroke-width="1"/><path d="M1650.5 1196h3.6M1652.3 1194.2v3.6" stroke="#8c8c8c" stroke-width="1"/><path d="M1658.5 1196h3.6M1660.3 1194.2v3.6" stroke="#8c8c8c" stroke-width="1"/><path d="M1666.5 1196h3.6M1668.3 1194.2v3.6" stroke="#8c8c8c" stroke-width="1"/><path d="M1682.5 1196h3.6M1684.3 1194.2v3.6" stroke="#8c8c8c" stroke-width="1"/><path d="M1698.5 1196h3.6M1700.3 1194.2v3.6" stroke="#8c8c8c" stroke-width="1"/><path d="M1706.5 1196h3.6M1708.3 1194.2v3.6" stroke="#8c8c8c" stroke-width="1"/><path d="M1714.5 1196h3.6M1716.3 1194.2v3.6" stroke="#8c8c8c" stroke-width="1"/><path d="M1722.5 1196h3.6M1724.3 1194.2v3.6" stroke="#8c8c8c" stroke-width="1"/><path d="M1730.5 1196h3.6M1732.3 1194.2v3.6" stroke="#8c8c8c" stroke-width="1"/><path d="M1738.5 1196h3.6M1740.3 1194.2v3.6" stroke="#8c8c8c" stroke-width="1"/><path d="M1746.5 1196h3.6M1748.3 1194.2v3.6" stroke="#8c8c8c" stroke-width="1"/><path d="M1762.5 1196h3.6M1764.3 1194.2v3.6" stroke="#8c8c8c" stroke-width="1"/><path d="M1770.5 1196h3.6M1772.3 1194.2v3.6" stroke="#8c8c8c" stroke-width="1"/><path d="M1786.5 1196h3.6M1788.3 1194.2v3.6" stroke="#8c8c8c" stroke-width="1"/><path d="M1794.5 1196h3.6M1796.3 1194.2v3.6" stroke="#8c8c8c" stroke-width="1"/><path d="M1802.5 1196h3.6M1804.3 1194.2v3.6" stroke="#8c8c8c" stroke-width="1"/><path d="M1818.5 1196h3.6M1820.3 1194.2v3.6" stroke="#8c8c8c" stroke-width="1"/><path d="M1826.5 1196h3.6M1828.3 1194.2v3.6" stroke="#8c8c8c" stroke-width="1"/><path d="M1834.5 1196h3.6M1836.3 1194.2v3.6" stroke="#8c8c8c" stroke-width="1"/><path d="M1842.5 1196h3.6M1844.3 1194.2v3.6" stroke="#8c8c8c" stroke-width="1"/><path d="M1850.5 1196h3.6M1852.3 1194.2v3.6" stroke="#8c8c8c" stroke-width="1"/><path d="M1858.5 1196h3.6M1860.3 1194.2v3.6" stroke="#8c8c8c" stroke-width="1"/><path d="M1646.5 1202.4h3.6M1648.3 1200.6v3.6" stroke="#8c8c8c" stroke-width="1"/><path d="M1654.5 1202.4h3.6M1656.3 1200.6v3.6" stroke="#8c8c8c" stroke-width="1"/><path d="M1662.5 1202.4h3.6M1664.3 1200.6v3.6" stroke="#8c8c8c" stroke-width="1"/><path d="M1718.5 1202.4h3.6M1720.3 1200.6v3.6" stroke="#8c8c8c" stroke-width="1"/><path d="M1734.5 1202.4h3.6M1736.3 1200.6v3.6" stroke="#8c8c8c" stroke-width="1"/><path d="M1766.5 1202.4h3.6M1768.3 1200.6v3.6" stroke="#8c8c8c" stroke-width="1"/><path d="M1774.5 1202.4h3.6M1776.3 1200.6v3.6" stroke="#8c8c8c" stroke-width="1"/><path d="M1782.5 1202.4h3.6M1784.3 1200.6v3.6" stroke="#8c8c8c" stroke-width="1"/><path d="M1790.5 1202.4h3.6M1792.3 1200.6v3.6" stroke="#8c8c8c" stroke-width="1"/><path d="M1798.5 1202.4h3.6M1800.3 1200.6v3.6" stroke="#8c8c8c" stroke-width="1"/><path d="M1814.5 1202.4h3.6M1816.3 1200.6v3.6" stroke="#8c8c8c" stroke-width="1"/><path d="M1838.5 1202.4h3.6M1840.3 1200.6v3.6" stroke="#8c8c8c" stroke-width="1"/><path d="M1650.5 1208.8h3.6M1652.3 1207v3.6" stroke="#8c8c8c" stroke-width="1"/><path d="M1658.5 1208.8h3.6M1660.3 1207v3.6" stroke="#8c8c8c" stroke-width="1"/><path d="M1666.5 1208.8h3.6M1668.3 1207v3.6" stroke="#8c8c8c" stroke-width="1"/><path d="M1674.5 1208.8h3.6M1676.3 1207v3.6" stroke="#8c8c8c" stroke-width="1"/><path d="M1690.5 1208.8h3.6M1692.3 1207v3.6" stroke="#8c8c8c" stroke-width="1"/><path d="M1698.5 1208.8h3.6M1700.3 1207v3.6" stroke="#8c8c8c" stroke-width="1"/><path d="M1706.5 1208.8h3.6M1708.3 1207v3.6" stroke="#8c8c8c" stroke-width="1"/><path d="M1714.5 1208.8h3.6M1716.3 1207v3.6" stroke="#8c8c8c" stroke-width="1"/><path d="M1746.5 1208.8h3.6M1748.3 1207v3.6" stroke="#8c8c8c" stroke-width="1"/><path d="M1754.5 1208.8h3.6M1756.3 1207v3.6" stroke="#8c8c8c" stroke-width="1"/><path d="M1762.5 1208.8h3.6M1764.3 1207v3.6" stroke="#8c8c8c" stroke-width="1"/><path d="M1818.5 1208.8h3.6M1820.3 1207v3.6" stroke="#8c8c8c" stroke-width="1"/><path d="M1826.5 1208.8h3.6M1828.3 1207v3.6" stroke="#8c8c8c" stroke-width="1"/><path d="M1834.5 1208.8h3.6M1836.3 1207v3.6" stroke="#8c8c8c" stroke-width="1"/><path d="M1842.5 1208.8h3.6M1844.3 1207v3.6" stroke="#8c8c8c" stroke-width="1"/><path d="M1646.5 1215.2h3.6M1648.3 1213.4v3.6" stroke="#8c8c8c" stroke-width="1"/><path d="M1678.5 1215.2h3.6M1680.3 1213.4v3.6" stroke="#8c8c8c" stroke-width="1"/><path d="M1694.5 1215.2h3.6M1696.3 1213.4v3.6" stroke="#8c8c8c" stroke-width="1"/><path d="M1702.5 1215.2h3.6M1704.3 1213.4v3.6" stroke="#8c8c8c" stroke-width="1"/><path d="M1718.5 1215.2h3.6M1720.3 1213.4v3.6" stroke="#8c8c8c" stroke-width="1"/><path d="M1734.5 1215.2h3.6M1736.3 1213.4v3.6" stroke="#8c8c8c" stroke-width="1"/><path d="M1750.5 1215.2h3.6M1752.3 1213.4v3.6" stroke="#8c8c8c" stroke-width="1"/><path d="M1766.5 1215.2h3.6M1768.3 1213.4v3.6" stroke="#8c8c8c" stroke-width="1"/><path d="M1782.5 1215.2h3.6M1784.3 1213.4v3.6" stroke="#8c8c8c" stroke-width="1"/><path d="M1790.5 1215.2h3.6M1792.3 1213.4v3.6" stroke="#8c8c8c" stroke-width="1"/><path d="M1798.5 1215.2h3.6M1800.3 1213.4v3.6" stroke="#8c8c8c" stroke-width="1"/><path d="M1814.5 1215.2h3.6M1816.3 1213.4v3.6" stroke="#8c8c8c" stroke-width="1"/><path d="M1838.5 1215.2h3.6M1840.3 1213.4v3.6" stroke="#8c8c8c" stroke-width="1"/><path d="M1846.5 1215.2h3.6M1848.3 1213.4v3.6" stroke="#8c8c8c" stroke-width="1"/><path d="M1854.5 1215.2h3.6M1856.3 1213.4v3.6" stroke="#8c8c8c" stroke-width="1"/><path d="M1642.5 1221.6h3.6M1644.3 1219.8v3.6" stroke="#8c8c8c" stroke-width="1"/><path d="M1650.5 1221.6h3.6M1652.3 1219.8v3.6" stroke="#8c8c8c" stroke-width="1"/><path d="M1658.5 1221.6h3.6M1660.3 1219.8v3.6" stroke="#8c8c8c" stroke-width="1"/><path d="M1666.5 1221.6h3.6M1668.3 1219.8v3.6" stroke="#8c8c8c" stroke-width="1"/><path d="M1682.5 1221.6h3.6M1684.3 1219.8v3.6" stroke="#8c8c8c" stroke-width="1"/><path d="M1690.5 1221.6h3.6M1692.3 1219.8v3.6" stroke="#8c8c8c" stroke-width="1"/><path d="M1706.5 1221.6h3.6M1708.3 1219.8v3.6" stroke="#8c8c8c" stroke-width="1"/><path d="M1730.5 1221.6h3.6M1732.3 1219.8v3.6" stroke="#8c8c8c" stroke-width="1"/><path d="M1738.5 1221.6h3.6M1740.3 1219.8v3.6" stroke="#8c8c8c" stroke-width="1"/><path d="M1802.5 1221.6h3.6M1804.3 1219.8v3.6" stroke="#8c8c8c" stroke-width="1"/><path d="M1810.5 1221.6h3.6M1812.3 1219.8v3.6" stroke="#8c8c8c" stroke-width="1"/><path d="M1818.5 1221.6h3.6M1820.3 1219.8v3.6" stroke="#8c8c8c" stroke-width="1"/><path d="M1834.5 1221.6h3.6M1836.3 1219.8v3.6" stroke="#8c8c8c" stroke-width="1"/><path d="M1858.5 1221.6h3.6M1860.3 1219.8v3.6" stroke="#8c8c8c" stroke-width="1"/><rect x="1584.1" y="968.4" width="10" height="8" fill="none" stroke="#a8b098" stroke-width="1"/><rect x="1585.6" y="969.9" width="3.5" height="5" fill="#800000"/><rect x="1589.1" y="969.9" width="3.5" height="5" fill="#800000"/><rect x="1598.1" y="975.5" width="14" height="14" fill="none" stroke="#a8b098" stroke-width="1"/><rect x="1599.6" y="977" width="4.9" height="11" fill="#800000"/><rect x="1605.7" y="977" width="4.9" height="11" fill="#800000"/><rect x="1598.1" y="991.9" width="14" height="14" fill="none" stroke="#a8b098" stroke-width="1"/><rect x="1599.6" y="993.4" width="4.9" height="11" fill="#800000"/><rect x="1605.7" y="993.4" width="4.9" height="11" fill="#800000"/><rect x="1584.1" y="1062.2" width="14" height="12" fill="none" stroke="#a8b098" stroke-width="1"/><rect x="1585.6" y="1063.7" width="4.9" height="9" fill="#800000"/><rect x="1591.7" y="1063.7" width="4.9" height="9" fill="#800000"/><rect x="1584.1" y="1076.2" width="14" height="12" fill="none" stroke="#a8b098" stroke-width="1"/><rect x="1585.6" y="1077.7" width="4.9" height="9" fill="#800000"/><rect x="1591.7" y="1077.7" width="4.9" height="9" fill="#800000"/><rect x="1584.1" y="1127.8" width="14" height="30" fill="none" stroke="#a8b098" stroke-width="1"/><rect x="1585.6" y="1129.3" width="4.9" height="27" fill="#800000"/><rect x="1591.7" y="1129.3" width="4.9" height="27" fill="#800000"/><rect x="1584.1" y="1153.6" width="14" height="14" fill="none" stroke="#a8b098" stroke-width="1"/><rect x="1585.6" y="1155.1" width="4.9" height="11" fill="#800000"/><rect x="1591.7" y="1155.1" width="4.9" height="11" fill="#800000"/><rect x="1584.1" y="1167.6" width="14" height="14" fill="none" stroke="#a8b098" stroke-width="1"/><rect x="1585.6" y="1169.1" width="4.9" height="11" fill="#800000"/><rect x="1591.7" y="1169.1" width="4.9" height="11" fill="#800000"/><rect x="1600.5" y="1005.9" width="12" height="10" fill="none" stroke="#a8b098" stroke-width="1"/><rect x="1602" y="1007.4" width="4.2" height="7" fill="#800000"/><rect x="1606.8" y="1007.4" width="4.2" height="7" fill="#800000"/><rect x="1600.5" y="1020" width="10" height="10" fill="none" stroke="#a8b098" stroke-width="1"/><rect x="1602" y="1021.5" width="3.5" height="7" fill="#800000"/><rect x="1605.5" y="1021.5" width="3.5" height="7" fill="#800000"/><rect x="1584.1" y="1099.7" width="12" height="10" fill="none" stroke="#a8b098" stroke-width="1"/><rect x="1585.6" y="1101.2" width="4.2" height="7" fill="#800000"/><rect x="1590.4" y="1101.2" width="4.2" height="7" fill="#800000"/><rect x="1607.5" y="1102" width="10" height="10" fill="none" stroke="#a8b098" stroke-width="1"/><rect x="1609" y="1103.5" width="3.5" height="7" fill="#800000"/><rect x="1612.5" y="1103.5" width="3.5" height="7" fill="#800000"/><rect x="1607.5" y="1116.1" width="10" height="10" fill="none" stroke="#a8b098" stroke-width="1"/><rect x="1609" y="1117.6" width="3.5" height="7" fill="#800000"/><rect x="1612.5" y="1117.6" width="3.5" height="7" fill="#800000"/><polyline points="1570,1198.1 1605.2,1198.1" fill="none" stroke="#a8b098" stroke-width="3"/><polyline points="1602.8,916.9 1602.8,1080.9" fill="none" stroke="#ff8c00" stroke-width="1"/><polyline points="1593.4,940.3 1593.4,1034" fill="none" stroke="#00ffff" stroke-width="1.3"/><polyline points="1584.1,923.9 1612.2,923.9" fill="none" stroke="#00ffff" stroke-width="1.3"/><polyline points="1574,1153.7 1570,1159.7" fill="none" stroke="#ff8c00" stroke-width="1"/><polyline points="1610.3,961.5 1610.3,961.5" fill="none" stroke="#ff8c00" stroke-width="1"/><polyline points="1607.6,1169.3 1613.6,1175.3" fill="none" stroke="#8c8c00" stroke-width="1"/><polyline points="1612.8,1205.1 1618.8,1211.1" fill="none" stroke="#8c8c00" stroke-width="1"/><polyline points="1594.9,1120.2 1590.9,1126.2" fill="none" stroke="#00ffff" stroke-width="1"/><polyline points="1615.5,1067.2 1615.5,1073.2" fill="none" stroke="#ff8c00" stroke-width="1"/><polyline points="1606.1,1095.9 1612.1,1101.9" fill="none" stroke="#ff8c00" stroke-width="1"/><polyline points="1579.5,1084 1579.5,1090" fill="none" stroke="#b000b0" stroke-width="1"/><polyline points="1580.8,1120.8 1580.8,1120.8" fill="none" stroke="#8c8c00" stroke-width="1"/><polyline points="1612,1062.1 1612,1068.1" fill="none" stroke="#b000b0" stroke-width="1"/><polyline points="1580.1,1049.8 1580.1,1049.8" fill="none" stroke="#00ffff" stroke-width="1"/><polyline points="1581.1,1004.3 1587.1,1010.3" fill="none" stroke="#00ffff" stroke-width="1"/><polyline points="1616.5,948.6 1612.5,954.6" fill="none" stroke="#b000b0" stroke-width="1"/><polyline points="1575.5,1076.4 1575.5,1076.4" fill="none" stroke="#00ffff" stroke-width="1"/><polyline points="1601.3,1180.3 1607.3,1186.3" fill="none" stroke="#b000b0" stroke-width="1"/><polyline points="1605.9,1082.3 1611.9,1088.3" fill="none" stroke="#b000b0" stroke-width="1"/><polyline points="1614.4,930.2 1610.4,936.2" fill="none" stroke="#8c8c00" stroke-width="1"/><polyline points="1570.1,995.9 1566.1,1001.9" fill="none" stroke="#ff8c00" stroke-width="1"/><polyline points="1608,918.8 1608,924.8" fill="none" stroke="#00ffff" stroke-width="1"/><polyline points="1612.6,1193.5 1618.6,1199.5" fill="none" stroke="#b000b0" stroke-width="1"/><polyline points="1583,1050 1579,1050" fill="none" stroke="#8c8c00" stroke-width="1"/><polyline points="1592.5,1141.9 1592.5,1141.9" fill="none" stroke="#b000b0" stroke-width="1"/><polyline points="1594.4,939.6 1594.4,939.6" fill="none" stroke="#ff8c00" stroke-width="1"/><polyline points="1597.3,1112.3 1593.3,1118.3" fill="none" stroke="#00ffff" stroke-width="1"/><polyline points="1601.6,1121.7 1597.6,1127.7" fill="none" stroke="#00ffff" stroke-width="1"/><polyline points="1576.9,925.8 1582.9,931.8" fill="none" stroke="#8c8c00" stroke-width="1"/><polyline points="1570.5,1122.4 1570.5,1122.4" fill="none" stroke="#b000b0" stroke-width="1"/><polyline points="1612.5,995.7 1618.5,1001.7" fill="none" stroke="#8c8c00" stroke-width="1"/><polyline points="1581.9,998 1577.9,1004" fill="none" stroke="#8c8c00" stroke-width="1"/><polyline points="1572.2,1187.7 1578.2,1187.7" fill="none" stroke="#ff8c00" stroke-width="1"/><polyline points="938.3,1159.2 1011.5,1159.2 1016.4,1153.2 1017.4,1126.6" fill="none" stroke="#ff00ff" stroke-width="1.5"/><polyline points="938.3,1229 1194.3,1229 1201,1224.7 1207.6,1199.8 1210.9,1191.5 1234.2,1189.1 1239.2,1184.8 1247.5,1149.9 1254.1,1140.6 1294,1140.6 1317.3,1130 1367.2,1130 1403.8,1140.6 1413.7,1153.2 1415.4,1179.8 1423.7,1186.5 1447,1189.8 1453.6,1199.8 1460.3,1223.1 1466.9,1229 1599.9,1229" fill="none" stroke="#ff00ff" stroke-width="1.5"/><polyline points="938.3,1166.5 1018.1,1166.5 1041.4,1146.6 1107.9,1146.6 1147.8,1133.3" fill="none" stroke="#00ff00" stroke-width="1.1"/><polyline points="938.3,1170.5 1023.1,1170.5 1046.4,1150.6 1107.9,1149.6 1147.8,1133.3" fill="none" stroke="#00ff00" stroke-width="1.1"/><polyline points="938.3,1174.5 1028.1,1174.5 1051.4,1154.6 1107.9,1152.6 1147.8,1133.3" fill="none" stroke="#00ff00" stroke-width="1.1"/><polyline points="938.3,1178.5 1033.1,1178.5 1056.3,1158.6 1107.9,1155.6 1147.8,1133.3" fill="none" stroke="#00ff00" stroke-width="1.1"/><polyline points="938.3,1182.5 1038.1,1182.5 1061.3,1162.6 1107.9,1158.6 1147.8,1133.3" fill="none" stroke="#00ff00" stroke-width="1.1"/><polyline points="938.3,1186.5 1043,1186.5 1066.3,1166.5 1107.9,1161.6 1147.8,1133.3" fill="none" stroke="#00ff00" stroke-width="1.1"/><polyline points="938.3,1190.5 1048,1190.5 1071.3,1170.5 1107.9,1164.5 1147.8,1133.3" fill="none" stroke="#00ff00" stroke-width="1.1"/><polyline points="938.3,1194.5 1053,1194.5 1076.3,1174.5 1107.9,1167.5 1147.8,1133.3" fill="none" stroke="#00ff00" stroke-width="1.1"/><polyline points="938.3,1198.5 1058,1198.5 1081.3,1178.5 1107.9,1170.5 1147.8,1133.3" fill="none" stroke="#00ff00" stroke-width="1.1"/><polyline points="1121.2,1223.1 1134.5,1206.4 1187.7,1199.8 1234.2,1146.6 1240.9,1130" fill="none" stroke="#00ff00" stroke-width="1.1"/><polyline points="1129.5,1223.1 1142.8,1206.4 1196,1199.8 1236.9,1146.6 1243.5,1130" fill="none" stroke="#00ff00" stroke-width="1.1"/><polyline points="1137.8,1223.1 1151.1,1206.4 1204.3,1199.8 1239.5,1146.6 1246.2,1130" fill="none" stroke="#00ff00" stroke-width="1.1"/><polyline points="1146.1,1223.1 1159.4,1206.4 1212.6,1199.8 1242.2,1146.6 1248.8,1130" fill="none" stroke="#00ff00" stroke-width="1.1"/><polyline points="1154.4,1223.1 1167.7,1206.4 1220.9,1199.8 1244.8,1146.6 1251.5,1130" fill="none" stroke="#00ff00" stroke-width="1.1"/><polyline points="1011.5,1219.7 1131.1,1219.7 1137.8,1206.4" fill="none" stroke="#00ff00" stroke-width="1.2"/><polygon points="1031.4,1191.5 1064.7,1184.8 1107.9,1179.2 1164.4,1179.2 1171,1186.5 1134.5,1191.5 1068,1197.1 1034.7,1196.5" fill="#ff0000"/><polyline points="1008.1,1206.4 1121.2,1206.4" fill="none" stroke="#a8b098" stroke-width="3"/><polyline points="984.9,1179.8 1126.2,1179.8" fill="none" stroke="#a8b098" stroke-width="3"/><polyline points="984.9,1179.8 984.9,1208.1" fill="none" stroke="#a8b098" stroke-width="3"/><polyline points="1114.5,1178.2 1126.2,1178.2 1126.2,1204.8" fill="none" stroke="#a8b098" stroke-width="2"/><polyline points="1014.8,1183.2 1014.8,1203.1" fill="none" stroke="#00ff00" stroke-width="1"/><polyline points="1020.8,1183.2 1020.8,1203.1" fill="none" stroke="#ff0000" stroke-width="1"/><polyline points="1026.8,1183.2 1026.8,1203.1" fill="none" stroke="#ff0000" stroke-width="1"/><polyline points="1032.7,1183.2 1032.7,1203.1" fill="none" stroke="#00ff00" stroke-width="1"/><polyline points="1038.7,1183.2 1038.7,1203.1" fill="none" stroke="#ff0000" stroke-width="1"/><polyline points="1044.7,1183.2 1044.7,1203.1" fill="none" stroke="#ff0000" stroke-width="1"/><polyline points="1050.7,1183.2 1050.7,1203.1" fill="none" stroke="#00ff00" stroke-width="1"/><polyline points="1056.7,1183.2 1056.7,1203.1" fill="none" stroke="#ff0000" stroke-width="1"/><polyline points="1062.7,1183.2 1062.7,1203.1" fill="none" stroke="#ff0000" stroke-width="1"/><polyline points="1068.6,1183.2 1068.6,1203.1" fill="none" stroke="#00ff00" stroke-width="1"/><polyline points="1074.6,1183.2 1074.6,1203.1" fill="none" stroke="#ff0000" stroke-width="1"/><polyline points="1080.6,1183.2 1080.6,1203.1" fill="none" stroke="#ff0000" stroke-width="1"/><polyline points="1086.6,1183.2 1086.6,1203.1" fill="none" stroke="#00ff00" stroke-width="1"/><polyline points="1092.6,1183.2 1092.6,1203.1" fill="none" stroke="#ff0000" stroke-width="1"/><polyline points="1098.6,1183.2 1098.6,1203.1" fill="none" stroke="#ff0000" stroke-width="1"/><polyline points="1104.5,1183.2 1104.5,1203.1" fill="none" stroke="#00ff00" stroke-width="1"/><polyline points="1110.5,1183.2 1110.5,1203.1" fill="none" stroke="#ff0000" stroke-width="1"/><polyline points="1116.5,1183.2 1116.5,1203.1" fill="none" stroke="#ff0000" stroke-width="1"/><rect x="1031.4" y="1133.3" width="12" height="10" fill="none" stroke="#a8b098" stroke-width="1"/><rect x="1032.9" y="1134.8" width="4.2" height="7" fill="#800000"/><rect x="1037.7" y="1134.8" width="4.2" height="7" fill="#800000"/><rect x="1048" y="1135" width="14" height="20" fill="none" stroke="#a8b098" stroke-width="1"/><rect x="1049.5" y="1136.5" width="4.9" height="17" fill="#800000"/><rect x="1055.6" y="1136.5" width="4.9" height="17" fill="#800000"/><rect x="1054.7" y="1136.6" width="6" height="6" fill="none" stroke="#a8b098" stroke-width="1"/><rect x="1056.2" y="1138.1" width="3" height="2.1" fill="#800000"/><rect x="1056.2" y="1139" width="3" height="2.1" fill="#800000"/><rect x="1087.9" y="1135" width="12" height="20" fill="none" stroke="#a8b098" stroke-width="1"/><rect x="1089.4" y="1136.5" width="4.2" height="17" fill="#800000"/><rect x="1094.2" y="1136.5" width="4.2" height="17" fill="#800000"/><rect x="1111.2" y="1141.6" width="14" height="24" fill="none" stroke="#a8b098" stroke-width="1"/><rect x="1112.7" y="1143.1" width="4.9" height="21" fill="#800000"/><rect x="1118.8" y="1143.1" width="4.9" height="21" fill="#800000"/><rect x="1164.4" y="1135" width="12" height="30" fill="none" stroke="#a8b098" stroke-width="1"/><rect x="1165.9" y="1136.5" width="9" height="10.5" fill="#800000"/><rect x="1165.9" y="1153" width="9" height="10.5" fill="#800000"/><rect x="1187.7" y="1135" width="18" height="28" fill="none" stroke="#a8b098" stroke-width="1"/><rect x="1189.2" y="1136.5" width="15" height="9.8" fill="#800000"/><rect x="1189.2" y="1151.7" width="15" height="9.8" fill="#800000"/><rect x="1210.9" y="1135" width="14" height="10" fill="none" stroke="#a8b098" stroke-width="1"/><rect x="1212.4" y="1136.5" width="4.9" height="7" fill="#800000"/><rect x="1218.5" y="1136.5" width="4.9" height="7" fill="#800000"/><rect x="1031.4" y="1153.2" width="10" height="8" fill="none" stroke="#a8b098" stroke-width="1"/><rect x="1032.9" y="1154.7" width="3.5" height="5" fill="#800000"/><rect x="1036.4" y="1154.7" width="3.5" height="5" fill="#800000"/><rect x="1021.4" y="1166.5" width="12" height="8" fill="none" stroke="#a8b098" stroke-width="1"/><rect x="1022.9" y="1168" width="4.2" height="5" fill="#800000"/><rect x="1027.7" y="1168" width="4.2" height="5" fill="#800000"/><rect x="939" y="1216.4" width="8" height="7" fill="none" stroke="#a8b098" stroke-width="1"/><rect x="940.5" y="1217.9" width="2.8" height="4" fill="#800000"/><rect x="942.7" y="1217.9" width="2.8" height="4" fill="#800000"/><rect x="950" y="1216.4" width="8" height="7" fill="none" stroke="#a8b098" stroke-width="1"/><rect x="951.5" y="1217.9" width="2.8" height="4" fill="#800000"/><rect x="953.7" y="1217.9" width="2.8" height="4" fill="#800000"/><rect x="968.2" y="1216.4" width="12" height="7" fill="none" stroke="#a8b098" stroke-width="1"/><rect x="969.7" y="1217.9" width="4.2" height="4" fill="#800000"/><rect x="974.5" y="1217.9" width="4.2" height="4" fill="#800000"/><rect x="941.6" y="1181.5" width="24" height="26" fill="none" stroke="#a8b098" stroke-width="1"/><rect x="943.1" y="1183" width="8.4" height="23" fill="#800000"/><rect x="955.7" y="1183" width="8.4" height="23" fill="#800000"/><rect x="1094.6" y="1213.1" width="14" height="10" fill="none" stroke="#a8b098" stroke-width="1"/><rect x="1096.1" y="1214.6" width="4.9" height="7" fill="#800000"/><rect x="1102.2" y="1214.6" width="4.9" height="7" fill="#800000"/><rect x="1051.4" y="1214.7" width="12" height="10" fill="none" stroke="#a8b098" stroke-width="1"/><rect x="1052.9" y="1216.2" width="4.2" height="7" fill="#800000"/><rect x="1057.7" y="1216.2" width="4.2" height="7" fill="#800000"/><polyline points="1069.4,1178 1063.6,1172.7" fill="none" stroke="#ff0000" stroke-width="1"/><polyline points="1034.6,1178.4 1029,1187.3" fill="none" stroke="#ff0000" stroke-width="1"/><polyline points="1221.1,1189.2 1219.9,1182.5" fill="none" stroke="#ff0000" stroke-width="1"/><polyline points="1096.2,1143.2 1092.2,1152.8" fill="none" stroke="#00ff00" stroke-width="1"/><polyline points="1088,1213.2 1079.4,1208.8" fill="none" stroke="#ff0000" stroke-width="1"/><polyline points="1156.6,1211.8 1161.4,1209.3" fill="none" stroke="#00ff00" stroke-width="1"/><polyline points="1183.4,1206.8 1183.7,1204.2" fill="none" stroke="#00ff00" stroke-width="1"/><polyline points="1076.5,1168.9 1078.4,1174" fill="none" stroke="#ff0000" stroke-width="1"/><polyline points="1213.7,1136 1205.6,1129.9" fill="none" stroke="#00ff00" stroke-width="1"/><polyline points="1173.8,1198.4 1177.3,1190.7" fill="none" stroke="#00ff00" stroke-width="1"/><polyline points="1227.2,1165.3 1219.4,1156" fill="none" stroke="#00ff00" stroke-width="1"/><polyline points="1217.7,1215.4 1210.8,1212.1" fill="none" stroke="#a8b098" stroke-width="1"/><polyline points="1194.3,1160.2 1187.8,1167.8" fill="none" stroke="#a8b098" stroke-width="1"/><polyline points="1212.9,1137.3 1209.4,1129.1" fill="none" stroke="#00ff00" stroke-width="1"/><polyline points="1123.9,1216.8 1120,1218.9" fill="none" stroke="#00ff00" stroke-width="1"/><polyline points="1125.1,1175.5 1124.6,1184.4" fill="none" stroke="#ff0000" stroke-width="1"/><polyline points="1111.8,1201.7 1117.6,1206" fill="none" stroke="#00ff00" stroke-width="1"/><polyline points="1061.3,1169.3 1061.6,1173.5" fill="none" stroke="#ff0000" stroke-width="1"/><polyline points="1139.8,1193.7 1146.7,1201" fill="none" stroke="#00ff00" stroke-width="1"/><polyline points="1136.8,1214.8 1140.8,1209.2" fill="none" stroke="#00ff00" stroke-width="1"/><polyline points="1225.3,1149.2 1221.1,1157" fill="none" stroke="#a8b098" stroke-width="1"/><polyline points="1147.2,1194.7 1149.3,1194.3" fill="none" stroke="#ff0000" stroke-width="1"/><polyline points="1226.8,1167.7 1223.2,1163" fill="none" stroke="#00ff00" stroke-width="1"/><polyline points="1089.5,1217.9 1089,1219.1" fill="none" stroke="#00ff00" stroke-width="1"/><polyline points="1156.6,1156 1162.5,1147.6" fill="none" stroke="#00ff00" stroke-width="1"/><polyline points="1042.9,1168.5 1050,1178.3" fill="none" stroke="#00ff00" stroke-width="1"/><polyline points="1123.8,1169.7 1125.8,1166.2" fill="none" stroke="#00ff00" stroke-width="1"/><polyline points="1156.8,1155.5 1158.6,1157.1" fill="none" stroke="#ff0000" stroke-width="1"/><polyline points="1045.1,1144.6 1042.1,1137.2" fill="none" stroke="#00ff00" stroke-width="1"/><polyline points="1189.5,1197.9 1187.3,1190.6" fill="none" stroke="#00ff00" stroke-width="1"/><polyline points="1178,1151.9 1181.9,1147.4" fill="none" stroke="#00ff00" stroke-width="1"/><polyline points="1021.9,1184.3 1023.7,1194" fill="none" stroke="#ff0000" stroke-width="1"/><polyline points="1068.5,1196.5 1068.6,1196.4" fill="none" stroke="#00ff00" stroke-width="1"/><polyline points="1044,1145.4 1046.1,1153.6" fill="none" stroke="#00ff00" stroke-width="1"/><polyline points="1145.9,1176.5 1148.5,1174.6" fill="none" stroke="#ff0000" stroke-width="1"/><polyline points="1076.4,1192.3 1081.4,1190.6" fill="none" stroke="#00ff00" stroke-width="1"/><polyline points="1225.2,1184.3 1228.3,1184.1" fill="none" stroke="#00ff00" stroke-width="1"/><polyline points="1189.7,1161.5 1189.2,1170.3" fill="none" stroke="#a8b098" stroke-width="1"/><polyline points="1219.9,1143.7 1228.7,1148.5" fill="none" stroke="#00ff00" stroke-width="1"/><polyline points="1163.8,1135.2 1172.5,1131.8" fill="none" stroke="#00ff00" stroke-width="1"/><polyline points="1158.4,1188.8 1155.2,1186.6" fill="none" stroke="#00ff00" stroke-width="1"/><polyline points="1047.1,1192.4 1050.6,1192.7" fill="none" stroke="#00ff00" stroke-width="1"/><polyline points="1036.5,1210.4 1035.2,1217.1" fill="none" stroke="#00ff00" stroke-width="1"/><polyline points="1100.2,1185.1 1109.9,1178.9" fill="none" stroke="#ff0000" stroke-width="1"/><polyline points="1207.9,1209.6 1203.3,1214.2" fill="none" stroke="#a8b098" stroke-width="1"/><polyline points="1208,1184.5 1215.5,1181" fill="none" stroke="#ff0000" stroke-width="1"/><polyline points="1047.6,1185.4 1041.6,1188" fill="none" stroke="#00ff00" stroke-width="1"/><polyline points="1031.3,1133.4 1037,1133.3" fill="none" stroke="#a8b098" stroke-width="1"/><polyline points="1123.1,1172.4 1126.6,1168.7" fill="none" stroke="#00ff00" stroke-width="1"/><polyline points="1141.3,1178.9 1144.1,1180.1" fill="none" stroke="#00ff00" stroke-width="1"/><polyline points="1191.1,1141.6 1190.5,1149.6" fill="none" stroke="#00ff00" stroke-width="1"/><polyline points="1196.3,1179.7 1198.5,1186.8" fill="none" stroke="#ff0000" stroke-width="1"/><polyline points="1166,1165.8 1156.8,1158" fill="none" stroke="#00ff00" stroke-width="1"/><polyline points="1061.7,1160.9 1059,1169.7" fill="none" stroke="#ff0000" stroke-width="1"/><polyline points="1116.9,1151.5 1126.5,1145" fill="none" stroke="#ff0000" stroke-width="1"/><polyline points="1062,1196.4 1064.5,1186.7" fill="none" stroke="#00ff00" stroke-width="1"/><polyline points="1202.3,1213.8 1196.4,1208.2" fill="none" stroke="#00ff00" stroke-width="1"/><polyline points="1133.9,1170.3 1126.7,1178.6" fill="none" stroke="#ff0000" stroke-width="1"/><polyline points="1075.4,1162.9 1079.2,1158.2" fill="none" stroke="#00ff00" stroke-width="1"/><polyline points="1062.9,1189.5 1056.6,1188.2" fill="none" stroke="#a8b098" stroke-width="1"/><rect x="1277.4" y="1130" width="12" height="5" fill="#800000"/><polyline points="1407.1,1130 1440.3,1166.5 1463.6,1196.5 1470.2,1219.7 1599.9,1219.7" fill="none" stroke="#00ffff" stroke-width="1"/><polyline points="1410.4,1130 1443.6,1166.5 1466.2,1196.5 1472.2,1219.7 1599.9,1218.1" fill="none" stroke="#00ffff" stroke-width="1"/><polyline points="1413.7,1130 1447,1166.5 1468.9,1196.5 1474.2,1219.7 1599.9,1216.4" fill="none" stroke="#00ffff" stroke-width="1"/><polyline points="1417,1130 1450.3,1166.5 1471.6,1196.5 1476.2,1219.7 1599.9,1214.7" fill="none" stroke="#00ffff" stroke-width="1"/><polyline points="1420.4,1130 1453.6,1166.5 1474.2,1196.5 1478.2,1219.7 1599.9,1213.1" fill="none" stroke="#00ffff" stroke-width="1"/><polyline points="1423.7,1130 1456.9,1166.5 1476.9,1196.5 1480.2,1219.7 1599.9,1211.4" fill="none" stroke="#00ffff" stroke-width="1"/><polyline points="1427,1130 1460.3,1166.5 1479.5,1196.5 1482.2,1219.7 1599.9,1209.8" fill="none" stroke="#00ffff" stroke-width="1"/><polyline points="1433.7,1130 1463.6,1153.2 1500.2,1166.5 1599.9,1166.5" fill="none" stroke="#ff00ff" stroke-width="1.2"/><polygon points="1480.2,1153.2 1510.1,1153.2 1510.1,1179.8 1480.2,1179.8" fill="#ff00ff"/><polygon points="1550,1159.9 1586.6,1159.9 1586.6,1179.8 1550,1179.8" fill="#ff00ff"/><rect x="1453.6" y="1130" width="6" height="24" fill="none" stroke="#a8b098" stroke-width="1"/><rect x="1455.1" y="1131.5" width="3" height="8.4" fill="#800000"/><rect x="1455.1" y="1144.1" width="3" height="8.4" fill="#800000"/><rect x="1470.2" y="1130" width="6" height="24" fill="none" stroke="#a8b098" stroke-width="1"/><rect x="1471.7" y="1131.5" width="3" height="8.4" fill="#800000"/><rect x="1471.7" y="1144.1" width="3" height="8.4" fill="#800000"/><rect x="1486.9" y="1130" width="6" height="24" fill="none" stroke="#a8b098" stroke-width="1"/><rect x="1488.4" y="1131.5" width="3" height="8.4" fill="#800000"/><rect x="1488.4" y="1144.1" width="3" height="8.4" fill="#800000"/><rect x="1503.5" y="1130" width="6" height="24" fill="none" stroke="#a8b098" stroke-width="1"/><rect x="1505" y="1131.5" width="3" height="8.4" fill="#800000"/><rect x="1505" y="1144.1" width="3" height="8.4" fill="#800000"/><rect x="1520.1" y="1130" width="6" height="24" fill="none" stroke="#a8b098" stroke-width="1"/><rect x="1521.6" y="1131.5" width="3" height="8.4" fill="#800000"/><rect x="1521.6" y="1144.1" width="3" height="8.4" fill="#800000"/><rect x="1533.4" y="1130" width="6" height="24" fill="none" stroke="#a8b098" stroke-width="1"/><rect x="1534.9" y="1131.5" width="3" height="8.4" fill="#800000"/><rect x="1534.9" y="1144.1" width="3" height="8.4" fill="#800000"/><rect x="1553.4" y="1130" width="6" height="24" fill="none" stroke="#a8b098" stroke-width="1"/><rect x="1554.9" y="1131.5" width="3" height="8.4" fill="#800000"/><rect x="1554.9" y="1144.1" width="3" height="8.4" fill="#800000"/><rect x="1483.5" y="1159.9" width="6" height="26" fill="none" stroke="#a8b098" stroke-width="1"/><rect x="1485" y="1161.4" width="3" height="9.1" fill="#800000"/><rect x="1485" y="1175.3" width="3" height="9.1" fill="#800000"/><rect x="1506.8" y="1159.9" width="6" height="26" fill="none" stroke="#a8b098" stroke-width="1"/><rect x="1508.3" y="1161.4" width="3" height="9.1" fill="#800000"/><rect x="1508.3" y="1175.3" width="3" height="9.1" fill="#800000"/><rect x="1543.4" y="1159.9" width="6" height="26" fill="none" stroke="#a8b098" stroke-width="1"/><rect x="1544.9" y="1161.4" width="3" height="9.1" fill="#800000"/><rect x="1544.9" y="1175.3" width="3" height="9.1" fill="#800000"/><rect x="1579.9" y="1159.9" width="6" height="26" fill="none" stroke="#a8b098" stroke-width="1"/><rect x="1581.4" y="1161.4" width="3" height="9.1" fill="#800000"/><rect x="1581.4" y="1175.3" width="3" height="9.1" fill="#800000"/><rect x="1586.6" y="1126.6" width="10" height="20" fill="none" stroke="#a8b098" stroke-width="1"/><rect x="1588.1" y="1128.1" width="7" height="7" fill="#800000"/><rect x="1588.1" y="1138.1" width="7" height="7" fill="#800000"/><rect x="1486.9" y="1189.8" width="14" height="10" fill="none" stroke="#a8b098" stroke-width="1"/><rect x="1488.4" y="1191.3" width="4.9" height="7" fill="#800000"/><rect x="1494.5" y="1191.3" width="4.9" height="7" fill="#800000"/><rect x="1513.5" y="1189.8" width="14" height="10" fill="none" stroke="#a8b098" stroke-width="1"/><rect x="1515" y="1191.3" width="4.9" height="7" fill="#800000"/><rect x="1521.1" y="1191.3" width="4.9" height="7" fill="#800000"/><rect x="1540.1" y="1189.8" width="14" height="10" fill="none" stroke="#a8b098" stroke-width="1"/><rect x="1541.6" y="1191.3" width="4.9" height="7" fill="#800000"/><rect x="1547.7" y="1191.3" width="4.9" height="7" fill="#800000"/><rect x="1566.6" y="1189.8" width="14" height="10" fill="none" stroke="#a8b098" stroke-width="1"/><rect x="1568.1" y="1191.3" width="4.9" height="7" fill="#800000"/><rect x="1574.2" y="1191.3" width="4.9" height="7" fill="#800000"/><path d="M1411.9 1166.5h3.6M1413.7 1164.7v3.6" stroke="#8c8c8c" stroke-width="1"/><path d="M1419.9 1166.5h3.6M1421.7 1164.7v3.6" stroke="#8c8c8c" stroke-width="1"/><path d="M1427.9 1166.5h3.6M1429.7 1164.7v3.6" stroke="#8c8c8c" stroke-width="1"/><path d="M1435.9 1166.5h3.6M1437.7 1164.7v3.6" stroke="#8c8c8c" stroke-width="1"/><path d="M1443.9 1166.5h3.6M1445.7 1164.7v3.6" stroke="#8c8c8c" stroke-width="1"/><path d="M1415.9 1172.9h3.6M1417.7 1171.1v3.6" stroke="#8c8c8c" stroke-width="1"/><path d="M1431.9 1172.9h3.6M1433.7 1171.1v3.6" stroke="#8c8c8c" stroke-width="1"/><path d="M1447.9 1172.9h3.6M1449.7 1171.1v3.6" stroke="#8c8c8c" stroke-width="1"/><path d="M1419.9 1179.3h3.6M1421.7 1177.5v3.6" stroke="#8c8c8c" stroke-width="1"/><path d="M1427.9 1179.3h3.6M1429.7 1177.5v3.6" stroke="#8c8c8c" stroke-width="1"/><path d="M1435.9 1179.3h3.6M1437.7 1177.5v3.6" stroke="#8c8c8c" stroke-width="1"/><path d="M1443.9 1179.3h3.6M1445.7 1177.5v3.6" stroke="#8c8c8c" stroke-width="1"/><path d="M1419.9 1192.1h3.6M1421.7 1190.3v3.6" stroke="#8c8c8c" stroke-width="1"/><path d="M1427.9 1192.1h3.6M1429.7 1190.3v3.6" stroke="#8c8c8c" stroke-width="1"/><path d="M1443.9 1192.1h3.6M1445.7 1190.3v3.6" stroke="#8c8c8c" stroke-width="1"/><path d="M1431.9 1198.5h3.6M1433.7 1196.7v3.6" stroke="#8c8c8c" stroke-width="1"/><path d="M1447.9 1198.5h3.6M1449.7 1196.7v3.6" stroke="#8c8c8c" stroke-width="1"/><path d="M1411.9 1204.9h3.6M1413.7 1203.1v3.6" stroke="#8c8c8c" stroke-width="1"/><path d="M1427.9 1204.9h3.6M1429.7 1203.1v3.6" stroke="#8c8c8c" stroke-width="1"/><path d="M1435.9 1204.9h3.6M1437.7 1203.1v3.6" stroke="#8c8c8c" stroke-width="1"/><path d="M1431.9 1211.3h3.6M1433.7 1209.5v3.6" stroke="#8c8c8c" stroke-width="1"/><path d="M1439.9 1211.3h3.6M1441.7 1209.5v3.6" stroke="#8c8c8c" stroke-width="1"/><path d="M1419.9 1217.7h3.6M1421.7 1215.9v3.6" stroke="#8c8c8c" stroke-width="1"/><path d="M1435.9 1217.7h3.6M1437.7 1215.9v3.6" stroke="#8c8c8c" stroke-width="1"/><path d="M1443.9 1217.7h3.6M1445.7 1215.9v3.6" stroke="#8c8c8c" stroke-width="1"/><polyline points="1537.4,1156.8 1527.3,1164.8" fill="none" stroke="#b000b0" stroke-width="1"/><polyline points="1465.9,1167.8 1470.4,1159.8" fill="none" stroke="#8c8c00" stroke-width="1"/><polyline points="1578.7,1216.6 1569.4,1208.6" fill="none" stroke="#ff00ff" stroke-width="1"/><polyline points="1487.5,1132.7 1487.7,1132.7" fill="none" stroke="#ff00ff" stroke-width="1"/><polyline points="1511,1210.6 1506.9,1210.6" fill="none" stroke="#b000b0" stroke-width="1"/><polyline points="1587.5,1172.5 1582.7,1180.5" fill="none" stroke="#8c8c00" stroke-width="1"/><polyline points="1456.2,1204.5 1465.3,1212.5" fill="none" stroke="#b000b0" stroke-width="1"/><polyline points="1581.9,1144.3 1575.7,1144.3" fill="none" stroke="#b000b0" stroke-width="1"/><polyline points="1469.4,1217.4 1463.6,1225.4" fill="none" stroke="#00ffff" stroke-width="1"/><polyline points="1542.2,1199 1540.2,1191" fill="none" stroke="#00ffff" stroke-width="1"/><polyline points="1446.5,1143.7 1448.7,1143.7" fill="none" stroke="#b000b0" stroke-width="1"/><polyline points="1564.2,1224.6 1572.6,1232.6" fill="none" stroke="#00ffff" stroke-width="1"/><polyline points="1539.8,1224.3 1531,1232.3" fill="none" stroke="#8c8c00" stroke-width="1"/><polyline points="1480.9,1211.2 1486.2,1219.2" fill="none" stroke="#8c8c00" stroke-width="1"/><polyline points="1587.7,1192.7 1588.7,1192.7" fill="none" stroke="#8c8c00" stroke-width="1"/><polyline points="1565.2,1198.9 1557.8,1190.9" fill="none" stroke="#ff00ff" stroke-width="1"/><polyline points="1588.1,1178.1 1590.2,1170.1" fill="none" stroke="#8c8c00" stroke-width="1"/><polyline points="1592.3,1198.4 1582.4,1198.4" fill="none" stroke="#00ffff" stroke-width="1"/><polyline points="1549.3,1171.3 1542.7,1163.3" fill="none" stroke="#ff00ff" stroke-width="1"/><polyline points="1556.2,1171.4 1545.8,1179.4" fill="none" stroke="#ff00ff" stroke-width="1"/><polyline points="1489.4,1153.7 1500.5,1153.7" fill="none" stroke="#8c8c00" stroke-width="1"/><polyline points="1444.9,1211.5 1441.2,1203.5" fill="none" stroke="#b000b0" stroke-width="1"/><polyline points="1590.4,1136.8 1583.8,1136.8" fill="none" stroke="#ff00ff" stroke-width="1"/><polyline points="1527.8,1212.8 1521.8,1220.8" fill="none" stroke="#ff00ff" stroke-width="1"/><polyline points="1502.8,1147.6 1504.7,1147.6" fill="none" stroke="#b000b0" stroke-width="1"/><polyline points="1587,1149.3 1598.7,1157.3" fill="none" stroke="#8c8c00" stroke-width="1"/><polyline points="1542.4,1171.6 1533.8,1179.6" fill="none" stroke="#b000b0" stroke-width="1"/><polyline points="1594.5,1197.2 1591.1,1189.2" fill="none" stroke="#b000b0" stroke-width="1"/><polyline points="1530.8,1148.3 1527.8,1140.3" fill="none" stroke="#8c8c00" stroke-width="1"/><polyline points="1502.2,1209.4 1511.3,1209.4" fill="none" stroke="#b000b0" stroke-width="1"/><polyline points="1492.9,1142.1 1490.9,1142.1" fill="none" stroke="#b000b0" stroke-width="1"/><polyline points="1494.1,1168.1 1488,1176.1" fill="none" stroke="#00ffff" stroke-width="1"/><polyline points="1591.3,1225.3 1595.1,1217.3" fill="none" stroke="#00ffff" stroke-width="1"/><polyline points="1459.4,1143.9 1457.7,1135.9" fill="none" stroke="#b000b0" stroke-width="1"/><polyline points="1593.7,1194.6 1601.4,1186.6" fill="none" stroke="#b000b0" stroke-width="1"/><polyline points="1494.4,1213.8 1487.4,1213.8" fill="none" stroke="#ff00ff" stroke-width="1"/><polyline points="1552.4,1202.5 1560.7,1194.5" fill="none" stroke="#b000b0" stroke-width="1"/><polyline points="1499.1,1222.4 1491.2,1230.4" fill="none" stroke="#8c8c00" stroke-width="1"/><polyline points="1581.3,1137.8 1573.4,1137.8" fill="none" stroke="#8c8c00" stroke-width="1"/><polyline points="1453.3,1134 1452.2,1126" fill="none" stroke="#ff00ff" stroke-width="1"/><rect x="1811" y="617" width="51" height="30" fill="none" stroke="#a8b098" stroke-width="1.3"/><rect x="1815" y="620" width="14" height="4" fill="#8c8c8c"/><rect x="1812.5" y="626" width="3" height="16" fill="#8c8c8c"/><rect x="1815" y="640" width="14" height="4" fill="#8c8c8c"/><rect x="1833" y="640" width="2.5" height="5" fill="#800000"/><rect x="1837.5" y="640" width="2.5" height="5" fill="#800000"/><rect x="1842" y="640" width="2.5" height="5" fill="#800000"/><rect x="1846.5" y="640" width="2.5" height="5" fill="#800000"/><rect x="1851" y="640" width="2.5" height="5" fill="#800000"/><rect x="1855.5" y="640" width="2.5" height="5" fill="#800000"/><rect x="1840" y="619" width="3" height="4" fill="#800000"/><rect x="1845" y="619" width="3" height="4" fill="#800000"/><rect x="1850" y="619" width="3" height="4" fill="#800000"/><rect x="1855" y="619" width="3" height="4" fill="#800000"/><polyline points="1820,628 1826,636" fill="none" stroke="#8c8c00" stroke-width="1"/><polyline points="1846,626 1850,634 1846,640" fill="none" stroke="#b000b0" stroke-width="1"/><polyline points="1855,626 1853,636" fill="none" stroke="#b000b0" stroke-width="1"/><rect x="1817" y="651" width="14" height="8" fill="none" stroke="#a8b098" stroke-width="1"/><rect x="1818.5" y="652.5" width="4.9" height="5" fill="#800000"/><rect x="1824.6" y="652.5" width="4.9" height="5" fill="#800000"/><polyline points="1838,650 1836,658" fill="none" stroke="#b000b0" stroke-width="1"/><polyline points="1846,650 1844,658" fill="none" stroke="#b000b0" stroke-width="1"/><rect x="1852" y="598" width="10" height="12" fill="none" stroke="#a8b098" stroke-width="1"/><rect x="1854" y="600" width="6" height="3" fill="#800000"/><rect x="1854" y="605" width="6" height="3" fill="#ff8c00"/><rect x="1591.9" y="1108.3" width="10" height="10" fill="none" stroke="#a8b098" stroke-width="1"/><rect x="1593.4" y="1109.8" width="7" height="3.5" fill="#800000"/><rect x="1593.4" y="1113.3" width="7" height="3.5" fill="#800000"/><rect x="1586.9" y="1054" width="6" height="8" fill="none" stroke="#a8b098" stroke-width="1"/><rect x="1588.4" y="1055.5" width="3" height="2.8" fill="#8c8c8c"/><rect x="1588.4" y="1057.7" width="3" height="2.8" fill="#8c8c8c"/><rect x="1602.6" y="766.1" width="10" height="6" fill="none" stroke="#a8b098" stroke-width="1"/><rect x="1604.1" y="767.6" width="3.5" height="3" fill="#800000"/><rect x="1607.6" y="767.6" width="3.5" height="3" fill="#800000"/><rect x="1584.4" y="1036.3" width="8" height="10" fill="none" stroke="#a8b098" stroke-width="1"/><rect x="1585.9" y="1037.8" width="5" height="3.5" fill="#8c8c8c"/><rect x="1585.9" y="1041.3" width="5" height="3.5" fill="#8c8c8c"/><rect x="1608.1" y="1119" width="10" height="14" fill="none" stroke="#a8b098" stroke-width="1"/><rect x="1609.6" y="1120.5" width="7" height="4.9" fill="#800000"/><rect x="1609.6" y="1126.6" width="7" height="4.9" fill="#800000"/><rect x="1583.6" y="1126.4" width="12" height="8" fill="none" stroke="#a8b098" stroke-width="1"/><rect x="1585.1" y="1127.9" width="4.2" height="5" fill="#800000"/><rect x="1589.9" y="1127.9" width="4.2" height="5" fill="#800000"/><rect x="1603.3" y="1018.5" width="8" height="8" fill="none" stroke="#a8b098" stroke-width="1"/><rect x="1604.8" y="1020" width="5" height="2.8" fill="#800000"/><rect x="1604.8" y="1022.2" width="5" height="2.8" fill="#800000"/><rect x="1600.5" y="924.5" width="14" height="14" fill="none" stroke="#a8b098" stroke-width="1"/><rect x="1602" y="926" width="11" height="4.9" fill="#8c8c8c"/><rect x="1602" y="932.1" width="11" height="4.9" fill="#8c8c8c"/><rect x="1587.2" y="1087.1" width="8" height="8" fill="none" stroke="#a8b098" stroke-width="1"/><rect x="1588.7" y="1088.6" width="5" height="2.8" fill="#8c8c8c"/><rect x="1588.7" y="1090.8" width="5" height="2.8" fill="#8c8c8c"/><rect x="1597" y="798.6" width="8" height="10" fill="none" stroke="#a8b098" stroke-width="1"/><rect x="1598.5" y="800.1" width="5" height="3.5" fill="#800000"/><rect x="1598.5" y="803.6" width="5" height="3.5" fill="#800000"/><rect x="1593.7" y="714.3" width="14" height="14" fill="none" stroke="#a8b098" stroke-width="1"/><rect x="1595.2" y="715.8" width="11" height="4.9" fill="#8c8c8c"/><rect x="1595.2" y="721.9" width="11" height="4.9" fill="#8c8c8c"/><rect x="1595.7" y="905.2" width="8" height="10" fill="none" stroke="#a8b098" stroke-width="1"/><rect x="1597.2" y="906.7" width="5" height="3.5" fill="#8c8c8c"/><rect x="1597.2" y="910.2" width="5" height="3.5" fill="#8c8c8c"/><rect x="1594.7" y="1106.6" width="10" height="10" fill="none" stroke="#a8b098" stroke-width="1"/><rect x="1596.2" y="1108.1" width="7" height="3.5" fill="#800000"/><rect x="1596.2" y="1111.6" width="7" height="3.5" fill="#800000"/><rect x="1604.4" y="789.6" width="6" height="6" fill="none" stroke="#a8b098" stroke-width="1"/><rect x="1605.9" y="791.1" width="3" height="2.1" fill="#800000"/><rect x="1605.9" y="792" width="3" height="2.1" fill="#800000"/><rect x="1584.7" y="1039.3" width="10" height="8" fill="none" stroke="#a8b098" stroke-width="1"/><rect x="1586.2" y="1040.8" width="3.5" height="5" fill="#800000"/><rect x="1589.7" y="1040.8" width="3.5" height="5" fill="#800000"/><rect x="1592.1" y="711.1" width="10" height="8" fill="none" stroke="#a8b098" stroke-width="1"/><rect x="1593.6" y="712.6" width="3.5" height="5" fill="#800000"/><rect x="1597.1" y="712.6" width="3.5" height="5" fill="#800000"/><rect x="1604.1" y="860.4" width="6" height="8" fill="none" stroke="#a8b098" stroke-width="1"/><rect x="1605.6" y="861.9" width="3" height="2.8" fill="#8c8c8c"/><rect x="1605.6" y="864.1" width="3" height="2.8" fill="#8c8c8c"/><rect x="1591.7" y="810.4" width="12" height="8" fill="none" stroke="#a8b098" stroke-width="1"/><rect x="1593.2" y="811.9" width="4.2" height="5" fill="#8c8c8c"/><rect x="1598" y="811.9" width="4.2" height="5" fill="#8c8c8c"/><rect x="1591.9" y="813" width="14" height="6" fill="none" stroke="#a8b098" stroke-width="1"/><rect x="1593.4" y="814.5" width="4.9" height="3" fill="#8c8c8c"/><rect x="1599.5" y="814.5" width="4.9" height="3" fill="#8c8c8c"/><rect x="1584.8" y="972.1" width="6" height="6" fill="none" stroke="#a8b098" stroke-width="1"/><rect x="1586.3" y="973.6" width="3" height="2.1" fill="#8c8c8c"/><rect x="1586.3" y="974.5" width="3" height="2.1" fill="#8c8c8c"/><rect x="1597.9" y="1092.7" width="14" height="8" fill="none" stroke="#a8b098" stroke-width="1"/><rect x="1599.4" y="1094.2" width="4.9" height="5" fill="#8c8c8c"/><rect x="1605.5" y="1094.2" width="4.9" height="5" fill="#8c8c8c"/><rect x="1591" y="1138.7" width="12" height="8" fill="none" stroke="#a8b098" stroke-width="1"/><rect x="1592.5" y="1140.2" width="4.2" height="5" fill="#800000"/><rect x="1597.3" y="1140.2" width="4.2" height="5" fill="#800000"/><rect x="1606.2" y="990.5" width="8" height="8" fill="none" stroke="#a8b098" stroke-width="1"/><rect x="1607.7" y="992" width="5" height="2.8" fill="#800000"/><rect x="1607.7" y="994.2" width="5" height="2.8" fill="#800000"/><rect x="1589.3" y="1035.5" width="6" height="10" fill="none" stroke="#a8b098" stroke-width="1"/><rect x="1590.8" y="1037" width="3" height="3.5" fill="#8c8c8c"/><rect x="1590.8" y="1040.5" width="3" height="3.5" fill="#8c8c8c"/><rect x="1581.6" y="1110.1" width="12" height="6" fill="none" stroke="#a8b098" stroke-width="1"/><rect x="1583.1" y="1111.6" width="4.2" height="3" fill="#8c8c8c"/><rect x="1587.9" y="1111.6" width="4.2" height="3" fill="#8c8c8c"/><rect x="1589.9" y="742" width="10" height="10" fill="none" stroke="#a8b098" stroke-width="1"/><rect x="1591.4" y="743.5" width="7" height="3.5" fill="#800000"/><rect x="1591.4" y="747" width="7" height="3.5" fill="#800000"/><rect x="1605.5" y="1114.8" width="14" height="10" fill="none" stroke="#a8b098" stroke-width="1"/><rect x="1607" y="1116.3" width="4.9" height="7" fill="#800000"/><rect x="1613.1" y="1116.3" width="4.9" height="7" fill="#800000"/><rect x="1594.8" y="807.8" width="6" height="6" fill="none" stroke="#a8b098" stroke-width="1"/><rect x="1596.3" y="809.3" width="3" height="2.1" fill="#800000"/><rect x="1596.3" y="810.2" width="3" height="2.1" fill="#800000"/><rect x="1580.6" y="737" width="10" height="6" fill="none" stroke="#a8b098" stroke-width="1"/><rect x="1582.1" y="738.5" width="3.5" height="3" fill="#8c8c8c"/><rect x="1585.6" y="738.5" width="3.5" height="3" fill="#8c8c8c"/><rect x="1610.4" y="888.9" width="6" height="10" fill="none" stroke="#a8b098" stroke-width="1"/><rect x="1611.9" y="890.4" width="3" height="3.5" fill="#800000"/><rect x="1611.9" y="893.9" width="3" height="3.5" fill="#800000"/><rect x="1601.2" y="852.7" width="6" height="14" fill="none" stroke="#a8b098" stroke-width="1"/><rect x="1602.7" y="854.2" width="3" height="4.9" fill="#8c8c8c"/><rect x="1602.7" y="860.3" width="3" height="4.9" fill="#8c8c8c"/><rect x="1580.8" y="869" width="14" height="6" fill="none" stroke="#a8b098" stroke-width="1"/><rect x="1582.3" y="870.5" width="4.9" height="3" fill="#8c8c8c"/><rect x="1588.4" y="870.5" width="4.9" height="3" fill="#8c8c8c"/><rect x="1591.3" y="972.3" width="8" height="14" fill="none" stroke="#a8b098" stroke-width="1"/><rect x="1592.8" y="973.8" width="5" height="4.9" fill="#800000"/><rect x="1592.8" y="979.9" width="5" height="4.9" fill="#800000"/><rect x="1607.6" y="1091.3" width="6" height="8" fill="none" stroke="#a8b098" stroke-width="1"/><rect x="1609.1" y="1092.8" width="3" height="2.8" fill="#800000"/><rect x="1609.1" y="1095" width="3" height="2.8" fill="#800000"/><rect x="1597.4" y="789.3" width="12" height="8" fill="none" stroke="#a8b098" stroke-width="1"/><rect x="1598.9" y="790.8" width="4.2" height="5" fill="#800000"/><rect x="1603.7" y="790.8" width="4.2" height="5" fill="#800000"/><rect x="1593.6" y="978.7" width="10" height="10" fill="none" stroke="#a8b098" stroke-width="1"/><rect x="1595.1" y="980.2" width="7" height="3.5" fill="#800000"/><rect x="1595.1" y="983.7" width="7" height="3.5" fill="#800000"/><rect x="1595.3" y="1064.9" width="10" height="10" fill="none" stroke="#a8b098" stroke-width="1"/><rect x="1596.8" y="1066.4" width="7" height="3.5" fill="#8c8c8c"/><rect x="1596.8" y="1069.9" width="7" height="3.5" fill="#8c8c8c"/><rect x="1599.8" y="1058.8" width="14" height="8" fill="none" stroke="#a8b098" stroke-width="1"/><rect x="1601.3" y="1060.3" width="4.9" height="5" fill="#800000"/><rect x="1607.4" y="1060.3" width="4.9" height="5" fill="#800000"/><rect x="1593.6" y="714.6" width="12" height="8" fill="none" stroke="#a8b098" stroke-width="1"/><rect x="1595.1" y="716.1" width="4.2" height="5" fill="#800000"/><rect x="1599.9" y="716.1" width="4.2" height="5" fill="#800000"/><rect x="1589.6" y="903.8" width="14" height="14" fill="none" stroke="#a8b098" stroke-width="1"/><rect x="1591.1" y="905.3" width="11" height="4.9" fill="#8c8c8c"/><rect x="1591.1" y="911.4" width="11" height="4.9" fill="#8c8c8c"/><rect x="1600.5" y="1007.8" width="14" height="14" fill="none" stroke="#a8b098" stroke-width="1"/><rect x="1602" y="1009.3" width="11" height="4.9" fill="#8c8c8c"/><rect x="1602" y="1015.4" width="11" height="4.9" fill="#8c8c8c"/><rect x="1594.4" y="831.7" width="14" height="14" fill="none" stroke="#a8b098" stroke-width="1"/><rect x="1595.9" y="833.2" width="11" height="4.9" fill="#8c8c8c"/><rect x="1595.9" y="839.3" width="11" height="4.9" fill="#8c8c8c"/><rect x="1601.1" y="864.9" width="8" height="14" fill="none" stroke="#a8b098" stroke-width="1"/><rect x="1602.6" y="866.4" width="5" height="4.9" fill="#800000"/><rect x="1602.6" y="872.5" width="5" height="4.9" fill="#800000"/><rect x="1594.7" y="1044.3" width="8" height="10" fill="none" stroke="#a8b098" stroke-width="1"/><rect x="1596.2" y="1045.8" width="5" height="3.5" fill="#800000"/><rect x="1596.2" y="1049.3" width="5" height="3.5" fill="#800000"/><rect x="1586.7" y="768" width="6" height="10" fill="none" stroke="#a8b098" stroke-width="1"/><rect x="1588.2" y="769.5" width="3" height="3.5" fill="#800000"/><rect x="1588.2" y="773" width="3" height="3.5" fill="#800000"/><line x1="1597.3" y1="990.6" x2="1597.3" y2="1004.3" stroke="#ff8c00" stroke-width="1"/><line x1="1616.4" y1="796.3" x2="1620" y2="796.3" stroke="#00ffff" stroke-width="1"/><line x1="1601.2" y1="954.9" x2="1614.1" y2="942.1" stroke="#ff8c00" stroke-width="1"/><line x1="1593.2" y1="719.2" x2="1610.5" y2="719.2" stroke="#b000b0" stroke-width="1"/><line x1="1605.5" y1="920.8" x2="1620" y2="937.5" stroke="#8c8c00" stroke-width="1"/><line x1="1613.5" y1="1075.1" x2="1620" y2="1075.1" stroke="#ff8c00" stroke-width="1"/><line x1="1586.6" y1="1122.5" x2="1599.6" y2="1109.4" stroke="#00ffff" stroke-width="1"/><line x1="1613.7" y1="938.8" x2="1620" y2="924.7" stroke="#b000b0" stroke-width="1"/><line x1="1594" y1="1070.3" x2="1594" y2="1078.9" stroke="#00ffff" stroke-width="1"/><line x1="1586.6" y1="1053.7" x2="1602.3" y2="1053.7" stroke="#8c8c00" stroke-width="1"/><line x1="1603.1" y1="1014.5" x2="1610.4" y2="1021.9" stroke="#b000b0" stroke-width="1"/><line x1="1587.8" y1="875" x2="1602.3" y2="860.5" stroke="#b000b0" stroke-width="1"/><line x1="1598.4" y1="1048.3" x2="1609.5" y2="1048.3" stroke="#ff8c00" stroke-width="1"/><line x1="1607.3" y1="983.5" x2="1612.5" y2="978.3" stroke="#ff8c00" stroke-width="1"/><line x1="1583.2" y1="929.6" x2="1597.7" y2="915.2" stroke="#8c8c00" stroke-width="1"/><line x1="1600.7" y1="845.4" x2="1617.4" y2="828.7" stroke="#00ffff" stroke-width="1"/><line x1="1585.5" y1="971" x2="1606.3" y2="991.8" stroke="#00ffff" stroke-width="1"/><line x1="1586.1" y1="752.3" x2="1592.7" y2="752.3" stroke="#ff8c00" stroke-width="1"/><line x1="1610.9" y1="1109" x2="1620" y2="1129.7" stroke="#00ffff" stroke-width="1"/><line x1="1590.6" y1="821.4" x2="1595.2" y2="826.1" stroke="#8c8c00" stroke-width="1"/><line x1="1608.9" y1="819.4" x2="1620" y2="803.2" stroke="#00ffff" stroke-width="1"/><line x1="1619.3" y1="954.4" x2="1620" y2="945.4" stroke="#8c8c00" stroke-width="1"/><line x1="1607.9" y1="712.9" x2="1614.5" y2="706.4" stroke="#00ffff" stroke-width="1"/><line x1="1617.4" y1="783.3" x2="1620" y2="792.2" stroke="#8c8c00" stroke-width="1"/><line x1="1611.2" y1="1049.7" x2="1611.2" y2="1068.7" stroke="#ff8c00" stroke-width="1"/><line x1="1582.8" y1="1021.9" x2="1612.2" y2="1021.9" stroke="#ff8c00" stroke-width="1"/><line x1="1614.7" y1="1110.1" x2="1620" y2="1115.7" stroke="#00ffff" stroke-width="1"/><line x1="1613.6" y1="717.9" x2="1620" y2="736.7" stroke="#8c8c00" stroke-width="1"/><line x1="1594.4" y1="1061.7" x2="1613" y2="1061.7" stroke="#b000b0" stroke-width="1"/><line x1="1587.8" y1="867.8" x2="1599.2" y2="867.8" stroke="#ff8c00" stroke-width="1"/><line x1="1587" y1="1055.4" x2="1615.7" y2="1055.4" stroke="#00ffff" stroke-width="1"/><line x1="1594.6" y1="751.2" x2="1599.3" y2="755.9" stroke="#b000b0" stroke-width="1"/><line x1="1618.9" y1="762.4" x2="1620" y2="779.7" stroke="#ff8c00" stroke-width="1"/><line x1="1589" y1="795.9" x2="1593.8" y2="791.2" stroke="#8c8c00" stroke-width="1"/><line x1="1611" y1="732.7" x2="1611" y2="750.5" stroke="#00ffff" stroke-width="1"/><line x1="1601.3" y1="765.2" x2="1620" y2="765.2" stroke="#b000b0" stroke-width="1"/><line x1="1592" y1="1110.4" x2="1592" y2="1123.3" stroke="#ff8c00" stroke-width="1"/><line x1="1607.7" y1="783.8" x2="1620" y2="804.1" stroke="#b000b0" stroke-width="1"/><line x1="1611.9" y1="877.2" x2="1620" y2="889.3" stroke="#b000b0" stroke-width="1"/><line x1="1586.7" y1="718.2" x2="1586.7" y2="745.6" stroke="#8c8c00" stroke-width="1"/><line x1="1600.9" y1="720.3" x2="1600.9" y2="730.7" stroke="#00ffff" stroke-width="1"/><line x1="1595.7" y1="717.5" x2="1604.5" y2="717.5" stroke="#ff8c00" stroke-width="1"/><line x1="1618.2" y1="1103" x2="1620" y2="1097.6" stroke="#8c8c00" stroke-width="1"/><line x1="1602.1" y1="748.3" x2="1620" y2="728.1" stroke="#00ffff" stroke-width="1"/><line x1="1612.2" y1="834.1" x2="1612.2" y2="853.6" stroke="#b000b0" stroke-width="1"/><line x1="1588.8" y1="1091.8" x2="1597.6" y2="1082.9" stroke="#8c8c00" stroke-width="1"/><line x1="1615.1" y1="845.3" x2="1615.1" y2="858" stroke="#ff8c00" stroke-width="1"/><line x1="1608" y1="919.4" x2="1618.8" y2="919.4" stroke="#b000b0" stroke-width="1"/><line x1="1611.9" y1="820.8" x2="1619.1" y2="820.8" stroke="#8c8c00" stroke-width="1"/><line x1="1612" y1="852" x2="1620" y2="862.3" stroke="#8c8c00" stroke-width="1"/><line x1="1604.9" y1="961.1" x2="1612.2" y2="961.1" stroke="#ff8c00" stroke-width="1"/><line x1="1586.9" y1="1159.4" x2="1596.1" y2="1150.3" stroke="#ff8c00" stroke-width="1"/><line x1="1597.9" y1="970.2" x2="1597.9" y2="996" stroke="#b000b0" stroke-width="1"/><line x1="1587.3" y1="1046.5" x2="1587.3" y2="1073.5" stroke="#ff8c00" stroke-width="1"/><line x1="1592.4" y1="1087.8" x2="1601.4" y2="1078.9" stroke="#b000b0" stroke-width="1"/><line x1="1580.6" y1="1016.9" x2="1588.7" y2="1025" stroke="#00ffff" stroke-width="1"/><line x1="1585.2" y1="1013.9" x2="1598.9" y2="1027.6" stroke="#8c8c00" stroke-width="1"/><line x1="1580.9" y1="719.9" x2="1593.6" y2="732.7" stroke="#00ffff" stroke-width="1"/><line x1="1619.9" y1="781.5" x2="1620" y2="794.7" stroke="#b000b0" stroke-width="1"/><line x1="1593.3" y1="1120.7" x2="1593.3" y2="1134.8" stroke="#ff8c00" stroke-width="1"/><line x1="1617.8" y1="1008.4" x2="1620" y2="1002.8" stroke="#b000b0" stroke-width="1"/><line x1="1586.9" y1="1015.8" x2="1586.9" y2="1044.3" stroke="#ff8c00" stroke-width="1"/><line x1="1591.7" y1="970.1" x2="1610.5" y2="951.4" stroke="#ff8c00" stroke-width="1"/><line x1="1596" y1="1032.6" x2="1603.2" y2="1039.8" stroke="#b000b0" stroke-width="1"/><line x1="1589.6" y1="794.7" x2="1608.3" y2="813.4" stroke="#00ffff" stroke-width="1"/><line x1="1609.5" y1="722.3" x2="1620" y2="702.6" stroke="#00ffff" stroke-width="1"/><line x1="1615.2" y1="1060.3" x2="1620" y2="1060.3" stroke="#ff8c00" stroke-width="1"/><line x1="1595.3" y1="1053.9" x2="1619.6" y2="1053.9" stroke="#00ffff" stroke-width="1"/><line x1="1593" y1="1121.1" x2="1605.9" y2="1121.1" stroke="#ff8c00" stroke-width="1"/><line x1="1614.7" y1="1077.1" x2="1614.7" y2="1093.8" stroke="#b000b0" stroke-width="1"/><line x1="1588.7" y1="1040.3" x2="1594.8" y2="1046.4" stroke="#ff8c00" stroke-width="1"/><line x1="1619.8" y1="955.1" x2="1619.8" y2="969.3" stroke="#00ffff" stroke-width="1"/><line x1="1615.7" y1="1102.2" x2="1615.7" y2="1120.3" stroke="#b000b0" stroke-width="1"/><line x1="1605.9" y1="704.9" x2="1620" y2="722.2" stroke="#8c8c00" stroke-width="1"/><line x1="1602.6" y1="851.7" x2="1612.3" y2="841.9" stroke="#b000b0" stroke-width="1"/><line x1="1613" y1="844.9" x2="1620" y2="844.9" stroke="#ff8c00" stroke-width="1"/><line x1="1585" y1="1101.3" x2="1598.7" y2="1087.6" stroke="#00ffff" stroke-width="1"/><line x1="1597.8" y1="763.9" x2="1597.8" y2="778.3" stroke="#ff8c00" stroke-width="1"/><line x1="1615.7" y1="1039" x2="1620" y2="1044" stroke="#00ffff" stroke-width="1"/><line x1="1617.5" y1="1016.5" x2="1620" y2="1005.9" stroke="#00ffff" stroke-width="1"/><rect x="1711.2" y="726.7" width="14" height="10" fill="none" stroke="#a8b098" stroke-width="1"/><rect x="1712.7" y="728.2" width="4.9" height="7" fill="#800000"/><rect x="1718.8" y="728.2" width="4.9" height="7" fill="#800000"/><rect x="1688.5" y="739.9" width="12" height="6" fill="none" stroke="#a8b098" stroke-width="1"/><rect x="1690" y="741.4" width="4.2" height="3" fill="#800000"/><rect x="1694.8" y="741.4" width="4.2" height="3" fill="#800000"/><rect x="1679" y="725.1" width="12" height="8" fill="none" stroke="#a8b098" stroke-width="1"/><rect x="1680.5" y="726.6" width="4.2" height="5" fill="#800000"/><rect x="1685.3" y="726.6" width="4.2" height="5" fill="#800000"/><rect x="1701.9" y="752.5" width="8" height="6" fill="none" stroke="#a8b098" stroke-width="1"/><rect x="1703.4" y="754" width="2.8" height="3" fill="#800000"/><rect x="1705.6" y="754" width="2.8" height="3" fill="#800000"/><rect x="1707.3" y="742.1" width="14" height="8" fill="none" stroke="#a8b098" stroke-width="1"/><rect x="1708.8" y="743.6" width="4.9" height="5" fill="#800000"/><rect x="1714.9" y="743.6" width="4.9" height="5" fill="#800000"/><rect x="1735.7" y="748.2" width="6" height="10" fill="none" stroke="#a8b098" stroke-width="1"/><rect x="1737.2" y="749.7" width="3" height="3.5" fill="#800000"/><rect x="1737.2" y="753.2" width="3" height="3.5" fill="#800000"/><rect x="1667.6" y="747.7" width="14" height="8" fill="none" stroke="#a8b098" stroke-width="1"/><rect x="1669.1" y="749.2" width="4.9" height="5" fill="#800000"/><rect x="1675.2" y="749.2" width="4.9" height="5" fill="#800000"/><rect x="1673.6" y="750.3" width="12" height="8" fill="none" stroke="#a8b098" stroke-width="1"/><rect x="1675.1" y="751.8" width="4.2" height="5" fill="#800000"/><rect x="1679.9" y="751.8" width="4.2" height="5" fill="#800000"/><rect x="1662.3" y="733.4" width="14" height="14" fill="none" stroke="#a8b098" stroke-width="1"/><rect x="1663.8" y="734.9" width="11" height="4.9" fill="#800000"/><rect x="1663.8" y="741" width="11" height="4.9" fill="#800000"/><rect x="1686" y="747.5" width="6" height="6" fill="none" stroke="#a8b098" stroke-width="1"/><rect x="1687.5" y="749" width="3" height="2.1" fill="#800000"/><rect x="1687.5" y="749.9" width="3" height="2.1" fill="#800000"/><rect x="1668.9" y="715.9" width="6" height="14" fill="none" stroke="#a8b098" stroke-width="1"/><rect x="1670.4" y="717.4" width="3" height="4.9" fill="#800000"/><rect x="1670.4" y="723.5" width="3" height="4.9" fill="#800000"/><rect x="1708.4" y="730.1" width="14" height="14" fill="none" stroke="#a8b098" stroke-width="1"/><rect x="1709.9" y="731.6" width="11" height="4.9" fill="#800000"/><rect x="1709.9" y="737.7" width="11" height="4.9" fill="#800000"/><rect x="1666.7" y="700.7" width="10" height="10" fill="none" stroke="#a8b098" stroke-width="1"/><rect x="1668.2" y="702.2" width="7" height="3.5" fill="#800000"/><rect x="1668.2" y="705.7" width="7" height="3.5" fill="#800000"/><rect x="1731.5" y="737.9" width="12" height="14" fill="none" stroke="#a8b098" stroke-width="1"/><rect x="1733" y="739.4" width="9" height="4.9" fill="#800000"/><rect x="1733" y="745.5" width="9" height="4.9" fill="#800000"/><line x1="1738.7" y1="727.6" x2="1745" y2="727.6" stroke="#8c8c00" stroke-width="1"/><line x1="1667.5" y1="734.9" x2="1667.5" y2="755.3" stroke="#8c8c00" stroke-width="1"/><line x1="1734.7" y1="743.7" x2="1745" y2="724.4" stroke="#8c8c00" stroke-width="1"/><line x1="1661.9" y1="715.8" x2="1661.9" y2="734.5" stroke="#b000b0" stroke-width="1"/><line x1="1688.3" y1="736.8" x2="1697.7" y2="727.4" stroke="#00ffff" stroke-width="1"/><line x1="1737.1" y1="751" x2="1744.1" y2="758" stroke="#ff8c00" stroke-width="1"/><line x1="1730.8" y1="759" x2="1739.4" y2="759" stroke="#8c8c00" stroke-width="1"/><line x1="1716.5" y1="759.3" x2="1723.2" y2="759.3" stroke="#8c8c00" stroke-width="1"/><line x1="1700.4" y1="708.6" x2="1713.1" y2="700" stroke="#b000b0" stroke-width="1"/><line x1="1727.7" y1="720.1" x2="1740.6" y2="732.9" stroke="#b000b0" stroke-width="1"/><line x1="1743.4" y1="753.4" x2="1745" y2="748.3" stroke="#00ffff" stroke-width="1"/><line x1="1673.1" y1="745.1" x2="1678.6" y2="750.6" stroke="#8c8c00" stroke-width="1"/><line x1="1714.6" y1="756.7" x2="1741.4" y2="756.7" stroke="#b000b0" stroke-width="1"/><line x1="1669.7" y1="704.9" x2="1676.5" y2="700" stroke="#b000b0" stroke-width="1"/><line x1="1692.8" y1="743.7" x2="1692.8" y2="760" stroke="#ff8c00" stroke-width="1"/><line x1="1726.2" y1="702.1" x2="1738.6" y2="700" stroke="#b000b0" stroke-width="1"/><line x1="1665" y1="757.3" x2="1665" y2="760" stroke="#ff8c00" stroke-width="1"/><line x1="1663.6" y1="751.8" x2="1688.5" y2="751.8" stroke="#8c8c00" stroke-width="1"/><line x1="1670.1" y1="751.9" x2="1670.1" y2="760" stroke="#00ffff" stroke-width="1"/><line x1="1711.4" y1="754.4" x2="1718.1" y2="760" stroke="#8c8c00" stroke-width="1"/><line x1="1666.5" y1="717.8" x2="1666.5" y2="736.2" stroke="#b000b0" stroke-width="1"/><line x1="1692.2" y1="734.4" x2="1712.4" y2="734.4" stroke="#ff8c00" stroke-width="1"/><line x1="1668.6" y1="746.9" x2="1693.6" y2="746.9" stroke="#00ffff" stroke-width="1"/><line x1="1721.4" y1="708.5" x2="1730.1" y2="708.5" stroke="#8c8c00" stroke-width="1"/><line x1="1681.9" y1="737.5" x2="1695.1" y2="724.3" stroke="#b000b0" stroke-width="1"/><line x1="1677.3" y1="714.8" x2="1691.3" y2="728.8" stroke="#b000b0" stroke-width="1"/><line x1="1718.7" y1="702.7" x2="1730.8" y2="714.7" stroke="#ff8c00" stroke-width="1"/><line x1="1665.4" y1="712.9" x2="1685.8" y2="733.3" stroke="#b000b0" stroke-width="1"/><line x1="1692.5" y1="719.8" x2="1704.7" y2="707.6" stroke="#00ffff" stroke-width="1"/><line x1="1731.7" y1="752.4" x2="1745" y2="735.8" stroke="#00ffff" stroke-width="1"/><line x1="1740.9" y1="708.5" x2="1740.9" y2="727.2" stroke="#00ffff" stroke-width="1"/><line x1="1670.3" y1="717.8" x2="1685.9" y2="702.2" stroke="#8c8c00" stroke-width="1"/><line x1="1672.7" y1="719.3" x2="1683.6" y2="730.2" stroke="#b000b0" stroke-width="1"/><line x1="1723.7" y1="723.3" x2="1730.4" y2="723.3" stroke="#b000b0" stroke-width="1"/><line x1="1684.1" y1="719.9" x2="1684.1" y2="736.6" stroke="#8c8c00" stroke-width="1"/><line x1="1712.4" y1="723.7" x2="1717" y2="728.3" stroke="#8c8c00" stroke-width="1"/><line x1="1741.6" y1="749.6" x2="1745" y2="760" stroke="#b000b0" stroke-width="1"/><line x1="1711.7" y1="719.9" x2="1731.4" y2="739.6" stroke="#00ffff" stroke-width="1"/><line x1="1680.1" y1="720.4" x2="1680.1" y2="744.2" stroke="#b000b0" stroke-width="1"/><line x1="1743.7" y1="722.7" x2="1745" y2="707.8" stroke="#ff8c00" stroke-width="1"/><rect x="1703.5" y="882.1" width="2.4" height="2.4" fill="#c00000"/><line x1="1704.7" y1="883.3" x2="1708.7" y2="878.3" stroke="#b000b0" stroke-width="1"/><rect x="1739" y="948.7" width="2.4" height="2.4" fill="#c00000"/><line x1="1740.2" y1="949.9" x2="1744.2" y2="944.9" stroke="#b000b0" stroke-width="1"/><rect x="1746" y="927.7" width="2.4" height="2.4" fill="#c00000"/><line x1="1747.2" y1="928.9" x2="1751.2" y2="923.9" stroke="#b000b0" stroke-width="1"/><rect x="1725" y="897.9" width="2.4" height="2.4" fill="#c00000"/><line x1="1726.2" y1="899.1" x2="1730.2" y2="894.1" stroke="#b000b0" stroke-width="1"/><rect x="1723.1" y="899.4" width="2.4" height="2.4" fill="#c00000"/><line x1="1724.3" y1="900.6" x2="1728.3" y2="895.6" stroke="#b000b0" stroke-width="1"/><rect x="1724.8" y="855.6" width="2.4" height="2.4" fill="#c00000"/><line x1="1726" y1="856.8" x2="1730" y2="851.8" stroke="#b000b0" stroke-width="1"/><rect x="1728" y="897.2" width="2.4" height="2.4" fill="#c00000"/><line x1="1729.2" y1="898.4" x2="1733.2" y2="893.4" stroke="#b000b0" stroke-width="1"/><rect x="1734.3" y="849.4" width="2.4" height="2.4" fill="#c00000"/><line x1="1735.5" y1="850.6" x2="1739.5" y2="845.6" stroke="#b000b0" stroke-width="1"/><rect x="1719.6" y="913.8" width="2.4" height="2.4" fill="#c00000"/><line x1="1720.8" y1="915" x2="1724.8" y2="910" stroke="#b000b0" stroke-width="1"/><rect x="1703.5" y="938.7" width="2.4" height="2.4" fill="#c00000"/><line x1="1704.7" y1="939.9" x2="1708.7" y2="934.9" stroke="#b000b0" stroke-width="1"/><rect x="1731.4" y="831.2" width="2.4" height="2.4" fill="#c00000"/><line x1="1732.6" y1="832.4" x2="1736.6" y2="827.4" stroke="#b000b0" stroke-width="1"/><rect x="1743.1" y="872.3" width="2.4" height="2.4" fill="#c00000"/><line x1="1744.3" y1="873.5" x2="1748.3" y2="868.5" stroke="#b000b0" stroke-width="1"/><rect x="1705.1" y="892.6" width="2.4" height="2.4" fill="#c00000"/><line x1="1706.3" y1="893.8" x2="1710.3" y2="888.8" stroke="#b000b0" stroke-width="1"/><rect x="1713.8" y="922.1" width="2.4" height="2.4" fill="#c00000"/><line x1="1715" y1="923.3" x2="1719" y2="918.3" stroke="#b000b0" stroke-width="1"/><rect x="1742.4" y="903.9" width="2.4" height="2.4" fill="#c00000"/><line x1="1743.6" y1="905.1" x2="1747.6" y2="900.1" stroke="#b000b0" stroke-width="1"/><rect x="1726.8" y="836.6" width="2.4" height="2.4" fill="#c00000"/><line x1="1728" y1="837.8" x2="1732" y2="832.8" stroke="#b000b0" stroke-width="1"/><rect x="1724.7" y="837.2" width="2.4" height="2.4" fill="#c00000"/><line x1="1725.9" y1="838.4" x2="1729.9" y2="833.4" stroke="#b000b0" stroke-width="1"/><rect x="1734" y="926.2" width="2.4" height="2.4" fill="#c00000"/><line x1="1735.2" y1="927.4" x2="1739.2" y2="922.4" stroke="#b000b0" stroke-width="1"/><rect x="1711.4" y="876.8" width="2.4" height="2.4" fill="#c00000"/><line x1="1712.6" y1="878" x2="1716.6" y2="873" stroke="#b000b0" stroke-width="1"/><rect x="1700.3" y="918.4" width="2.4" height="2.4" fill="#c00000"/><line x1="1701.5" y1="919.6" x2="1705.5" y2="914.6" stroke="#b000b0" stroke-width="1"/><rect x="1716.2" y="925.1" width="2.4" height="2.4" fill="#c00000"/><line x1="1717.4" y1="926.3" x2="1721.4" y2="921.3" stroke="#b000b0" stroke-width="1"/><rect x="1699" y="919.3" width="2.4" height="2.4" fill="#c00000"/><line x1="1700.2" y1="920.5" x2="1704.2" y2="915.5" stroke="#b000b0" stroke-width="1"/><rect x="1704.6" y="853.5" width="2.4" height="2.4" fill="#c00000"/><line x1="1705.8" y1="854.7" x2="1709.8" y2="849.7" stroke="#b000b0" stroke-width="1"/><rect x="1723.8" y="842.4" width="2.4" height="2.4" fill="#c00000"/><line x1="1725" y1="843.6" x2="1729" y2="838.6" stroke="#b000b0" stroke-width="1"/><rect x="1703.2" y="903.3" width="2.4" height="2.4" fill="#c00000"/><line x1="1704.4" y1="904.5" x2="1708.4" y2="899.5" stroke="#b000b0" stroke-width="1"/><rect x="1716" y="894.4" width="2.4" height="2.4" fill="#c00000"/><line x1="1717.2" y1="895.6" x2="1721.2" y2="890.6" stroke="#b000b0" stroke-width="1"/><rect x="1734.3" y="934.2" width="2.4" height="2.4" fill="#c00000"/><line x1="1735.5" y1="935.4" x2="1739.5" y2="930.4" stroke="#b000b0" stroke-width="1"/><rect x="1743" y="942.3" width="2.4" height="2.4" fill="#c00000"/><line x1="1744.2" y1="943.5" x2="1748.2" y2="938.5" stroke="#b000b0" stroke-width="1"/><rect x="1744.2" y="831.9" width="2.4" height="2.4" fill="#c00000"/><line x1="1745.4" y1="833.1" x2="1749.4" y2="828.1" stroke="#b000b0" stroke-width="1"/><rect x="1732.9" y="829.1" width="2.4" height="2.4" fill="#c00000"/><line x1="1734.1" y1="830.3" x2="1738.1" y2="825.3" stroke="#b000b0" stroke-width="1"/><rect x="1742.4" y="842.2" width="2.4" height="2.4" fill="#c00000"/><line x1="1743.6" y1="843.4" x2="1747.6" y2="838.4" stroke="#b000b0" stroke-width="1"/><rect x="1719.6" y="923.3" width="2.4" height="2.4" fill="#c00000"/><line x1="1720.8" y1="924.5" x2="1724.8" y2="919.5" stroke="#b000b0" stroke-width="1"/><rect x="1707.3" y="870.5" width="2.4" height="2.4" fill="#c00000"/><line x1="1708.5" y1="871.7" x2="1712.5" y2="866.7" stroke="#b000b0" stroke-width="1"/><rect x="1718.8" y="876.8" width="2.4" height="2.4" fill="#c00000"/><line x1="1720" y1="878" x2="1724" y2="873" stroke="#b000b0" stroke-width="1"/><rect x="1746.5" y="915.3" width="2.4" height="2.4" fill="#c00000"/><line x1="1747.7" y1="916.5" x2="1751.7" y2="911.5" stroke="#b000b0" stroke-width="1"/><rect x="1708.1" y="934.2" width="2.4" height="2.4" fill="#c00000"/><line x1="1709.3" y1="935.4" x2="1713.3" y2="930.4" stroke="#b000b0" stroke-width="1"/><rect x="1730.4" y="908.7" width="2.4" height="2.4" fill="#c00000"/><line x1="1731.6" y1="909.9" x2="1735.6" y2="904.9" stroke="#b000b0" stroke-width="1"/><rect x="1734.7" y="853.4" width="2.4" height="2.4" fill="#c00000"/><line x1="1735.9" y1="854.6" x2="1739.9" y2="849.6" stroke="#b000b0" stroke-width="1"/><rect x="1711.2" y="905.5" width="2.4" height="2.4" fill="#c00000"/><line x1="1712.4" y1="906.7" x2="1716.4" y2="901.7" stroke="#b000b0" stroke-width="1"/><rect x="1738.1" y="858.5" width="2.4" height="2.4" fill="#c00000"/><line x1="1739.3" y1="859.7" x2="1743.3" y2="854.7" stroke="#b000b0" stroke-width="1"/><rect x="1708.7" y="948.7" width="2.4" height="2.4" fill="#c00000"/><line x1="1709.9" y1="949.9" x2="1713.9" y2="944.9" stroke="#b000b0" stroke-width="1"/><rect x="1702.6" y="840.4" width="2.4" height="2.4" fill="#c00000"/><line x1="1703.8" y1="841.6" x2="1707.8" y2="836.6" stroke="#b000b0" stroke-width="1"/><rect x="1706.6" y="829.7" width="2.4" height="2.4" fill="#c00000"/><line x1="1707.8" y1="830.9" x2="1711.8" y2="825.9" stroke="#b000b0" stroke-width="1"/><rect x="1701.5" y="906.7" width="2.4" height="2.4" fill="#c00000"/><line x1="1702.7" y1="907.9" x2="1706.7" y2="902.9" stroke="#b000b0" stroke-width="1"/><rect x="1713.3" y="841.1" width="2.4" height="2.4" fill="#c00000"/><line x1="1714.5" y1="842.3" x2="1718.5" y2="837.3" stroke="#b000b0" stroke-width="1"/><rect x="1746" y="849.5" width="2.4" height="2.4" fill="#c00000"/><line x1="1747.2" y1="850.7" x2="1751.2" y2="845.7" stroke="#b000b0" stroke-width="1"/><rect x="1711.1" y="870.2" width="2.4" height="2.4" fill="#c00000"/><line x1="1712.3" y1="871.4" x2="1716.3" y2="866.4" stroke="#b000b0" stroke-width="1"/><rect x="1706.7" y="909.5" width="2.4" height="2.4" fill="#c00000"/><line x1="1707.9" y1="910.7" x2="1711.9" y2="905.7" stroke="#b000b0" stroke-width="1"/><rect x="1720.4" y="918.3" width="2.4" height="2.4" fill="#c00000"/><line x1="1721.6" y1="919.5" x2="1725.6" y2="914.5" stroke="#b000b0" stroke-width="1"/><rect x="1718.7" y="858" width="2.4" height="2.4" fill="#c00000"/><line x1="1719.9" y1="859.2" x2="1723.9" y2="854.2" stroke="#b000b0" stroke-width="1"/><rect x="1734.5" y="846.4" width="2.4" height="2.4" fill="#c00000"/><line x1="1735.7" y1="847.6" x2="1739.7" y2="842.6" stroke="#b000b0" stroke-width="1"/><rect x="1739.4" y="850" width="2.4" height="2.4" fill="#c00000"/><line x1="1740.6" y1="851.2" x2="1744.6" y2="846.2" stroke="#b000b0" stroke-width="1"/><rect x="1725.9" y="853.7" width="2.4" height="2.4" fill="#c00000"/><line x1="1727.1" y1="854.9" x2="1731.1" y2="849.9" stroke="#b000b0" stroke-width="1"/><rect x="1706.1" y="935.4" width="2.4" height="2.4" fill="#c00000"/><line x1="1707.3" y1="936.6" x2="1711.3" y2="931.6" stroke="#b000b0" stroke-width="1"/><rect x="1731.2" y="888.8" width="2.4" height="2.4" fill="#c00000"/><line x1="1732.4" y1="890" x2="1736.4" y2="885" stroke="#b000b0" stroke-width="1"/><rect x="1724.5" y="915.1" width="2.4" height="2.4" fill="#c00000"/><line x1="1725.7" y1="916.3" x2="1729.7" y2="911.3" stroke="#b000b0" stroke-width="1"/><rect x="1703.9" y="872.3" width="2.4" height="2.4" fill="#c00000"/><line x1="1705.1" y1="873.5" x2="1709.1" y2="868.5" stroke="#b000b0" stroke-width="1"/><rect x="1722.6" y="833.6" width="2.4" height="2.4" fill="#c00000"/><line x1="1723.8" y1="834.8" x2="1727.8" y2="829.8" stroke="#b000b0" stroke-width="1"/><rect x="1704" y="834.6" width="2.4" height="2.4" fill="#c00000"/><line x1="1705.2" y1="835.8" x2="1709.2" y2="830.8" stroke="#b000b0" stroke-width="1"/><rect x="1713.5" y="944.7" width="2.4" height="2.4" fill="#c00000"/><line x1="1714.7" y1="945.9" x2="1718.7" y2="940.9" stroke="#b000b0" stroke-width="1"/><polyline points="1645,1188 1800,1188 1820,1180 1862,1180" fill="none" stroke="#00ffff" stroke-width="1.1"/><polyline points="1645,1191.8 1800,1191.8 1820,1183.8 1862,1183.8" fill="none" stroke="#ff00ff" stroke-width="1.1"/><polyline points="1645,1195.6 1800,1195.6 1820,1187.6 1862,1187.6" fill="none" stroke="#b000b0" stroke-width="1.1"/><polyline points="1645,1199.4 1800,1199.4 1820,1191.4 1862,1191.4" fill="none" stroke="#8c8c00" stroke-width="1.1"/><polyline points="1645,1203.2 1800,1203.2 1820,1195.2 1862,1195.2" fill="none" stroke="#00ffff" stroke-width="1.1"/><polyline points="1645,1207 1800,1207 1820,1199 1862,1199" fill="none" stroke="#ff00ff" stroke-width="1.1"/><polyline points="1645,1210.8 1800,1210.8 1820,1202.8 1862,1202.8" fill="none" stroke="#b000b0" stroke-width="1.1"/><polyline points="1645,1214.6 1800,1214.6 1820,1206.6 1862,1206.6" fill="none" stroke="#8c8c00" stroke-width="1.1"/><polyline points="1645,1218.4 1800,1218.4 1820,1210.4 1862,1210.4" fill="none" stroke="#00ffff" stroke-width="1.1"/><polyline points="1645,1222.2 1800,1222.2 1820,1214.2 1862,1214.2" fill="none" stroke="#ff00ff" stroke-width="1.1"/><polyline points="1645,1226 1800,1226 1820,1218 1862,1218" fill="none" stroke="#b000b0" stroke-width="1.1"/><polyline points="1645,1229.8 1800,1229.8 1820,1221.8 1862,1221.8" fill="none" stroke="#8c8c00" stroke-width="1.1"/><rect x="1506.3" y="1176.1" width="14" height="14" fill="none" stroke="#a8b098" stroke-width="1"/><rect x="1507.8" y="1177.6" width="11" height="4.9" fill="#8c8c8c"/><rect x="1507.8" y="1183.7" width="11" height="4.9" fill="#8c8c8c"/><rect x="1547.4" y="1151.5" width="10" height="8" fill="none" stroke="#a8b098" stroke-width="1"/><rect x="1548.9" y="1153" width="3.5" height="5" fill="#800000"/><rect x="1552.4" y="1153" width="3.5" height="5" fill="#800000"/><rect x="1542" y="1212.8" width="6" height="6" fill="none" stroke="#a8b098" stroke-width="1"/><rect x="1543.5" y="1214.3" width="3" height="2.1" fill="#8c8c8c"/><rect x="1543.5" y="1215.2" width="3" height="2.1" fill="#8c8c8c"/><rect x="1606.9" y="1206" width="6" height="10" fill="none" stroke="#a8b098" stroke-width="1"/><rect x="1608.4" y="1207.5" width="3" height="3.5" fill="#800000"/><rect x="1608.4" y="1211" width="3" height="3.5" fill="#800000"/><rect x="1574" y="1179.8" width="14" height="6" fill="none" stroke="#a8b098" stroke-width="1"/><rect x="1575.5" y="1181.3" width="4.9" height="3" fill="#8c8c8c"/><rect x="1581.6" y="1181.3" width="4.9" height="3" fill="#8c8c8c"/><rect x="1565.7" y="1176.2" width="14" height="14" fill="none" stroke="#a8b098" stroke-width="1"/><rect x="1567.2" y="1177.7" width="11" height="4.9" fill="#800000"/><rect x="1567.2" y="1183.8" width="11" height="4.9" fill="#800000"/><rect x="1522.7" y="1145.5" width="8" height="6" fill="none" stroke="#a8b098" stroke-width="1"/><rect x="1524.2" y="1147" width="2.8" height="3" fill="#800000"/><rect x="1526.4" y="1147" width="2.8" height="3" fill="#800000"/><rect x="1565.1" y="1131.3" width="14" height="8" fill="none" stroke="#a8b098" stroke-width="1"/><rect x="1566.6" y="1132.8" width="4.9" height="5" fill="#800000"/><rect x="1572.7" y="1132.8" width="4.9" height="5" fill="#800000"/><rect x="1488.2" y="1191.4" width="12" height="6" fill="none" stroke="#a8b098" stroke-width="1"/><rect x="1489.7" y="1192.9" width="4.2" height="3" fill="#800000"/><rect x="1494.5" y="1192.9" width="4.2" height="3" fill="#800000"/><rect x="1502.9" y="1203" width="14" height="6" fill="none" stroke="#a8b098" stroke-width="1"/><rect x="1504.4" y="1204.5" width="4.9" height="3" fill="#8c8c8c"/><rect x="1510.5" y="1204.5" width="4.9" height="3" fill="#8c8c8c"/><rect x="1560.2" y="1144.6" width="12" height="14" fill="none" stroke="#a8b098" stroke-width="1"/><rect x="1561.7" y="1146.1" width="9" height="4.9" fill="#ff00ff"/><rect x="1561.7" y="1152.2" width="9" height="4.9" fill="#ff00ff"/><rect x="1516.8" y="1215.7" width="8" height="8" fill="none" stroke="#a8b098" stroke-width="1"/><rect x="1518.3" y="1217.2" width="5" height="2.8" fill="#8c8c8c"/><rect x="1518.3" y="1219.4" width="5" height="2.8" fill="#8c8c8c"/><rect x="1617.3" y="1134.8" width="12" height="6" fill="none" stroke="#a8b098" stroke-width="1"/><rect x="1618.8" y="1136.3" width="4.2" height="3" fill="#800000"/><rect x="1623.6" y="1136.3" width="4.2" height="3" fill="#800000"/><rect x="1486.5" y="1160" width="8" height="8" fill="none" stroke="#a8b098" stroke-width="1"/><rect x="1488" y="1161.5" width="5" height="2.8" fill="#8c8c8c"/><rect x="1488" y="1163.7" width="5" height="2.8" fill="#8c8c8c"/><rect x="1537" y="1215.7" width="14" height="14" fill="none" stroke="#a8b098" stroke-width="1"/><rect x="1538.5" y="1217.2" width="11" height="4.9" fill="#800000"/><rect x="1538.5" y="1223.3" width="11" height="4.9" fill="#800000"/><rect x="1505.7" y="1199.6" width="12" height="14" fill="none" stroke="#a8b098" stroke-width="1"/><rect x="1507.2" y="1201.1" width="9" height="4.9" fill="#ff00ff"/><rect x="1507.2" y="1207.2" width="9" height="4.9" fill="#ff00ff"/><rect x="1487.3" y="1136" width="6" height="14" fill="none" stroke="#a8b098" stroke-width="1"/><rect x="1488.8" y="1137.5" width="3" height="4.9" fill="#ff00ff"/><rect x="1488.8" y="1143.6" width="3" height="4.9" fill="#ff00ff"/><rect x="1588.9" y="1170.7" width="8" height="10" fill="none" stroke="#a8b098" stroke-width="1"/><rect x="1590.4" y="1172.2" width="5" height="3.5" fill="#800000"/><rect x="1590.4" y="1175.7" width="5" height="3.5" fill="#800000"/><rect x="1474.5" y="1219.2" width="6" height="8" fill="none" stroke="#a8b098" stroke-width="1"/><rect x="1476" y="1220.7" width="3" height="2.8" fill="#ff00ff"/><rect x="1476" y="1222.9" width="3" height="2.8" fill="#ff00ff"/><rect x="1616.9" y="1190.7" width="8" height="10" fill="none" stroke="#a8b098" stroke-width="1"/><rect x="1618.4" y="1192.2" width="5" height="3.5" fill="#800000"/><rect x="1618.4" y="1195.7" width="5" height="3.5" fill="#800000"/><rect x="1487.3" y="1202.5" width="8" height="6" fill="none" stroke="#a8b098" stroke-width="1"/><rect x="1488.8" y="1204" width="2.8" height="3" fill="#800000"/><rect x="1491" y="1204" width="2.8" height="3" fill="#800000"/><rect x="1603.9" y="1222.7" width="14" height="6" fill="none" stroke="#a8b098" stroke-width="1"/><rect x="1605.4" y="1224.2" width="4.9" height="3" fill="#ff00ff"/><rect x="1611.5" y="1224.2" width="4.9" height="3" fill="#ff00ff"/><rect x="1547" y="1179.5" width="14" height="8" fill="none" stroke="#a8b098" stroke-width="1"/><rect x="1548.5" y="1181" width="4.9" height="5" fill="#800000"/><rect x="1554.6" y="1181" width="4.9" height="5" fill="#800000"/><rect x="1601.8" y="1140.3" width="14" height="10" fill="none" stroke="#a8b098" stroke-width="1"/><rect x="1603.3" y="1141.8" width="4.9" height="7" fill="#8c8c8c"/><rect x="1609.4" y="1141.8" width="4.9" height="7" fill="#8c8c8c"/><rect x="1611.9" y="1197" width="6" height="10" fill="none" stroke="#a8b098" stroke-width="1"/><rect x="1613.4" y="1198.5" width="3" height="3.5" fill="#800000"/><rect x="1613.4" y="1202" width="3" height="3.5" fill="#800000"/><rect x="1622.7" y="1208.3" width="6" height="8" fill="none" stroke="#a8b098" stroke-width="1"/><rect x="1624.2" y="1209.8" width="3" height="2.8" fill="#8c8c8c"/><rect x="1624.2" y="1212" width="3" height="2.8" fill="#8c8c8c"/><rect x="1594.8" y="1135.3" width="12" height="14" fill="none" stroke="#a8b098" stroke-width="1"/><rect x="1596.3" y="1136.8" width="9" height="4.9" fill="#800000"/><rect x="1596.3" y="1142.9" width="9" height="4.9" fill="#800000"/><rect x="1505.7" y="1167.3" width="6" height="8" fill="none" stroke="#a8b098" stroke-width="1"/><rect x="1507.2" y="1168.8" width="3" height="2.8" fill="#ff00ff"/><rect x="1507.2" y="1171" width="3" height="2.8" fill="#ff00ff"/><rect x="1524.9" y="1149.8" width="14" height="10" fill="none" stroke="#a8b098" stroke-width="1"/><rect x="1526.4" y="1151.3" width="4.9" height="7" fill="#ff00ff"/><rect x="1532.5" y="1151.3" width="4.9" height="7" fill="#ff00ff"/><rect x="1589.2" y="1187.4" width="6" height="8" fill="none" stroke="#a8b098" stroke-width="1"/><rect x="1590.7" y="1188.9" width="3" height="2.8" fill="#800000"/><rect x="1590.7" y="1191.1" width="3" height="2.8" fill="#800000"/><rect x="1575.4" y="1203.7" width="6" height="6" fill="none" stroke="#a8b098" stroke-width="1"/><rect x="1576.9" y="1205.2" width="3" height="2.1" fill="#ff00ff"/><rect x="1576.9" y="1206.1" width="3" height="2.1" fill="#ff00ff"/><rect x="1539" y="1219.9" width="8" height="6" fill="none" stroke="#a8b098" stroke-width="1"/><rect x="1540.5" y="1221.4" width="2.8" height="3" fill="#800000"/><rect x="1542.7" y="1221.4" width="2.8" height="3" fill="#800000"/><rect x="1577.9" y="1166.3" width="6" height="6" fill="none" stroke="#a8b098" stroke-width="1"/><rect x="1579.4" y="1167.8" width="3" height="2.1" fill="#8c8c8c"/><rect x="1579.4" y="1168.7" width="3" height="2.1" fill="#8c8c8c"/><rect x="1499.4" y="1184.6" width="14" height="10" fill="none" stroke="#a8b098" stroke-width="1"/><rect x="1500.9" y="1186.1" width="4.9" height="7" fill="#ff00ff"/><rect x="1507" y="1186.1" width="4.9" height="7" fill="#ff00ff"/><rect x="1601" y="1188.5" width="6" height="14" fill="none" stroke="#a8b098" stroke-width="1"/><rect x="1602.5" y="1190" width="3" height="4.9" fill="#800000"/><rect x="1602.5" y="1196.1" width="3" height="4.9" fill="#800000"/><rect x="1574.1" y="1146.8" width="14" height="10" fill="none" stroke="#a8b098" stroke-width="1"/><rect x="1575.6" y="1148.3" width="4.9" height="7" fill="#8c8c8c"/><rect x="1581.7" y="1148.3" width="4.9" height="7" fill="#8c8c8c"/><rect x="1570.6" y="1156.6" width="14" height="10" fill="none" stroke="#a8b098" stroke-width="1"/><rect x="1572.1" y="1158.1" width="4.9" height="7" fill="#8c8c8c"/><rect x="1578.2" y="1158.1" width="4.9" height="7" fill="#8c8c8c"/><rect x="1625.8" y="1207.7" width="12" height="8" fill="none" stroke="#a8b098" stroke-width="1"/><rect x="1627.3" y="1209.2" width="4.2" height="5" fill="#8c8c8c"/><rect x="1632.1" y="1209.2" width="4.2" height="5" fill="#8c8c8c"/><rect x="1485.3" y="1147.9" width="14" height="6" fill="none" stroke="#a8b098" stroke-width="1"/><rect x="1486.8" y="1149.4" width="4.9" height="3" fill="#ff00ff"/><rect x="1492.9" y="1149.4" width="4.9" height="3" fill="#ff00ff"/><rect x="1485.4" y="1210.6" width="10" height="14" fill="none" stroke="#a8b098" stroke-width="1"/><rect x="1486.9" y="1212.1" width="7" height="4.9" fill="#ff00ff"/><rect x="1486.9" y="1218.2" width="7" height="4.9" fill="#ff00ff"/><line x1="1604.5" y1="1213.4" x2="1623.8" y2="1230" stroke="#ff8c00" stroke-width="1"/><line x1="1624.1" y1="1133.1" x2="1640" y2="1129" stroke="#8c8c00" stroke-width="1"/><line x1="1473" y1="1179.9" x2="1502.3" y2="1179.9" stroke="#b000b0" stroke-width="1"/><line x1="1576.3" y1="1167" x2="1582.4" y2="1173.1" stroke="#b000b0" stroke-width="1"/><line x1="1480.7" y1="1195.8" x2="1490.2" y2="1195.8" stroke="#00ffff" stroke-width="1"/><line x1="1572.5" y1="1192" x2="1572.5" y2="1198.9" stroke="#b000b0" stroke-width="1"/><line x1="1511.3" y1="1222.3" x2="1519.2" y2="1214.4" stroke="#ff8c00" stroke-width="1"/><line x1="1630.1" y1="1173.2" x2="1639.5" y2="1163.7" stroke="#00ffff" stroke-width="1"/><line x1="1491.7" y1="1215.7" x2="1491.7" y2="1230" stroke="#00ffff" stroke-width="1"/><line x1="1509.7" y1="1134.9" x2="1535.8" y2="1134.9" stroke="#8c8c00" stroke-width="1"/><line x1="1612.2" y1="1209.3" x2="1640" y2="1209.3" stroke="#8c8c00" stroke-width="1"/><line x1="1484.1" y1="1140.2" x2="1484.1" y2="1166.5" stroke="#8c8c00" stroke-width="1"/><line x1="1595.2" y1="1228.6" x2="1607.5" y2="1216.3" stroke="#ff8c00" stroke-width="1"/><line x1="1622.2" y1="1193.3" x2="1640" y2="1172.6" stroke="#00ffff" stroke-width="1"/><line x1="1499.8" y1="1203.6" x2="1527.4" y2="1203.6" stroke="#8c8c00" stroke-width="1"/><line x1="1571.7" y1="1179.2" x2="1588.7" y2="1162.2" stroke="#8c8c00" stroke-width="1"/><line x1="1591.5" y1="1200.8" x2="1591.5" y2="1227.2" stroke="#b000b0" stroke-width="1"/><line x1="1484.1" y1="1185.5" x2="1503" y2="1204.4" stroke="#00ffff" stroke-width="1"/><line x1="1484.3" y1="1187" x2="1510.3" y2="1187" stroke="#ff8c00" stroke-width="1"/><line x1="1551.3" y1="1141.3" x2="1571.9" y2="1141.3" stroke="#b000b0" stroke-width="1"/><line x1="1576" y1="1155.2" x2="1586.6" y2="1155.2" stroke="#00ffff" stroke-width="1"/><line x1="1516.3" y1="1134.4" x2="1534.3" y2="1152.5" stroke="#b000b0" stroke-width="1"/><line x1="1523.9" y1="1162.7" x2="1538.9" y2="1147.8" stroke="#8c8c00" stroke-width="1"/><line x1="1625.5" y1="1179.8" x2="1629.9" y2="1175.4" stroke="#ff8c00" stroke-width="1"/><line x1="1535.6" y1="1195.6" x2="1550.1" y2="1210.1" stroke="#8c8c00" stroke-width="1"/><line x1="1495.5" y1="1174.1" x2="1525" y2="1174.1" stroke="#8c8c00" stroke-width="1"/><line x1="1587.8" y1="1166.1" x2="1600.5" y2="1178.8" stroke="#00ffff" stroke-width="1"/><line x1="1560.6" y1="1226.8" x2="1560.6" y2="1230" stroke="#8c8c00" stroke-width="1"/><line x1="1585.5" y1="1195.8" x2="1585.5" y2="1220.2" stroke="#00ffff" stroke-width="1"/><line x1="1512.9" y1="1218.2" x2="1527.3" y2="1230" stroke="#ff8c00" stroke-width="1"/><line x1="1528.6" y1="1153.3" x2="1528.6" y2="1181.2" stroke="#8c8c00" stroke-width="1"/><line x1="1534.5" y1="1156.8" x2="1539.8" y2="1162.1" stroke="#b000b0" stroke-width="1"/><line x1="1487.7" y1="1207.1" x2="1487.7" y2="1215.1" stroke="#ff8c00" stroke-width="1"/><line x1="1634.8" y1="1153" x2="1640" y2="1159.4" stroke="#b000b0" stroke-width="1"/><line x1="1628.2" y1="1223.7" x2="1628.2" y2="1230" stroke="#8c8c00" stroke-width="1"/><line x1="1611.8" y1="1143" x2="1611.8" y2="1156.3" stroke="#b000b0" stroke-width="1"/><line x1="1595.7" y1="1216.7" x2="1607.3" y2="1228.3" stroke="#00ffff" stroke-width="1"/><line x1="1494.6" y1="1222.2" x2="1504.1" y2="1230" stroke="#8c8c00" stroke-width="1"/><line x1="1523.3" y1="1149.6" x2="1544.4" y2="1149.6" stroke="#8c8c00" stroke-width="1"/><line x1="1551.2" y1="1173.3" x2="1562.7" y2="1184.8" stroke="#8c8c00" stroke-width="1"/><line x1="1592.8" y1="1145.9" x2="1592.8" y2="1159.7" stroke="#00ffff" stroke-width="1"/><line x1="1621.6" y1="1132" x2="1632.3" y2="1142.7" stroke="#ff8c00" stroke-width="1"/><line x1="1620.3" y1="1179.4" x2="1620.3" y2="1193.3" stroke="#00ffff" stroke-width="1"/><line x1="1545.5" y1="1163.3" x2="1552" y2="1163.3" stroke="#00ffff" stroke-width="1"/><line x1="1539.1" y1="1174.5" x2="1539.1" y2="1201.6" stroke="#b000b0" stroke-width="1"/><line x1="1531.6" y1="1163.3" x2="1531.6" y2="1188.5" stroke="#b000b0" stroke-width="1"/><line x1="1561" y1="1156.1" x2="1578.2" y2="1138.9" stroke="#8c8c00" stroke-width="1"/><line x1="1470.9" y1="1210.5" x2="1490.3" y2="1191.1" stroke="#8c8c00" stroke-width="1"/><line x1="1558.5" y1="1136.8" x2="1558.5" y2="1153.5" stroke="#00ffff" stroke-width="1"/><line x1="1587.8" y1="1206.7" x2="1615.5" y2="1206.7" stroke="#00ffff" stroke-width="1"/><line x1="1609.3" y1="1183.6" x2="1615" y2="1177.9" stroke="#b000b0" stroke-width="1"/><line x1="1566.9" y1="1169.4" x2="1576.9" y2="1159.4" stroke="#8c8c00" stroke-width="1"/><line x1="1495.5" y1="1146.2" x2="1514.7" y2="1146.2" stroke="#8c8c00" stroke-width="1"/><line x1="1510.4" y1="1148.5" x2="1524" y2="1134.9" stroke="#b000b0" stroke-width="1"/><line x1="1574" y1="1210.1" x2="1597" y2="1210.1" stroke="#8c8c00" stroke-width="1"/><line x1="1558.6" y1="1130.5" x2="1558.6" y2="1147.2" stroke="#ff8c00" stroke-width="1"/><line x1="1604.5" y1="1166.8" x2="1623.6" y2="1147.7" stroke="#b000b0" stroke-width="1"/><line x1="1632.7" y1="1162.8" x2="1632.7" y2="1176.5" stroke="#ff8c00" stroke-width="1"/><line x1="1620.6" y1="1166.9" x2="1636.7" y2="1166.9" stroke="#b000b0" stroke-width="1"/><line x1="1542.3" y1="1140.1" x2="1542.3" y2="1152.2" stroke="#00ffff" stroke-width="1"/><line x1="1607.6" y1="1189.3" x2="1620.1" y2="1176.8" stroke="#ff8c00" stroke-width="1"/><line x1="1553.7" y1="1148.8" x2="1553.7" y2="1168.5" stroke="#b000b0" stroke-width="1"/><line x1="1564.1" y1="1185.3" x2="1573.6" y2="1175.8" stroke="#8c8c00" stroke-width="1"/><line x1="1509.2" y1="1180.1" x2="1513.5" y2="1175.8" stroke="#b000b0" stroke-width="1"/><line x1="1471" y1="1146.2" x2="1495.5" y2="1146.2" stroke="#ff8c00" stroke-width="1"/><line x1="1606" y1="1188.7" x2="1606" y2="1195" stroke="#b000b0" stroke-width="1"/><line x1="1491.4" y1="1200" x2="1500.1" y2="1191.4" stroke="#00ffff" stroke-width="1"/><line x1="1485.8" y1="1163.7" x2="1485.8" y2="1192" stroke="#ff8c00" stroke-width="1"/><line x1="1560.7" y1="1187.6" x2="1572.6" y2="1175.6" stroke="#00ffff" stroke-width="1"/><line x1="1633.2" y1="1197.8" x2="1640" y2="1197.8" stroke="#8c8c00" stroke-width="1"/><line x1="1593.4" y1="1137.8" x2="1621" y2="1137.8" stroke="#b000b0" stroke-width="1"/><line x1="1595.8" y1="1157.1" x2="1610.1" y2="1142.8" stroke="#ff8c00" stroke-width="1"/><line x1="1518.3" y1="1174.5" x2="1538" y2="1154.7" stroke="#8c8c00" stroke-width="1"/><line x1="1474.3" y1="1194.7" x2="1493.6" y2="1214" stroke="#8c8c00" stroke-width="1"/><line x1="1504.4" y1="1158.9" x2="1504.4" y2="1167.1" stroke="#b000b0" stroke-width="1"/><line x1="1603.5" y1="1132.3" x2="1620.1" y2="1129" stroke="#8c8c00" stroke-width="1"/><line x1="1622.8" y1="1221.6" x2="1622.8" y2="1230" stroke="#b000b0" stroke-width="1"/><line x1="1595.5" y1="1199.7" x2="1612.3" y2="1182.9" stroke="#ff8c00" stroke-width="1"/><line x1="1509.9" y1="1167.4" x2="1509.9" y2="1177.4" stroke="#8c8c00" stroke-width="1"/><line x1="1533" y1="1204.3" x2="1533" y2="1220.4" stroke="#ff8c00" stroke-width="1"/><line x1="1518.6" y1="1160.4" x2="1528" y2="1150.9" stroke="#ff8c00" stroke-width="1"/><line x1="1593.3" y1="1186.2" x2="1602.4" y2="1177.1" stroke="#00ffff" stroke-width="1"/><line x1="1572.1" y1="1176.4" x2="1578.2" y2="1176.4" stroke="#00ffff" stroke-width="1"/><line x1="1628.4" y1="1228.6" x2="1640" y2="1230" stroke="#8c8c00" stroke-width="1"/><line x1="1569.8" y1="1145.6" x2="1569.8" y2="1160.6" stroke="#ff8c00" stroke-width="1"/><line x1="1621" y1="1188.5" x2="1640" y2="1188.5" stroke="#b000b0" stroke-width="1"/><line x1="1486.9" y1="1211.7" x2="1499.3" y2="1199.3" stroke="#8c8c00" stroke-width="1"/><line x1="1483.4" y1="1174.1" x2="1499.5" y2="1157.9" stroke="#00ffff" stroke-width="1"/><line x1="1596.4" y1="1221.9" x2="1609.7" y2="1221.9" stroke="#ff8c00" stroke-width="1"/><line x1="1563.7" y1="1199.4" x2="1572" y2="1207.8" stroke="#8c8c00" stroke-width="1"/><polygon points="1480.2,1153.2 1510.1,1153.2 1510.1,1179.8 1480.2,1179.8" fill="#ff00ff"/><rect x="1094.2" y="1129.1" width="14" height="8" fill="none" stroke="#a8b098" stroke-width="1"/><rect x="1095.7" y="1130.6" width="4.9" height="5" fill="#8c8c8c"/><rect x="1101.8" y="1130.6" width="4.9" height="5" fill="#8c8c8c"/><rect x="1022.5" y="1151.6" width="10" height="14" fill="none" stroke="#a8b098" stroke-width="1"/><rect x="1024" y="1153.1" width="7" height="4.9" fill="#8c8c8c"/><rect x="1024" y="1159.2" width="7" height="4.9" fill="#8c8c8c"/><rect x="1025.2" y="1134.6" width="10" height="10" fill="none" stroke="#a8b098" stroke-width="1"/><rect x="1026.7" y="1136.1" width="7" height="3.5" fill="#800000"/><rect x="1026.7" y="1139.6" width="7" height="3.5" fill="#800000"/><rect x="1180.5" y="1146.6" width="6" height="10" fill="none" stroke="#a8b098" stroke-width="1"/><rect x="1182" y="1148.1" width="3" height="3.5" fill="#800000"/><rect x="1182" y="1151.6" width="3" height="3.5" fill="#800000"/><rect x="1182.2" y="1164.2" width="10" height="8" fill="none" stroke="#a8b098" stroke-width="1"/><rect x="1183.7" y="1165.7" width="3.5" height="5" fill="#8c8c8c"/><rect x="1187.2" y="1165.7" width="3.5" height="5" fill="#8c8c8c"/><rect x="1028" y="1147.6" width="14" height="6" fill="none" stroke="#a8b098" stroke-width="1"/><rect x="1029.5" y="1149.1" width="4.9" height="3" fill="#8c8c8c"/><rect x="1035.6" y="1149.1" width="4.9" height="3" fill="#8c8c8c"/><rect x="1093.9" y="1142" width="14" height="14" fill="none" stroke="#a8b098" stroke-width="1"/><rect x="1095.4" y="1143.5" width="11" height="4.9" fill="#8c8c8c"/><rect x="1095.4" y="1149.6" width="11" height="4.9" fill="#8c8c8c"/><rect x="1046.8" y="1158.8" width="10" height="6" fill="none" stroke="#a8b098" stroke-width="1"/><rect x="1048.3" y="1160.3" width="3.5" height="3" fill="#800000"/><rect x="1051.8" y="1160.3" width="3.5" height="3" fill="#800000"/><rect x="1043.5" y="1141.3" width="6" height="14" fill="none" stroke="#a8b098" stroke-width="1"/><rect x="1045" y="1142.8" width="3" height="4.9" fill="#800000"/><rect x="1045" y="1148.9" width="3" height="4.9" fill="#800000"/><rect x="1172.9" y="1143.1" width="8" height="10" fill="none" stroke="#a8b098" stroke-width="1"/><rect x="1174.4" y="1144.6" width="5" height="3.5" fill="#8c8c8c"/><rect x="1174.4" y="1148.1" width="5" height="3.5" fill="#8c8c8c"/><rect x="1092.7" y="1155.5" width="14" height="14" fill="none" stroke="#a8b098" stroke-width="1"/><rect x="1094.2" y="1157" width="11" height="4.9" fill="#8c8c8c"/><rect x="1094.2" y="1163.1" width="11" height="4.9" fill="#8c8c8c"/><rect x="1032.3" y="1168.3" width="6" height="6" fill="none" stroke="#a8b098" stroke-width="1"/><rect x="1033.8" y="1169.8" width="3" height="2.1" fill="#8c8c8c"/><rect x="1033.8" y="1170.7" width="3" height="2.1" fill="#8c8c8c"/><rect x="1092.9" y="1129.4" width="8" height="10" fill="none" stroke="#a8b098" stroke-width="1"/><rect x="1094.4" y="1130.9" width="5" height="3.5" fill="#8c8c8c"/><rect x="1094.4" y="1134.4" width="5" height="3.5" fill="#8c8c8c"/><rect x="1106.6" y="1134.2" width="12" height="10" fill="none" stroke="#a8b098" stroke-width="1"/><rect x="1108.1" y="1135.7" width="4.2" height="7" fill="#800000"/><rect x="1112.9" y="1135.7" width="4.2" height="7" fill="#800000"/><rect x="1022.3" y="1130.2" width="10" height="14" fill="none" stroke="#a8b098" stroke-width="1"/><rect x="1023.8" y="1131.7" width="7" height="4.9" fill="#800000"/><rect x="1023.8" y="1137.8" width="7" height="4.9" fill="#800000"/><rect x="1183.1" y="1135.3" width="6" height="8" fill="none" stroke="#a8b098" stroke-width="1"/><rect x="1184.6" y="1136.8" width="3" height="2.8" fill="#800000"/><rect x="1184.6" y="1139" width="3" height="2.8" fill="#800000"/><rect x="1032.9" y="1158.8" width="6" height="6" fill="none" stroke="#a8b098" stroke-width="1"/><rect x="1034.4" y="1160.3" width="3" height="2.1" fill="#8c8c8c"/><rect x="1034.4" y="1161.2" width="3" height="2.1" fill="#8c8c8c"/><rect x="1117" y="1159.6" width="6" height="10" fill="none" stroke="#a8b098" stroke-width="1"/><rect x="1118.5" y="1161.1" width="3" height="3.5" fill="#800000"/><rect x="1118.5" y="1164.6" width="3" height="3.5" fill="#800000"/><rect x="1052.9" y="1130.2" width="12" height="8" fill="none" stroke="#a8b098" stroke-width="1"/><rect x="1054.4" y="1131.7" width="4.2" height="5" fill="#800000"/><rect x="1059.2" y="1131.7" width="4.2" height="5" fill="#800000"/><rect x="1133.8" y="1167.6" width="12" height="6" fill="none" stroke="#a8b098" stroke-width="1"/><rect x="1135.3" y="1169.1" width="4.2" height="3" fill="#8c8c8c"/><rect x="1140.1" y="1169.1" width="4.2" height="3" fill="#8c8c8c"/><rect x="1054.8" y="1150.9" width="10" height="6" fill="none" stroke="#a8b098" stroke-width="1"/><rect x="1056.3" y="1152.4" width="3.5" height="3" fill="#8c8c8c"/><rect x="1059.8" y="1152.4" width="3.5" height="3" fill="#8c8c8c"/><rect x="1023.9" y="1137.7" width="6" height="14" fill="none" stroke="#a8b098" stroke-width="1"/><rect x="1025.4" y="1139.2" width="3" height="4.9" fill="#8c8c8c"/><rect x="1025.4" y="1145.3" width="3" height="4.9" fill="#8c8c8c"/><rect x="1050.7" y="1164.9" width="10" height="10" fill="none" stroke="#a8b098" stroke-width="1"/><rect x="1052.2" y="1166.4" width="7" height="3.5" fill="#8c8c8c"/><rect x="1052.2" y="1169.9" width="7" height="3.5" fill="#8c8c8c"/><rect x="1092.7" y="1144.5" width="12" height="10" fill="none" stroke="#a8b098" stroke-width="1"/><rect x="1094.2" y="1146" width="4.2" height="7" fill="#800000"/><rect x="1099" y="1146" width="4.2" height="7" fill="#800000"/><rect x="1204" y="1167.8" width="8" height="6" fill="none" stroke="#a8b098" stroke-width="1"/><rect x="1205.5" y="1169.3" width="2.8" height="3" fill="#800000"/><rect x="1207.7" y="1169.3" width="2.8" height="3" fill="#800000"/><rect x="1028.7" y="1129.6" width="12" height="6" fill="none" stroke="#a8b098" stroke-width="1"/><rect x="1030.2" y="1131.1" width="4.2" height="3" fill="#8c8c8c"/><rect x="1035" y="1131.1" width="4.2" height="3" fill="#8c8c8c"/><rect x="1201.7" y="1137.3" width="10" height="6" fill="none" stroke="#a8b098" stroke-width="1"/><rect x="1203.2" y="1138.8" width="3.5" height="3" fill="#800000"/><rect x="1206.7" y="1138.8" width="3.5" height="3" fill="#800000"/><rect x="1084.1" y="1130.1" width="6" height="8" fill="none" stroke="#a8b098" stroke-width="1"/><rect x="1085.6" y="1131.6" width="3" height="2.8" fill="#800000"/><rect x="1085.6" y="1133.8" width="3" height="2.8" fill="#800000"/><rect x="1104.2" y="1142.7" width="10" height="8" fill="none" stroke="#a8b098" stroke-width="1"/><rect x="1105.7" y="1144.2" width="3.5" height="5" fill="#8c8c8c"/><rect x="1109.2" y="1144.2" width="3.5" height="5" fill="#8c8c8c"/><rect x="1048.1" y="1165.6" width="6" height="8" fill="none" stroke="#a8b098" stroke-width="1"/><rect x="1049.6" y="1167.1" width="3" height="2.8" fill="#8c8c8c"/><rect x="1049.6" y="1169.3" width="3" height="2.8" fill="#8c8c8c"/><line x1="1143.5" y1="1137.6" x2="1169.1" y2="1137.6" stroke="#00ff00" stroke-width="1"/><line x1="1090.8" y1="1159.8" x2="1090.8" y2="1171.5" stroke="#00ff00" stroke-width="1"/><line x1="1103.3" y1="1130" x2="1110.7" y2="1130" stroke="#00ff00" stroke-width="1"/><line x1="1082.9" y1="1166.5" x2="1102.1" y2="1147.3" stroke="#00ff00" stroke-width="1"/><line x1="1175.4" y1="1166.9" x2="1175.4" y2="1175" stroke="#ff0000" stroke-width="1"/><line x1="1167.1" y1="1170.3" x2="1191" y2="1170.3" stroke="#00ff00" stroke-width="1"/><line x1="1181.4" y1="1156.5" x2="1188.4" y2="1156.5" stroke="#00ff00" stroke-width="1"/><line x1="1021.6" y1="1154.5" x2="1041.9" y2="1154.5" stroke="#ff0000" stroke-width="1"/><line x1="1195.3" y1="1147.8" x2="1201.9" y2="1154.3" stroke="#00ff00" stroke-width="1"/><line x1="1188.4" y1="1166.2" x2="1205.4" y2="1166.2" stroke="#00ff00" stroke-width="1"/><line x1="1069.6" y1="1135.4" x2="1085" y2="1150.8" stroke="#00ff00" stroke-width="1"/><line x1="1216" y1="1136" x2="1230" y2="1129" stroke="#ff0000" stroke-width="1"/><line x1="1148" y1="1149.4" x2="1155.1" y2="1156.6" stroke="#00ff00" stroke-width="1"/><line x1="1052.5" y1="1130.8" x2="1065.6" y2="1129" stroke="#00ff00" stroke-width="1"/><line x1="1046.9" y1="1155.8" x2="1054.8" y2="1163.7" stroke="#00ff00" stroke-width="1"/><line x1="1116.7" y1="1150.2" x2="1116.7" y2="1164.2" stroke="#ff0000" stroke-width="1"/><line x1="1054.5" y1="1174.5" x2="1054.5" y2="1175" stroke="#00ff00" stroke-width="1"/><line x1="1228.7" y1="1144.7" x2="1230" y2="1129" stroke="#00ff00" stroke-width="1"/><line x1="1034.7" y1="1170.6" x2="1044.1" y2="1175" stroke="#00ff00" stroke-width="1"/><line x1="1213.2" y1="1158.1" x2="1213.2" y2="1170.8" stroke="#ff0000" stroke-width="1"/><line x1="1172.5" y1="1154.7" x2="1184.4" y2="1142.8" stroke="#ff0000" stroke-width="1"/><line x1="1033.6" y1="1140" x2="1033.6" y2="1150.8" stroke="#00ff00" stroke-width="1"/><line x1="1067.6" y1="1174.6" x2="1080" y2="1175" stroke="#00ff00" stroke-width="1"/><line x1="1222.9" y1="1133.7" x2="1230" y2="1133.7" stroke="#00ff00" stroke-width="1"/><line x1="1064.3" y1="1141.1" x2="1078.9" y2="1141.1" stroke="#ff0000" stroke-width="1"/><line x1="1063.3" y1="1169.1" x2="1071.2" y2="1175" stroke="#ff0000" stroke-width="1"/><line x1="1105.7" y1="1147.8" x2="1125.5" y2="1147.8" stroke="#00ff00" stroke-width="1"/><line x1="1154.3" y1="1133.8" x2="1167" y2="1129" stroke="#00ff00" stroke-width="1"/><line x1="1062.9" y1="1170" x2="1082.5" y2="1150.4" stroke="#00ff00" stroke-width="1"/><line x1="1175.1" y1="1140.2" x2="1175.1" y2="1146.7" stroke="#ff0000" stroke-width="1"/><line x1="1160.5" y1="1151.6" x2="1173.4" y2="1164.6" stroke="#ff0000" stroke-width="1"/><line x1="1074.6" y1="1145.2" x2="1091.4" y2="1161.9" stroke="#ff0000" stroke-width="1"/><line x1="1176.3" y1="1159.1" x2="1195.9" y2="1175" stroke="#00ff00" stroke-width="1"/><line x1="1134.7" y1="1138.2" x2="1142.4" y2="1145.8" stroke="#ff0000" stroke-width="1"/><line x1="1199.2" y1="1170.5" x2="1211.1" y2="1175" stroke="#00ff00" stroke-width="1"/><line x1="1118.4" y1="1129.5" x2="1118.4" y2="1147.6" stroke="#00ff00" stroke-width="1"/><line x1="1110.8" y1="1158" x2="1110.8" y2="1169.7" stroke="#ff0000" stroke-width="1"/><line x1="1188.8" y1="1142" x2="1204.2" y2="1142" stroke="#00ff00" stroke-width="1"/><line x1="1122.7" y1="1167.1" x2="1143.5" y2="1167.1" stroke="#00ff00" stroke-width="1"/><line x1="1115.6" y1="1164.4" x2="1131" y2="1164.4" stroke="#00ff00" stroke-width="1"/><line x1="1043.9" y1="1149" x2="1043.9" y2="1166.8" stroke="#ff0000" stroke-width="1"/><line x1="1038" y1="1169.5" x2="1058.9" y2="1148.5" stroke="#00ff00" stroke-width="1"/><line x1="1222.3" y1="1156.3" x2="1230" y2="1156.3" stroke="#00ff00" stroke-width="1"/><line x1="1024.6" y1="1167.6" x2="1041.8" y2="1167.6" stroke="#00ff00" stroke-width="1"/><line x1="1182.4" y1="1129.1" x2="1182.4" y2="1139.7" stroke="#ff0000" stroke-width="1"/><line x1="1175.7" y1="1161.3" x2="1183.3" y2="1168.9" stroke="#00ff00" stroke-width="1"/><line x1="1093.7" y1="1157.6" x2="1101.8" y2="1149.5" stroke="#00ff00" stroke-width="1"/><line x1="1151.7" y1="1136.6" x2="1151.7" y2="1149.4" stroke="#00ff00" stroke-width="1"/><line x1="1226.6" y1="1131.6" x2="1230" y2="1129" stroke="#00ff00" stroke-width="1"/><line x1="1215.6" y1="1174.1" x2="1215.6" y2="1175" stroke="#ff0000" stroke-width="1"/><line x1="1095.9" y1="1158" x2="1116.4" y2="1158" stroke="#ff0000" stroke-width="1"/><line x1="1225.1" y1="1153.9" x2="1230" y2="1163.1" stroke="#00ff00" stroke-width="1"/><line x1="1087.4" y1="1152" x2="1087.4" y2="1168" stroke="#00ff00" stroke-width="1"/><line x1="1149" y1="1148.1" x2="1149" y2="1168.1" stroke="#00ff00" stroke-width="1"/><line x1="1059.4" y1="1139.6" x2="1059.4" y2="1145.7" stroke="#ff0000" stroke-width="1"/><line x1="1149.2" y1="1161.2" x2="1149.2" y2="1171.4" stroke="#ff0000" stroke-width="1"/><line x1="1198.7" y1="1129.7" x2="1208.9" y2="1139.9" stroke="#ff0000" stroke-width="1"/><line x1="1131.6" y1="1131.3" x2="1131.6" y2="1138.7" stroke="#00ff00" stroke-width="1"/><line x1="1169.6" y1="1148.6" x2="1188.9" y2="1167.9" stroke="#00ff00" stroke-width="1"/><line x1="1184.8" y1="1135.7" x2="1184.8" y2="1144.5" stroke="#ff0000" stroke-width="1"/><rect x="963.6" y="1177.6" width="10" height="6" fill="none" stroke="#a8b098" stroke-width="1"/><rect x="965.1" y="1179.1" width="3.5" height="3" fill="#800000"/><rect x="968.6" y="1179.1" width="3.5" height="3" fill="#800000"/><rect x="967.9" y="1189.7" width="12" height="10" fill="none" stroke="#a8b098" stroke-width="1"/><rect x="969.4" y="1191.2" width="4.2" height="7" fill="#800000"/><rect x="974.2" y="1191.2" width="4.2" height="7" fill="#800000"/><rect x="979.3" y="1181.2" width="8" height="8" fill="none" stroke="#a8b098" stroke-width="1"/><rect x="980.8" y="1182.7" width="5" height="2.8" fill="#800000"/><rect x="980.8" y="1184.9" width="5" height="2.8" fill="#800000"/><rect x="1009.8" y="1184.9" width="12" height="14" fill="none" stroke="#a8b098" stroke-width="1"/><rect x="1011.3" y="1186.4" width="9" height="4.9" fill="#800000"/><rect x="1011.3" y="1192.5" width="9" height="4.9" fill="#800000"/><rect x="981.4" y="1208.6" width="8" height="10" fill="none" stroke="#a8b098" stroke-width="1"/><rect x="982.9" y="1210.1" width="5" height="3.5" fill="#800000"/><rect x="982.9" y="1213.6" width="5" height="3.5" fill="#800000"/><rect x="1009.2" y="1185.3" width="12" height="6" fill="none" stroke="#a8b098" stroke-width="1"/><rect x="1010.7" y="1186.8" width="4.2" height="3" fill="#800000"/><rect x="1015.5" y="1186.8" width="4.2" height="3" fill="#800000"/><rect x="977.5" y="1196.3" width="8" height="14" fill="none" stroke="#a8b098" stroke-width="1"/><rect x="979" y="1197.8" width="5" height="4.9" fill="#800000"/><rect x="979" y="1203.9" width="5" height="4.9" fill="#800000"/><rect x="997.3" y="1198.8" width="10" height="8" fill="none" stroke="#a8b098" stroke-width="1"/><rect x="998.8" y="1200.3" width="3.5" height="5" fill="#800000"/><rect x="1002.3" y="1200.3" width="3.5" height="5" fill="#800000"/><rect x="1015.7" y="1202.2" width="10" height="6" fill="none" stroke="#a8b098" stroke-width="1"/><rect x="1017.2" y="1203.7" width="3.5" height="3" fill="#800000"/><rect x="1020.7" y="1203.7" width="3.5" height="3" fill="#800000"/><rect x="987.3" y="1178" width="8" height="6" fill="none" stroke="#a8b098" stroke-width="1"/><rect x="988.8" y="1179.5" width="2.8" height="3" fill="#800000"/><rect x="991" y="1179.5" width="2.8" height="3" fill="#800000"/><rect x="943.4" y="1200.4" width="14" height="8" fill="none" stroke="#a8b098" stroke-width="1"/><rect x="944.9" y="1201.9" width="4.9" height="5" fill="#800000"/><rect x="951" y="1201.9" width="4.9" height="5" fill="#800000"/><rect x="990.8" y="1189.9" width="14" height="8" fill="none" stroke="#a8b098" stroke-width="1"/><rect x="992.3" y="1191.4" width="4.9" height="5" fill="#800000"/><rect x="998.4" y="1191.4" width="4.9" height="5" fill="#800000"/><line x1="965" y1="1177.5" x2="981" y2="1175" stroke="#ff0000" stroke-width="1"/><line x1="997.7" y1="1200" x2="1018.2" y2="1220.5" stroke="#00ff00" stroke-width="1"/><line x1="1012.2" y1="1223.4" x2="1012.2" y2="1225" stroke="#00ff00" stroke-width="1"/><line x1="980.6" y1="1218.6" x2="985.3" y2="1223.3" stroke="#00ff00" stroke-width="1"/><line x1="1002.8" y1="1183.6" x2="1007.2" y2="1188" stroke="#00ff00" stroke-width="1"/><line x1="956.9" y1="1204.7" x2="983.8" y2="1204.7" stroke="#ff0000" stroke-width="1"/><line x1="977.6" y1="1222.9" x2="986.9" y2="1213.6" stroke="#ff0000" stroke-width="1"/><line x1="1023.7" y1="1207" x2="1023.7" y2="1216.2" stroke="#ff0000" stroke-width="1"/><line x1="977.7" y1="1221.3" x2="984.3" y2="1214.8" stroke="#00ff00" stroke-width="1"/><line x1="965.7" y1="1194.5" x2="970.8" y2="1199.6" stroke="#ff0000" stroke-width="1"/><line x1="985.1" y1="1223.6" x2="1003.5" y2="1225" stroke="#ff0000" stroke-width="1"/><line x1="1008.8" y1="1199.1" x2="1021.7" y2="1199.1" stroke="#00ff00" stroke-width="1"/><line x1="1004.2" y1="1222.7" x2="1009" y2="1225" stroke="#ff0000" stroke-width="1"/><line x1="994.9" y1="1176.8" x2="1014.6" y2="1196.4" stroke="#00ff00" stroke-width="1"/><line x1="961" y1="1207.8" x2="975.1" y2="1207.8" stroke="#ff0000" stroke-width="1"/><line x1="988.2" y1="1190.2" x2="988.2" y2="1203.1" stroke="#00ff00" stroke-width="1"/><line x1="994" y1="1183.7" x2="1012" y2="1201.7" stroke="#00ff00" stroke-width="1"/><line x1="1010.9" y1="1195.2" x2="1010.9" y2="1207.2" stroke="#ff0000" stroke-width="1"/><line x1="1006.2" y1="1182.5" x2="1006.2" y2="1212.5" stroke="#00ff00" stroke-width="1"/><line x1="968.4" y1="1195.8" x2="982.5" y2="1181.7" stroke="#00ff00" stroke-width="1"/><line x1="955.7" y1="1193" x2="964.6" y2="1184.1" stroke="#ff0000" stroke-width="1"/><line x1="960.3" y1="1219.2" x2="976" y2="1225" stroke="#ff0000" stroke-width="1"/><line x1="1018.4" y1="1181.6" x2="1030" y2="1181.6" stroke="#ff0000" stroke-width="1"/><line x1="962.9" y1="1207.6" x2="975.8" y2="1220.4" stroke="#00ff00" stroke-width="1"/><line x1="942.6" y1="1202.2" x2="951.4" y2="1202.2" stroke="#ff0000" stroke-width="1"/><line x1="1016.9" y1="1186" x2="1016.9" y2="1202.5" stroke="#ff0000" stroke-width="1"/><line x1="953.4" y1="1194.7" x2="966.7" y2="1194.7" stroke="#00ff00" stroke-width="1"/><line x1="1018.3" y1="1193.5" x2="1026" y2="1185.8" stroke="#00ff00" stroke-width="1"/><line x1="974.9" y1="1183.2" x2="985.9" y2="1194.2" stroke="#00ff00" stroke-width="1"/><line x1="973.6" y1="1212" x2="982.4" y2="1212" stroke="#ff0000" stroke-width="1"/></g><rect x="938" y="578" width="925" height="661" rx="15" fill="none" stroke="#fff" stroke-width="2"/></svg>
<div class="a" style="left:1013.5px;top:610.4px;width:566px;height:519px;transform:scale(1.0);transform-origin:0 0"><div class="a" style="left:0;top:0;width:566px;height:519px;background:#fff;border-radius:13px"></div><svg class="a" style="left:495px;top:-17px" width="28" height="19" viewBox="0 0 28 19"><path d="M0 18 L13 0 L27 18 Z" fill="#fff"/></svg><div class="a" style="left:14px;top:8.5px;font-size:15px;line-height:18px;color:#2a8cf6;white-space:nowrap">Please choose your preferred color scheme for boardview</div><div class="a" style="left:13.5px;top:30.5px;font-size:15px;line-height:18px;color:#ff0000;font-weight:700;letter-spacing:-0.17px;white-space:nowrap">(***You must select a color scheme and click the OK button to close the</div><div class="a" style="left:13.5px;top:49.5px;font-size:15px;line-height:18px;color:#ff0000;font-weight:700;letter-spacing:-0.17px;white-space:nowrap">window***)</div><div class="a" style="left:14px;top:76px;width:539px;height:391px;border:1px solid #c6dcc6;border-radius:4px"></div><div class="a" style="left:23.5px;top:86.4px;width:159px;height:119px;background:#ff6464;box-shadow:0 0 4px 2px rgba(255,120,120,0.6)"></div><div class="a" style="left:28.0px;top:94.4px;width:12px;height:12px;border-radius:50%;background:#fff;border:1px solid #1e80f0"></div><div class="a" style="left:31.0px;top:97.4px;width:6px;height:6px;border-radius:50%;background:#1e80f0"></div><div class="a" style="left:42.0px;top:91.9px;font-size:15px;line-height:18px;color:#111;white-space:nowrap">DefaultColor</div><svg class="a" style="left:26.5px;top:109.9px" width="152" height="92" viewBox="0 0 152 92"><rect width="152" height="92" fill="#000"/><path d="M10 9.7 H143.6 Q148.6 9.7 148.6 14.7 V77.8 Q148.6 82.8 143.6 82.8 H58.4 Q53.4 82.8 53.4 77.8 V67.4 Q53.4 62.4 48.4 62.4 H10 Q5 62.4 5 57.4 V14.7 Q5 9.7 10 9.7 Z" fill="none" stroke="#ff00ff" stroke-width="2"/><rect x="10.5" y="15.3" width="38.3" height="24.2" fill="#6b6a00"/><rect x="15" y="19.5" width="29" height="16" fill="#6b6a00" stroke="#a8b860" stroke-width="2"/><rect x="17.5" y="22" width="7.5" height="11" fill="#c07010"/><rect x="33.5" y="22" width="8.5" height="11" fill="#ffff00"/><rect x="85" y="20" width="41" height="41" fill="none" stroke="#7f9878" stroke-width="1.6"/><circle cx="91" cy="25.5" r="3" fill="#800000"/><circle cx="101" cy="25.5" r="3" fill="#800000"/><circle cx="111" cy="25.5" r="3" fill="#800000"/><circle cx="121" cy="25.5" r="3" fill="#800000"/><circle cx="91" cy="35.5" r="3" fill="#800000"/><circle cx="101" cy="35.5" r="3" fill="#800000"/><circle cx="111" cy="35.5" r="3" fill="#800000"/><circle cx="121" cy="35.5" r="3" fill="#800000"/><circle cx="91" cy="45.5" r="3" fill="#800000"/><circle cx="101" cy="45.5" r="3" fill="#800000"/><circle cx="111" cy="45.5" r="3" fill="#ffff00"/><circle cx="121" cy="45.5" r="3" fill="#800000"/><circle cx="91" cy="55.5" r="3" fill="#800000"/><circle cx="101" cy="55.5" r="3" fill="#800000"/><circle cx="111" cy="55.5" r="3" fill="#800000"/><circle cx="121" cy="55.5" r="3" fill="#800000"/></svg><div class="a" style="left:189px;top:86.4px;width:159px;height:119px;background:#fff;border:1px solid #dcdcdc"></div><div class="a" style="left:193.5px;top:94.4px;width:12px;height:12px;border-radius:50%;background:#f4f7fc;border:1px solid #b8b8b8"></div><div class="a" style="left:207.5px;top:91.9px;font-size:15px;line-height:18px;color:#111;white-space:nowrap">BlackBoard1</div><svg class="a" style="left:192px;top:109.9px" width="152" height="92" viewBox="0 0 152 92"><rect width="152" height="92" fill="#e4e4e4"/><path d="M10 9.7 H143.6 Q148.6 9.7 148.6 14.7 V77.8 Q148.6 82.8 143.6 82.8 H58.4 Q53.4 82.8 53.4 77.8 V67.4 Q53.4 62.4 48.4 62.4 H10 Q5 62.4 5 57.4 V14.7 Q5 9.7 10 9.7 Z" fill="#202020"/><rect x="10.5" y="15.3" width="38.3" height="24.2" fill="#7a3c78"/><rect x="15" y="19.5" width="29" height="16" fill="#7a3c78" stroke="#f0b0e8" stroke-width="2"/><rect x="17.5" y="22" width="7.5" height="11" fill="#d09060"/><rect x="33.5" y="22" width="8.5" height="11" fill="#ff3080"/><rect x="85" y="20" width="41" height="41" fill="none" stroke="#c8c8c8" stroke-width="1.6"/><circle cx="91" cy="25.5" r="3" fill="#c89600"/><circle cx="101" cy="25.5" r="3" fill="#c89600"/><circle cx="111" cy="25.5" r="3" fill="#c89600"/><circle cx="121" cy="25.5" r="3" fill="#c89600"/><circle cx="91" cy="35.5" r="3" fill="#c89600"/><circle cx="101" cy="35.5" r="3" fill="#c89600"/><circle cx="111" cy="35.5" r="3" fill="#c89600"/><circle cx="121" cy="35.5" r="3" fill="#c89600"/><circle cx="91" cy="45.5" r="3" fill="#c89600"/><circle cx="101" cy="45.5" r="3" fill="#c89600"/><circle cx="111" cy="45.5" r="3" fill="#ff0000"/><circle cx="121" cy="45.5" r="3" fill="#c89600"/><circle cx="91" cy="55.5" r="3" fill="#c89600"/><circle cx="101" cy="55.5" r="3" fill="#c89600"/><circle cx="111" cy="55.5" r="3" fill="#c89600"/><circle cx="121" cy="55.5" r="3" fill="#c89600"/></svg><div class="a" style="left:354px;top:86.4px;width:159px;height:119px;background:#fff;border:1px solid #dcdcdc"></div><div class="a" style="left:358.5px;top:94.4px;width:12px;height:12px;border-radius:50%;background:#f4f7fc;border:1px solid #b8b8b8"></div><div class="a" style="left:372.5px;top:91.9px;font-size:15px;line-height:18px;color:#111;white-space:nowrap">BlackBoard2</div><svg class="a" style="left:357px;top:109.9px" width="152" height="92" viewBox="0 0 152 92"><rect width="152" height="92" fill="#d2d2d2"/><path d="M10 9.7 H143.6 Q148.6 9.7 148.6 14.7 V77.8 Q148.6 82.8 143.6 82.8 H58.4 Q53.4 82.8 53.4 77.8 V67.4 Q53.4 62.4 48.4 62.4 H10 Q5 62.4 5 57.4 V14.7 Q5 9.7 10 9.7 Z" fill="#0a0a0a"/><rect x="10.5" y="15.3" width="38.3" height="24.2" fill="#6a0c0c"/><rect x="15" y="19.5" width="29" height="16" fill="#700000" stroke="#f0a0a0" stroke-width="2"/><rect x="17.5" y="22" width="7.5" height="11" fill="#ff8050"/><rect x="33.5" y="22" width="8.5" height="11" fill="#ff5090"/><rect x="85" y="20" width="41" height="41" fill="none" stroke="#ffffff" stroke-width="1.6"/><circle cx="91" cy="25.5" r="3" fill="#ffb070"/><circle cx="101" cy="25.5" r="3" fill="#ffb070"/><circle cx="111" cy="25.5" r="3" fill="#ffb070"/><circle cx="121" cy="25.5" r="3" fill="#ffb070"/><circle cx="91" cy="35.5" r="3" fill="#ffb070"/><circle cx="101" cy="35.5" r="3" fill="#ffb070"/><circle cx="111" cy="35.5" r="3" fill="#ffb070"/><circle cx="121" cy="35.5" r="3" fill="#ffb070"/><circle cx="91" cy="45.5" r="3" fill="#ffb070"/><circle cx="101" cy="45.5" r="3" fill="#ffb070"/><circle cx="111" cy="45.5" r="3" fill="#ff60ff"/><circle cx="121" cy="45.5" r="3" fill="#ffb070"/><circle cx="91" cy="55.5" r="3" fill="#ffb070"/><circle cx="101" cy="55.5" r="3" fill="#ffb070"/><circle cx="111" cy="55.5" r="3" fill="#ffb070"/><circle cx="121" cy="55.5" r="3" fill="#ffb070"/></svg><div class="a" style="left:23.5px;top:211px;width:159px;height:119px;background:#fff;border:1px solid #dcdcdc"></div><div class="a" style="left:28.0px;top:219px;width:12px;height:12px;border-radius:50%;background:#f4f7fc;border:1px solid #b8b8b8"></div><div class="a" style="left:42.0px;top:216.5px;font-size:15px;line-height:18px;color:#111;white-space:nowrap">BlackBoard3</div><svg class="a" style="left:26.5px;top:234.5px" width="152" height="92" viewBox="0 0 152 92"><rect width="152" height="92" fill="#0a0a0a"/><path d="M10 9.7 H143.6 Q148.6 9.7 148.6 14.7 V77.8 Q148.6 82.8 143.6 82.8 H58.4 Q53.4 82.8 53.4 77.8 V67.4 Q53.4 62.4 48.4 62.4 H10 Q5 62.4 5 57.4 V14.7 Q5 9.7 10 9.7 Z" fill="#282828"/><rect x="10.5" y="15.3" width="38.3" height="24.2" fill="#163c64"/><rect x="15" y="19.5" width="29" height="16" fill="#163c64" stroke="#2080ff" stroke-width="2"/><rect x="17.5" y="22" width="7.5" height="11" fill="#a8a080"/><rect x="33.5" y="22" width="8.5" height="11" fill="#c04060"/><rect x="85" y="20" width="41" height="41" fill="none" stroke="#2080ff" stroke-width="1.6"/><circle cx="91" cy="25.5" r="3" fill="#ffb070"/><circle cx="101" cy="25.5" r="3" fill="#ffb070"/><circle cx="111" cy="25.5" r="3" fill="#ffb070"/><circle cx="121" cy="25.5" r="3" fill="#ffb070"/><circle cx="91" cy="35.5" r="3" fill="#ffb070"/><circle cx="101" cy="35.5" r="3" fill="#ffb070"/><circle cx="111" cy="35.5" r="3" fill="#ffb070"/><circle cx="121" cy="35.5" r="3" fill="#ffb070"/><circle cx="91" cy="45.5" r="3" fill="#ffb070"/><circle cx="101" cy="45.5" r="3" fill="#ffb070"/><circle cx="111" cy="45.5" r="3" fill="#ff0000"/><circle cx="121" cy="45.5" r="3" fill="#ffb070"/><circle cx="91" cy="55.5" r="3" fill="#ffb070"/><circle cx="101" cy="55.5" r="3" fill="#ffb070"/><circle cx="111" cy="55.5" r="3" fill="#ffb070"/><circle cx="121" cy="55.5" r="3" fill="#ffb070"/></svg><div class="a" style="left:189px;top:211px;width:159px;height:119px;background:#fff;border:1px solid #dcdcdc"></div><div class="a" style="left:193.5px;top:219px;width:12px;height:12px;border-radius:50%;background:#f4f7fc;border:1px solid #b8b8b8"></div><div class="a" style="left:207.5px;top:216.5px;font-size:15px;line-height:18px;color:#111;white-space:nowrap">GreenBoard</div><svg class="a" style="left:192px;top:234.5px" width="152" height="92" viewBox="0 0 152 92"><rect width="152" height="92" fill="#ffffff"/><path d="M10 9.7 H143.6 Q148.6 9.7 148.6 14.7 V77.8 Q148.6 82.8 143.6 82.8 H58.4 Q53.4 82.8 53.4 77.8 V67.4 Q53.4 62.4 48.4 62.4 H10 Q5 62.4 5 57.4 V14.7 Q5 9.7 10 9.7 Z" fill="#006830"/><rect x="10.5" y="15.3" width="38.3" height="24.2" fill="#6a3018"/><rect x="15" y="19.5" width="29" height="16" fill="#6a3018" stroke="#f0a090" stroke-width="2"/><rect x="17.5" y="22" width="7.5" height="11" fill="#ff8020"/><rect x="33.5" y="22" width="8.5" height="11" fill="#ff0000"/><rect x="85" y="20" width="41" height="41" fill="none" stroke="#f0f0f0" stroke-width="1.6"/><circle cx="91" cy="25.5" r="3" fill="#ffe040"/><circle cx="101" cy="25.5" r="3" fill="#ffe040"/><circle cx="111" cy="25.5" r="3" fill="#ffe040"/><circle cx="121" cy="25.5" r="3" fill="#ffe040"/><circle cx="91" cy="35.5" r="3" fill="#ffe040"/><circle cx="101" cy="35.5" r="3" fill="#ffe040"/><circle cx="111" cy="35.5" r="3" fill="#ffe040"/><circle cx="121" cy="35.5" r="3" fill="#ffe040"/><circle cx="91" cy="45.5" r="3" fill="#ffe040"/><circle cx="101" cy="45.5" r="3" fill="#ffe040"/><circle cx="111" cy="45.5" r="3" fill="#ff0000"/><circle cx="121" cy="45.5" r="3" fill="#ffe040"/><circle cx="91" cy="55.5" r="3" fill="#ffe040"/><circle cx="101" cy="55.5" r="3" fill="#ffe040"/><circle cx="111" cy="55.5" r="3" fill="#ffe040"/><circle cx="121" cy="55.5" r="3" fill="#ffe040"/></svg><div class="a" style="left:13.5px;top:478.6px;width:163.5px;height:30px;background:#5593fb;border-radius:3px"></div><div class="a" style="left:23px;top:487px;font-size:15px;line-height:18px;color:#fff;white-space:nowrap">Custom color scheme</div><div class="a" style="left:492.5px;top:478.6px;width:60.5px;height:30px;background:#5593fb;border-radius:3px"></div><div class="a" style="left:492.5px;top:487px;width:60.5px;text-align:center;font-size:15px;line-height:18px;color:#fff">OK</div></div>
<div class="a" style="left:619px;top:1266px;font-size:44px;line-height:56px;font-weight:700;color:#fff;letter-spacing:-0.05px;transform:scaleY(1.11);transform-origin:0 0;white-space:nowrap">Custom Colorways</div>
<div class="a sw" style="left:620.6px;top:1358px;background:#80a000"></div>
<div class="a sw" style="left:699.7px;top:1358px;background:#0000ff"></div>
<div class="a sw" style="left:778.8px;top:1358px;background:#008000"></div>
<div class="a sw" style="left:857.8px;top:1358px;background:#00ff00"></div>
<div class="a sw" style="left:936.9px;top:1358px;background:#000080"></div>
<div class="a sw" style="left:1016.0px;top:1358px;background:#00ffff"></div>
<div class="a sw" style="left:1095.1px;top:1358px;background:#800080"></div>
<div class="a sw" style="left:1174.2px;top:1358px;background:#ff00ff"></div>
<div class="a sw" style="left:1253.2px;top:1358px;background:#808000"></div>
<div class="a sw" style="left:1332.3px;top:1358px;background:#ffff00"></div>
<div class="a sw" style="left:1411.4px;top:1358px;background:#646464"></div>
<div class="a sw" style="left:1490.5px;top:1358px;background:#ffffff"></div>
<div class="a sw" style="left:1569.6px;top:1358px;background:#800080"></div>
<div class="a sw" style="left:1648.6px;top:1358px;background:#008080"></div>
<div class="a sw" style="left:1727.7px;top:1358px;background:#c0c0c0"></div>
<div class="a sw" style="left:1806.8px;top:1358px;background:#5a3000"></div>
<div class="a" style="left:624px;top:1426px;width:1235px;height:1.5px;background:#e8e8f0"></div>
<div class="a sw" style="left:620.6px;top:1442px;background:#e6e6e6"></div>
<div class="a sw" style="left:711.9px;top:1442px;background:#ff0000"></div>
<div class="a sw" style="left:803.1px;top:1442px;background:#0000ff"></div>
<div class="a sw" style="left:894.4px;top:1442px;background:#ffffff"></div>
<div class="a sw" style="left:985.6px;top:1442px;background:#c8c8c8"></div>
<div class="a sw" style="left:1076.8px;top:1442px;background:#80ffff"></div>
<div class="a sw" style="left:1168.1px;top:1442px;background:#ff80ff"></div>
<div class="a sw" style="left:1259.3px;top:1442px;background:#646464"></div>
<div class="a sw" style="left:1350.6px;top:1442px;background:#008080"></div>
<div class="a sw" style="left:1441.8px;top:1442px;background:#202020"></div>
<div class="a sw" style="left:1533.1px;top:1442px;background:#c89600"></div>
<div class="a sw" style="left:1624.3px;top:1442px;background:#00b060"></div>
<div class="a sw" style="left:1715.6px;top:1442px;background:#0080ff"></div>
<div class="a sw" style="left:1806.8px;top:1442px;background:#ffffff"></div>
</div></div></body></html>
